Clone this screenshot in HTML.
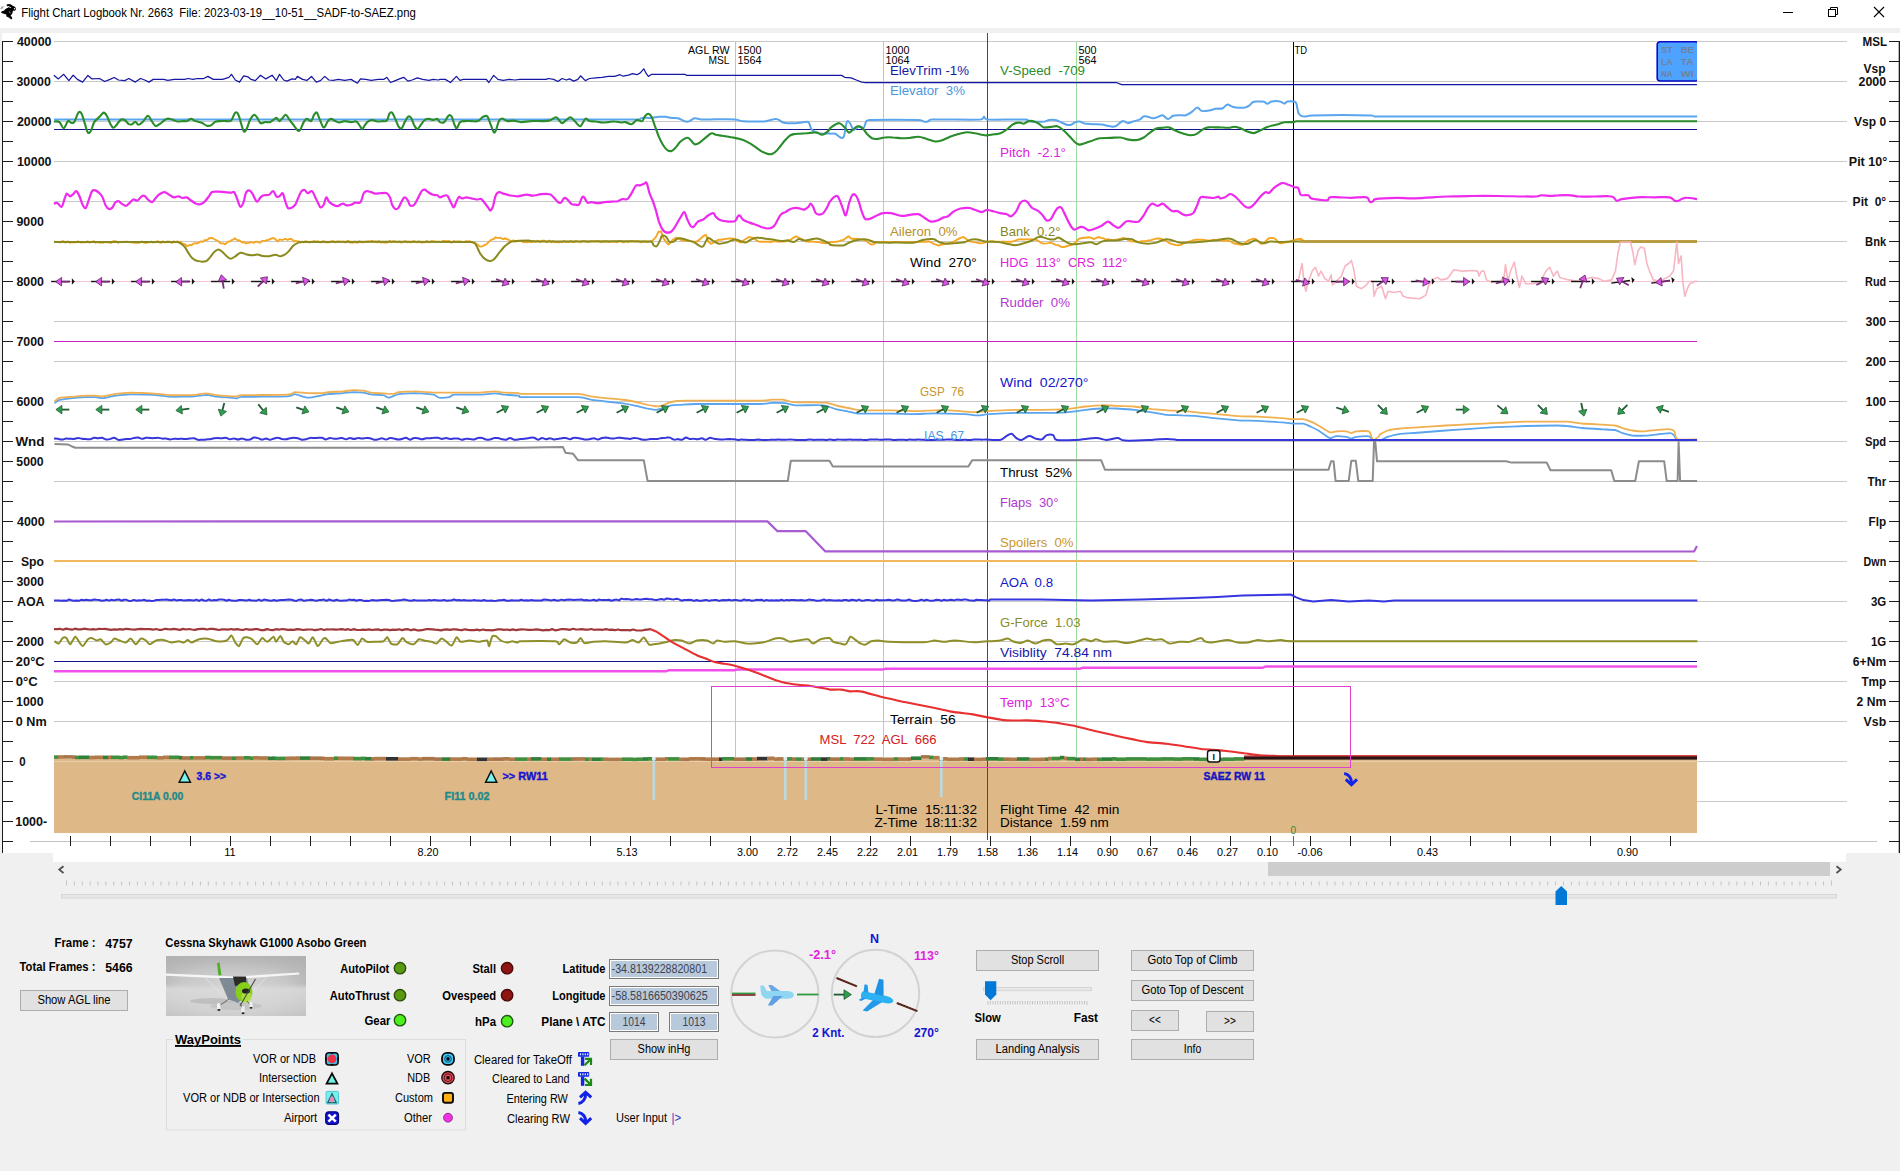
<!DOCTYPE html>
<html><head><meta charset="utf-8"><title>Flight Chart Logbook Nr. 2663</title>
<style>
html,body{margin:0;padding:0;background:#f0f0f0;overflow:hidden}
body{width:1900px;height:1171px}
svg{display:block;font-family:"Liberation Sans",sans-serif}
</style></head><body>
<svg width="1900" height="1171" viewBox="0 0 1900 1171" shape-rendering="auto">
<rect x="0" y="0" width="1900" height="1171" fill="#f0f0f0" />
<rect x="0" y="0" width="1900" height="28" fill="#ffffff" />
<rect x="2" y="33" width="1898" height="820" fill="#ffffff" />
<rect x="53" y="853" width="1793" height="9" fill="#ffffff" />
<g><polygon points="0.2,8.8 1.5,6.6 4.6,6.2 3,7.8 2.2,9.2" fill="#a8a8a8"/><path d="M6.3 5 C8 3.2 11 3.7 13 6 C15 6.3 16.3 7.8 15.8 9.8 C15.2 11 13.8 11 13 10.5 L12.2 14 L10.6 15.2 L12.4 18.2 L11.3 19.6 L8.8 17.4 L6.4 16.6 L6.3 14.6 L3 13.6 L1.1 12.8 L1.5 11.4 L4.2 10.6 C5 9 6.5 8 8.6 7.8 C8 6.5 7 5.8 6.3 5 Z" fill="#000"/><path d="M7.9 6.3 L10.9 7.7" stroke="#fff" stroke-width="0.9"/><circle cx="14.5" cy="8.8" r="0.7" fill="#fff"/><path d="M9.3 11.3 L10.2 13.3" stroke="#fff" stroke-width="0.6"/></g>
<text x="21.3" y="16.7" font-size="12" fill="#000" text-anchor="start" font-weight="normal" textLength="394.5" lengthAdjust="spacingAndGlyphs" xml:space="preserve" >Flight Chart Logbook Nr. 2663  File: 2023-03-19__10-51__SADF-to-SAEZ.png</text>
<line x1="1783" y1="12.5" x2="1793" y2="12.5" stroke="#000" stroke-width="1" />
<rect x="1828.5" y="9.5" width="7" height="7" fill="#fff" stroke="#000" stroke-width="1"/><path d="M1830.5 9.5 V7.5 H1837.5 V14.5 H1835.5" fill="none" stroke="#000" stroke-width="1"/>
<path d="M1874 7 L1884 17 M1884 7 L1874 17" stroke="#000" stroke-width="1.1" fill="none"/>
<rect x="54" y="41" width="1793" height="1" fill="#c9c9c9" />
<rect x="54" y="81" width="1793" height="1" fill="#c9c9c9" />
<rect x="54" y="121" width="1793" height="1" fill="#c9c9c9" />
<rect x="54" y="161" width="1793" height="1" fill="#c9c9c9" />
<rect x="54" y="201" width="1793" height="1" fill="#c9c9c9" />
<rect x="54" y="241" width="1793" height="1" fill="#c9c9c9" />
<rect x="54" y="281" width="1793" height="1" fill="#c9c9c9" />
<rect x="54" y="321" width="1793" height="1" fill="#c9c9c9" />
<rect x="54" y="361" width="1793" height="1" fill="#c9c9c9" />
<rect x="54" y="401" width="1793" height="1" fill="#c9c9c9" />
<rect x="54" y="441" width="1793" height="1" fill="#c9c9c9" />
<rect x="54" y="481" width="1793" height="1" fill="#c9c9c9" />
<rect x="54" y="521" width="1793" height="1" fill="#c9c9c9" />
<rect x="54" y="561" width="1793" height="1" fill="#c9c9c9" />
<rect x="54" y="601" width="1793" height="1" fill="#c9c9c9" />
<rect x="54" y="641" width="1793" height="1" fill="#c9c9c9" />
<rect x="54" y="681" width="1793" height="1" fill="#c9c9c9" />
<rect x="54" y="721" width="1793" height="1" fill="#c9c9c9" />
<rect x="54" y="761" width="1793" height="1" fill="#c9c9c9" />
<rect x="54" y="801" width="1793" height="1" fill="#c9c9c9" />
<rect x="30" y="841" width="1847" height="1" fill="#c4c4c4" />
<rect x="2" y="41" width="1" height="812" fill="#1a1a1a" />
<rect x="2" y="41" width="11" height="1" fill="#1a1a1a" />
<rect x="2" y="61" width="11" height="1" fill="#1a1a1a" />
<rect x="2" y="81" width="11" height="1" fill="#1a1a1a" />
<rect x="2" y="101" width="11" height="1" fill="#1a1a1a" />
<rect x="2" y="121" width="11" height="1" fill="#1a1a1a" />
<rect x="2" y="141" width="11" height="1" fill="#1a1a1a" />
<rect x="2" y="161" width="11" height="1" fill="#1a1a1a" />
<rect x="2" y="181" width="11" height="1" fill="#1a1a1a" />
<rect x="2" y="201" width="11" height="1" fill="#1a1a1a" />
<rect x="2" y="221" width="11" height="1" fill="#1a1a1a" />
<rect x="2" y="241" width="11" height="1" fill="#1a1a1a" />
<rect x="2" y="261" width="11" height="1" fill="#1a1a1a" />
<rect x="2" y="281" width="11" height="1" fill="#1a1a1a" />
<rect x="2" y="301" width="11" height="1" fill="#1a1a1a" />
<rect x="2" y="321" width="11" height="1" fill="#1a1a1a" />
<rect x="2" y="341" width="11" height="1" fill="#1a1a1a" />
<rect x="2" y="361" width="11" height="1" fill="#1a1a1a" />
<rect x="2" y="381" width="11" height="1" fill="#1a1a1a" />
<rect x="2" y="401" width="11" height="1" fill="#1a1a1a" />
<rect x="2" y="421" width="11" height="1" fill="#1a1a1a" />
<rect x="2" y="441" width="11" height="1" fill="#1a1a1a" />
<rect x="2" y="461" width="11" height="1" fill="#1a1a1a" />
<rect x="2" y="481" width="11" height="1" fill="#1a1a1a" />
<rect x="2" y="501" width="11" height="1" fill="#1a1a1a" />
<rect x="2" y="521" width="11" height="1" fill="#1a1a1a" />
<rect x="2" y="541" width="11" height="1" fill="#1a1a1a" />
<rect x="2" y="561" width="11" height="1" fill="#1a1a1a" />
<rect x="2" y="581" width="11" height="1" fill="#1a1a1a" />
<rect x="2" y="601" width="11" height="1" fill="#1a1a1a" />
<rect x="2" y="621" width="11" height="1" fill="#1a1a1a" />
<rect x="2" y="641" width="11" height="1" fill="#1a1a1a" />
<rect x="2" y="661" width="11" height="1" fill="#1a1a1a" />
<rect x="2" y="681" width="11" height="1" fill="#1a1a1a" />
<rect x="2" y="701" width="11" height="1" fill="#1a1a1a" />
<rect x="2" y="721" width="11" height="1" fill="#1a1a1a" />
<rect x="2" y="741" width="11" height="1" fill="#1a1a1a" />
<rect x="2" y="761" width="11" height="1" fill="#1a1a1a" />
<rect x="2" y="781" width="11" height="1" fill="#1a1a1a" />
<rect x="2" y="801" width="11" height="1" fill="#1a1a1a" />
<rect x="2" y="821" width="11" height="1" fill="#1a1a1a" />
<rect x="2" y="841" width="11" height="1" fill="#1a1a1a" />
<rect x="1898.7" y="41" width="1.3" height="812" fill="#1a1a1a" />
<rect x="1889" y="41" width="10" height="1" fill="#1a1a1a" />
<rect x="1889" y="61" width="10" height="1" fill="#1a1a1a" />
<rect x="1889" y="81" width="10" height="1" fill="#1a1a1a" />
<rect x="1889" y="101" width="10" height="1" fill="#1a1a1a" />
<rect x="1889" y="121" width="10" height="1" fill="#1a1a1a" />
<rect x="1889" y="141" width="10" height="1" fill="#1a1a1a" />
<rect x="1889" y="161" width="10" height="1" fill="#1a1a1a" />
<rect x="1889" y="181" width="10" height="1" fill="#1a1a1a" />
<rect x="1889" y="201" width="10" height="1" fill="#1a1a1a" />
<rect x="1889" y="221" width="10" height="1" fill="#1a1a1a" />
<rect x="1889" y="241" width="10" height="1" fill="#1a1a1a" />
<rect x="1889" y="261" width="10" height="1" fill="#1a1a1a" />
<rect x="1889" y="281" width="10" height="1" fill="#1a1a1a" />
<rect x="1889" y="301" width="10" height="1" fill="#1a1a1a" />
<rect x="1889" y="321" width="10" height="1" fill="#1a1a1a" />
<rect x="1889" y="341" width="10" height="1" fill="#1a1a1a" />
<rect x="1889" y="361" width="10" height="1" fill="#1a1a1a" />
<rect x="1889" y="381" width="10" height="1" fill="#1a1a1a" />
<rect x="1889" y="401" width="10" height="1" fill="#1a1a1a" />
<rect x="1889" y="421" width="10" height="1" fill="#1a1a1a" />
<rect x="1889" y="441" width="10" height="1" fill="#1a1a1a" />
<rect x="1889" y="461" width="10" height="1" fill="#1a1a1a" />
<rect x="1889" y="481" width="10" height="1" fill="#1a1a1a" />
<rect x="1889" y="501" width="10" height="1" fill="#1a1a1a" />
<rect x="1889" y="521" width="10" height="1" fill="#1a1a1a" />
<rect x="1889" y="541" width="10" height="1" fill="#1a1a1a" />
<rect x="1889" y="561" width="10" height="1" fill="#1a1a1a" />
<rect x="1889" y="581" width="10" height="1" fill="#1a1a1a" />
<rect x="1889" y="601" width="10" height="1" fill="#1a1a1a" />
<rect x="1889" y="621" width="10" height="1" fill="#1a1a1a" />
<rect x="1889" y="641" width="10" height="1" fill="#1a1a1a" />
<rect x="1889" y="661" width="10" height="1" fill="#1a1a1a" />
<rect x="1889" y="681" width="10" height="1" fill="#1a1a1a" />
<rect x="1889" y="701" width="10" height="1" fill="#1a1a1a" />
<rect x="1889" y="721" width="10" height="1" fill="#1a1a1a" />
<rect x="1889" y="741" width="10" height="1" fill="#1a1a1a" />
<rect x="1889" y="761" width="10" height="1" fill="#1a1a1a" />
<rect x="1889" y="781" width="10" height="1" fill="#1a1a1a" />
<rect x="1889" y="801" width="10" height="1" fill="#1a1a1a" />
<rect x="1889" y="821" width="10" height="1" fill="#1a1a1a" />
<rect x="1889" y="841" width="10" height="1" fill="#1a1a1a" />
<rect x="54" y="759" width="1643" height="74" fill="#deb887" />
<rect x="54" y="761" width="1643" height="1" fill="#e6cfae" />
<text x="16.9" y="45.6" font-size="12.6" fill="#111" text-anchor="start" font-weight="bold" textLength="34.6" lengthAdjust="spacingAndGlyphs" xml:space="preserve" >40000</text>
<text x="16.4" y="85.6" font-size="12.6" fill="#111" text-anchor="start" font-weight="bold" textLength="34.4" lengthAdjust="spacingAndGlyphs" xml:space="preserve" >30000</text>
<text x="16.9" y="125.6" font-size="12.6" fill="#111" text-anchor="start" font-weight="bold" textLength="34.6" lengthAdjust="spacingAndGlyphs" xml:space="preserve" >20000</text>
<text x="16.9" y="165.6" font-size="12.6" fill="#111" text-anchor="start" font-weight="bold" textLength="34.6" lengthAdjust="spacingAndGlyphs" xml:space="preserve" >10000</text>
<text x="16.4" y="225.6" font-size="12.6" fill="#111" text-anchor="start" font-weight="bold" textLength="27.5" lengthAdjust="spacingAndGlyphs" xml:space="preserve" >9000</text>
<text x="16.4" y="285.6" font-size="12.6" fill="#111" text-anchor="start" font-weight="bold" textLength="27.5" lengthAdjust="spacingAndGlyphs" xml:space="preserve" >8000</text>
<text x="16.4" y="345.6" font-size="12.6" fill="#111" text-anchor="start" font-weight="bold" textLength="27.5" lengthAdjust="spacingAndGlyphs" xml:space="preserve" >7000</text>
<text x="16.4" y="405.6" font-size="12.6" fill="#111" text-anchor="start" font-weight="bold" textLength="27.5" lengthAdjust="spacingAndGlyphs" xml:space="preserve" >6000</text>
<text x="15.4" y="445.6" font-size="12.6" fill="#111" text-anchor="start" font-weight="bold" textLength="29" lengthAdjust="spacingAndGlyphs" xml:space="preserve" >Wnd</text>
<text x="16.3" y="465.6" font-size="12.6" fill="#111" text-anchor="start" font-weight="bold" textLength="27.4" lengthAdjust="spacingAndGlyphs" xml:space="preserve" >5000</text>
<text x="17" y="525.6" font-size="12.6" fill="#111" text-anchor="start" font-weight="bold" textLength="27.6" lengthAdjust="spacingAndGlyphs" xml:space="preserve" >4000</text>
<text x="21" y="565.6" font-size="12.6" fill="#111" text-anchor="start" font-weight="bold" textLength="23" lengthAdjust="spacingAndGlyphs" xml:space="preserve" >Spo</text>
<text x="16.4" y="585.6" font-size="12.6" fill="#111" text-anchor="start" font-weight="bold" textLength="27.5" lengthAdjust="spacingAndGlyphs" xml:space="preserve" >3000</text>
<text x="16.9" y="605.6" font-size="12.6" fill="#111" text-anchor="start" font-weight="bold" textLength="27.7" lengthAdjust="spacingAndGlyphs" xml:space="preserve" >AOA</text>
<text x="16.4" y="645.6" font-size="12.6" fill="#111" text-anchor="start" font-weight="bold" textLength="27.5" lengthAdjust="spacingAndGlyphs" xml:space="preserve" >2000</text>
<text x="15.8" y="665.6" font-size="12.6" fill="#111" text-anchor="start" font-weight="bold" textLength="28.8" lengthAdjust="spacingAndGlyphs" xml:space="preserve" >20°C</text>
<text x="15.8" y="685.6" font-size="12.6" fill="#111" text-anchor="start" font-weight="bold" textLength="22" lengthAdjust="spacingAndGlyphs" xml:space="preserve" >0°C</text>
<text x="16" y="705.6" font-size="12.6" fill="#111" text-anchor="start" font-weight="bold" textLength="27.6" lengthAdjust="spacingAndGlyphs" xml:space="preserve" >1000</text>
<text x="15.8" y="725.6" font-size="12.6" fill="#111" text-anchor="start" font-weight="bold" textLength="30.8" lengthAdjust="spacingAndGlyphs" xml:space="preserve" >0 Nm</text>
<text x="19.3" y="765.6" font-size="12.6" fill="#111" text-anchor="start" font-weight="bold" textLength="6.4" lengthAdjust="spacingAndGlyphs" xml:space="preserve" >0</text>
<text x="15.2" y="825.6" font-size="12.6" fill="#111" text-anchor="start" font-weight="bold" textLength="32" lengthAdjust="spacingAndGlyphs" xml:space="preserve" >1000-</text>
<text x="1887.2" y="45.6" font-size="12.6" fill="#111" text-anchor="end" font-weight="bold" textLength="24.6" lengthAdjust="spacingAndGlyphs" xml:space="preserve" >MSL</text>
<text x="1885.6" y="72.6" font-size="12.6" fill="#111" text-anchor="end" font-weight="bold" textLength="22" lengthAdjust="spacingAndGlyphs" xml:space="preserve" >Vsp</text>
<text x="1886.2" y="85.6" font-size="12.6" fill="#111" text-anchor="end" font-weight="bold" textLength="27.7" lengthAdjust="spacingAndGlyphs" xml:space="preserve" >2000</text>
<text x="1886.2" y="125.6" font-size="12.6" fill="#111" text-anchor="end" font-weight="bold" textLength="32.1" lengthAdjust="spacingAndGlyphs" xml:space="preserve" >Vsp 0</text>
<text x="1887.2" y="165.6" font-size="12.6" fill="#111" text-anchor="end" font-weight="bold" textLength="38.4" lengthAdjust="spacingAndGlyphs" xml:space="preserve" >Pit 10°</text>
<text x="1886.2" y="205.6" font-size="12.6" fill="#111" text-anchor="end" font-weight="bold" textLength="33.6" lengthAdjust="spacingAndGlyphs" xml:space="preserve" >Pit  0°</text>
<text x="1886.2" y="245.6" font-size="12.6" fill="#111" text-anchor="end" font-weight="bold" textLength="21.1" lengthAdjust="spacingAndGlyphs" xml:space="preserve" >Bnk</text>
<text x="1886.2" y="285.6" font-size="12.6" fill="#111" text-anchor="end" font-weight="bold" textLength="21.1" lengthAdjust="spacingAndGlyphs" xml:space="preserve" >Rud</text>
<text x="1886.2" y="325.6" font-size="12.6" fill="#111" text-anchor="end" font-weight="bold" textLength="20.6" lengthAdjust="spacingAndGlyphs" xml:space="preserve" >300</text>
<text x="1886.2" y="365.6" font-size="12.6" fill="#111" text-anchor="end" font-weight="bold" textLength="20.6" lengthAdjust="spacingAndGlyphs" xml:space="preserve" >200</text>
<text x="1886.2" y="405.6" font-size="12.6" fill="#111" text-anchor="end" font-weight="bold" textLength="20.6" lengthAdjust="spacingAndGlyphs" xml:space="preserve" >100</text>
<text x="1886.2" y="445.6" font-size="12.6" fill="#111" text-anchor="end" font-weight="bold" textLength="21.1" lengthAdjust="spacingAndGlyphs" xml:space="preserve" >Spd</text>
<text x="1886.2" y="485.6" font-size="12.6" fill="#111" text-anchor="end" font-weight="bold" textLength="18.8" lengthAdjust="spacingAndGlyphs" xml:space="preserve" >Thr</text>
<text x="1886.2" y="525.6" font-size="12.6" fill="#111" text-anchor="end" font-weight="bold" textLength="17.6" lengthAdjust="spacingAndGlyphs" xml:space="preserve" >Flp</text>
<text x="1886.2" y="565.6" font-size="12.6" fill="#111" text-anchor="end" font-weight="bold" textLength="22.6" lengthAdjust="spacingAndGlyphs" xml:space="preserve" >Dwn</text>
<text x="1886.2" y="605.6" font-size="12.6" fill="#111" text-anchor="end" font-weight="bold" textLength="15.3" lengthAdjust="spacingAndGlyphs" xml:space="preserve" >3G</text>
<text x="1886.2" y="645.6" font-size="12.6" fill="#111" text-anchor="end" font-weight="bold" textLength="15.3" lengthAdjust="spacingAndGlyphs" xml:space="preserve" >1G</text>
<text x="1886.2" y="665.6" font-size="12.6" fill="#111" text-anchor="end" font-weight="bold" textLength="33.4" lengthAdjust="spacingAndGlyphs" xml:space="preserve" >6+Nm</text>
<text x="1886.2" y="685.6" font-size="12.6" fill="#111" text-anchor="end" font-weight="bold" textLength="24.8" lengthAdjust="spacingAndGlyphs" xml:space="preserve" >Tmp</text>
<text x="1886.2" y="705.6" font-size="12.6" fill="#111" text-anchor="end" font-weight="bold" textLength="29.6" lengthAdjust="spacingAndGlyphs" xml:space="preserve" >2 Nm</text>
<text x="1886.2" y="725.6" font-size="12.6" fill="#111" text-anchor="end" font-weight="bold" textLength="22.6" lengthAdjust="spacingAndGlyphs" xml:space="preserve" >Vsb</text>
<rect x="70" y="836" width="1" height="10" fill="#1a1a1a" />
<rect x="110" y="836" width="1" height="10" fill="#1a1a1a" />
<rect x="150" y="836" width="1" height="10" fill="#1a1a1a" />
<rect x="190" y="836" width="1" height="10" fill="#1a1a1a" />
<rect x="230" y="836" width="1" height="10" fill="#1a1a1a" />
<rect x="270" y="836" width="1" height="10" fill="#1a1a1a" />
<rect x="310" y="836" width="1" height="10" fill="#1a1a1a" />
<rect x="350" y="836" width="1" height="10" fill="#1a1a1a" />
<rect x="390" y="836" width="1" height="10" fill="#1a1a1a" />
<rect x="430" y="836" width="1" height="10" fill="#1a1a1a" />
<rect x="470" y="836" width="1" height="10" fill="#1a1a1a" />
<rect x="510" y="836" width="1" height="10" fill="#1a1a1a" />
<rect x="550" y="836" width="1" height="10" fill="#1a1a1a" />
<rect x="590" y="836" width="1" height="10" fill="#1a1a1a" />
<rect x="630" y="836" width="1" height="10" fill="#1a1a1a" />
<rect x="670" y="836" width="1" height="10" fill="#1a1a1a" />
<rect x="710" y="836" width="1" height="10" fill="#1a1a1a" />
<rect x="750" y="836" width="1" height="10" fill="#1a1a1a" />
<rect x="790" y="836" width="1" height="10" fill="#1a1a1a" />
<rect x="830" y="836" width="1" height="10" fill="#1a1a1a" />
<rect x="870" y="836" width="1" height="10" fill="#1a1a1a" />
<rect x="910" y="836" width="1" height="10" fill="#1a1a1a" />
<rect x="950" y="836" width="1" height="10" fill="#1a1a1a" />
<rect x="990" y="836" width="1" height="10" fill="#1a1a1a" />
<rect x="1030" y="836" width="1" height="10" fill="#1a1a1a" />
<rect x="1070" y="836" width="1" height="10" fill="#1a1a1a" />
<rect x="1110" y="836" width="1" height="10" fill="#1a1a1a" />
<rect x="1150" y="836" width="1" height="10" fill="#1a1a1a" />
<rect x="1190" y="836" width="1" height="10" fill="#1a1a1a" />
<rect x="1230" y="836" width="1" height="10" fill="#1a1a1a" />
<rect x="1270" y="836" width="1" height="10" fill="#1a1a1a" />
<rect x="1310" y="836" width="1" height="10" fill="#1a1a1a" />
<rect x="1350" y="836" width="1" height="10" fill="#1a1a1a" />
<rect x="1390" y="836" width="1" height="10" fill="#1a1a1a" />
<rect x="1430" y="836" width="1" height="10" fill="#1a1a1a" />
<rect x="1470" y="836" width="1" height="10" fill="#1a1a1a" />
<rect x="1510" y="836" width="1" height="10" fill="#1a1a1a" />
<rect x="1550" y="836" width="1" height="10" fill="#1a1a1a" />
<rect x="1590" y="836" width="1" height="10" fill="#1a1a1a" />
<rect x="1630" y="836" width="1" height="10" fill="#1a1a1a" />
<rect x="1670" y="836" width="1" height="10" fill="#1a1a1a" />
<rect x="1293" y="836" width="1" height="10" fill="#2e8b2e" />
<text x="230" y="855.8" font-size="11" fill="#000" text-anchor="middle" font-weight="normal" textLength="11.5" lengthAdjust="spacingAndGlyphs" xml:space="preserve" >11</text>
<text x="428" y="855.8" font-size="11" fill="#000" text-anchor="middle" font-weight="normal" textLength="21" lengthAdjust="spacingAndGlyphs" xml:space="preserve" >8.20</text>
<text x="627" y="855.8" font-size="11" fill="#000" text-anchor="middle" font-weight="normal" textLength="21" lengthAdjust="spacingAndGlyphs" xml:space="preserve" >5.13</text>
<text x="747.5" y="855.8" font-size="11" fill="#000" text-anchor="middle" font-weight="normal" textLength="21" lengthAdjust="spacingAndGlyphs" xml:space="preserve" >3.00</text>
<text x="787.5" y="855.8" font-size="11" fill="#000" text-anchor="middle" font-weight="normal" textLength="21" lengthAdjust="spacingAndGlyphs" xml:space="preserve" >2.72</text>
<text x="827.5" y="855.8" font-size="11" fill="#000" text-anchor="middle" font-weight="normal" textLength="21" lengthAdjust="spacingAndGlyphs" xml:space="preserve" >2.45</text>
<text x="867.5" y="855.8" font-size="11" fill="#000" text-anchor="middle" font-weight="normal" textLength="21" lengthAdjust="spacingAndGlyphs" xml:space="preserve" >2.22</text>
<text x="907.5" y="855.8" font-size="11" fill="#000" text-anchor="middle" font-weight="normal" textLength="21" lengthAdjust="spacingAndGlyphs" xml:space="preserve" >2.01</text>
<text x="947.5" y="855.8" font-size="11" fill="#000" text-anchor="middle" font-weight="normal" textLength="21" lengthAdjust="spacingAndGlyphs" xml:space="preserve" >1.79</text>
<text x="987.5" y="855.8" font-size="11" fill="#000" text-anchor="middle" font-weight="normal" textLength="21" lengthAdjust="spacingAndGlyphs" xml:space="preserve" >1.58</text>
<text x="1027.5" y="855.8" font-size="11" fill="#000" text-anchor="middle" font-weight="normal" textLength="21" lengthAdjust="spacingAndGlyphs" xml:space="preserve" >1.36</text>
<text x="1067.5" y="855.8" font-size="11" fill="#000" text-anchor="middle" font-weight="normal" textLength="21" lengthAdjust="spacingAndGlyphs" xml:space="preserve" >1.14</text>
<text x="1107.5" y="855.8" font-size="11" fill="#000" text-anchor="middle" font-weight="normal" textLength="21" lengthAdjust="spacingAndGlyphs" xml:space="preserve" >0.90</text>
<text x="1147.5" y="855.8" font-size="11" fill="#000" text-anchor="middle" font-weight="normal" textLength="21" lengthAdjust="spacingAndGlyphs" xml:space="preserve" >0.67</text>
<text x="1187.5" y="855.8" font-size="11" fill="#000" text-anchor="middle" font-weight="normal" textLength="21" lengthAdjust="spacingAndGlyphs" xml:space="preserve" >0.46</text>
<text x="1227.5" y="855.8" font-size="11" fill="#000" text-anchor="middle" font-weight="normal" textLength="21" lengthAdjust="spacingAndGlyphs" xml:space="preserve" >0.27</text>
<text x="1267.5" y="855.8" font-size="11" fill="#000" text-anchor="middle" font-weight="normal" textLength="21" lengthAdjust="spacingAndGlyphs" xml:space="preserve" >0.10</text>
<text x="1310" y="855.8" font-size="11" fill="#000" text-anchor="middle" font-weight="normal" textLength="25" lengthAdjust="spacingAndGlyphs" xml:space="preserve" >-0.06</text>
<text x="1427.5" y="855.8" font-size="11" fill="#000" text-anchor="middle" font-weight="normal" textLength="21" lengthAdjust="spacingAndGlyphs" xml:space="preserve" >0.43</text>
<text x="1627.5" y="855.8" font-size="11" fill="#000" text-anchor="middle" font-weight="normal" textLength="21" lengthAdjust="spacingAndGlyphs" xml:space="preserve" >0.90</text>
<text x="1293.3" y="833.6" font-size="10" fill="#2e8b2e" text-anchor="middle" font-weight="normal" xml:space="preserve" >0</text>
<rect x="735" y="42" width="1" height="715" fill="#9fdc9f" />
<rect x="883" y="42" width="1" height="715" fill="#9fdc9f" />
<rect x="1076" y="42" width="1" height="715" fill="#9fdc9f" />
<rect x="987" y="33" width="1" height="807" fill="#1b6b1b" />
<rect x="1293" y="42" width="1" height="715" fill="#000" />
<polyline points="53.8,75.2 58.4,78.9 63.7,74.3 68.9,80.6 73.2,75.2 77.4,79.4 82.6,82.1 87.9,75.4 92.1,78.9 99.5,78.5 104.7,81.5 110.0,79.4 114.2,77.5 118.4,80.0 124.7,80.6 128.9,78.5 135.3,82.1 140.5,78.5 144.7,80.0 148.9,82.1 153.2,79.4 163.7,79.4 167.9,80.4 174.2,79.4 184.7,79.4 187.9,78.5 193.2,79.4 197.4,78.5 203.7,78.5 207.9,76.4 213.2,79.4 222.6,79.4 228.9,77.3 231.5,74.3 235.3,80.0 239.5,82.1 243.7,75.8 247.9,76.8 251.1,79.4 255.3,80.6 260.5,75.2 265.8,78.9 272.1,75.2 276.3,80.6 279.5,74.3 283.7,80.0 286.8,81.1 292.1,78.9 295.3,79.4 297.4,76.4 302.6,79.4 306.8,80.4 311.5,76.4 316.3,82.1 320.5,80.6 324.7,76.4 328.9,80.0 333.2,80.4 338.4,79.4 344.7,80.4 351.1,79.4 357.4,83.2 360.5,78.9 365.8,79.4 371.1,80.4 378.4,79.4 383.7,79.4 386.8,77.3 390.6,82.5 395.3,80.6 399.5,78.9 403.7,77.3 407.9,81.1 412.1,80.0 417.4,77.9 422.6,79.4 428.9,80.4 433.2,79.4 438.4,80.0 440.0,79.4 445.3,79.4 450.5,82.5 456.4,76.4 460.0,80.4 463.2,79.4 486.3,79.4 488.8,82.5 493.7,75.4 497.9,79.4 503.2,80.4 509.5,79.4 514.7,80.0 520.0,79.4 546.3,79.4 548.4,78.5 553.7,79.4 557.9,81.5 562.1,78.5 566.3,80.0 569.5,78.9 573.7,81.1 577.9,79.4 580.6,75.8 585.3,80.6 589.5,78.5 595.8,77.9 602.1,77.3 608.4,76.4 614.7,76.4 620.0,74.7 623.2,76.2 628.4,75.2 632.6,73.7 636.8,74.7 640.0,73.1 643.8,68.8 646.3,73.7 648.4,76.4 651.6,74.3 685.3,74.3 686.3,75.4 829.5,75.4 830.0,75.4 841.6,75.4 844.7,77.3 851.1,77.9 856.3,80.0 861.6,82.1 864.7,82.5 1116.3,82.5 1121.6,84.6 1696.9,84.6" fill="none" stroke="#1616a4" stroke-width="1.25" stroke-linejoin="round" stroke-linecap="butt" />
<rect x="54" y="129" width="1643" height="1" fill="#14148c" />
<path d="M54.0 119.5C118.3 119.5 342.7 119.5 440.0 119.5C537.3 119.5 604.2 119.6 637.9 119.4C642.1 119.1 640.0 118.1 642.1 117.9C644.2 117.6 647.7 118.1 650.5 117.9C653.3 117.7 656.5 117.0 658.9 116.8C661.4 116.7 663.2 116.7 665.3 116.8C667.4 117.0 669.5 117.6 671.6 117.9C673.7 118.1 675.8 117.8 677.9 118.3C680.0 118.8 682.5 120.5 684.2 121.1C686.0 121.6 686.7 121.9 688.4 121.5C690.2 121.0 692.6 118.7 694.7 118.3C696.8 118.0 698.6 119.2 701.1 119.4C703.5 119.5 703.9 119.4 709.5 119.4C715.1 119.4 729.5 119.1 734.7 119.4C740.0 119.6 738.9 120.7 741.1 121.1C743.2 121.4 743.5 121.4 747.4 121.5C751.2 121.5 760.0 121.8 764.2 121.5C768.4 121.1 770.4 119.7 772.6 119.4C774.9 119.0 776.1 118.8 777.9 119.4C779.6 119.9 781.2 121.9 783.2 122.5C785.1 123.2 787.4 123.1 789.5 123.2C791.6 123.3 793.7 123.3 795.8 123.2C797.9 123.1 800.0 122.7 802.1 122.5C804.2 122.4 806.8 120.9 808.4 122.1C810.0 123.3 810.2 127.7 811.6 129.5C813.0 131.2 814.9 131.9 816.8 132.6C818.8 133.3 821.1 133.6 823.2 133.7C825.3 133.8 828.3 133.3 829.5 133.3C830.0 133.3 829.5 133.6 830.0 133.7C831.0 133.8 833.7 133.2 835.3 133.7C836.8 134.2 838.1 136.3 839.5 136.8C840.9 137.4 842.5 139.3 843.7 136.8C844.9 134.4 845.8 124.4 846.8 122.1C847.9 119.8 848.9 121.9 850.0 123.2C851.1 124.4 852.1 128.6 853.2 129.5C854.2 130.4 855.3 128.9 856.3 128.4C857.4 127.9 858.2 126.4 859.5 126.3C860.7 126.2 862.6 128.6 863.7 127.8C864.8 127.0 865.2 122.8 866.2 121.5C867.3 120.2 866.2 120.2 870.0 120.0C878.7 119.8 909.5 119.8 918.4 120.0C923.7 120.2 922.1 121.2 923.7 121.5C925.3 121.7 926.5 121.8 927.9 121.5C929.3 121.2 927.9 119.9 932.1 119.6C940.9 119.3 971.9 120.0 980.5 119.6C984.1 119.1 983.1 116.8 984.1 116.8C985.2 116.8 984.1 119.1 986.8 119.6C993.8 120.0 1018.6 119.3 1025.8 119.6C1030.0 119.9 1026.8 121.2 1030.0 121.5C1033.2 121.8 1041.6 121.7 1044.7 121.5C1047.9 121.2 1047.2 120.2 1048.9 120.0C1050.7 119.8 1053.2 119.6 1055.3 120.0C1057.4 120.4 1059.6 121.7 1061.6 122.5C1063.5 123.3 1065.3 124.5 1066.8 124.8C1068.4 125.2 1069.6 125.3 1071.1 124.8C1072.5 124.4 1073.9 122.7 1075.3 122.1C1076.7 121.5 1077.9 121.2 1079.5 121.5C1081.1 121.7 1082.5 123.1 1084.7 123.6C1087.0 124.0 1090.4 124.0 1093.2 124.2C1096.0 124.4 1098.8 124.3 1101.6 124.6C1104.4 125.0 1107.7 126.0 1110.0 126.3C1112.3 126.6 1113.3 127.1 1115.3 126.3C1117.2 125.5 1120.0 122.3 1121.6 121.5C1123.2 120.7 1123.7 121.2 1124.7 121.5C1125.8 121.8 1126.5 123.2 1127.9 123.2C1129.3 123.2 1131.2 122.1 1133.2 121.5C1135.1 120.9 1137.7 120.4 1139.5 119.6C1141.2 118.7 1142.3 116.9 1143.7 116.4C1145.1 116.0 1146.3 116.5 1147.9 116.8C1149.5 117.2 1151.4 118.3 1153.2 118.3C1154.9 118.3 1156.8 117.4 1158.4 116.8C1160.0 116.3 1161.1 114.8 1162.6 115.2C1164.2 115.5 1166.1 118.8 1167.9 118.9C1169.6 119.1 1171.2 116.4 1173.2 115.8C1175.1 115.2 1177.4 115.3 1179.5 115.2C1181.6 115.1 1183.7 115.8 1185.8 115.2C1187.9 114.6 1190.2 112.9 1192.1 111.6C1194.0 110.3 1195.8 107.5 1197.4 107.4C1198.9 107.3 1199.6 110.4 1201.6 110.9C1203.5 111.5 1206.7 110.9 1208.9 110.5C1211.2 110.2 1213.5 109.2 1215.3 108.8C1217.0 108.5 1218.7 108.4 1219.5 108.4C1220.0 108.4 1219.5 108.9 1220.0 108.8C1220.6 108.8 1221.9 108.7 1223.2 108.0C1224.4 107.3 1225.8 104.8 1227.4 104.6C1228.9 104.4 1230.7 106.2 1232.6 106.7C1234.6 107.3 1236.8 107.7 1238.9 107.8C1241.1 107.9 1243.5 107.8 1245.3 107.4C1247.0 106.9 1248.1 106.2 1249.5 105.3C1250.9 104.3 1251.9 102.3 1253.7 101.7C1255.4 101.1 1258.2 101.5 1260.0 101.5C1261.8 101.5 1263.0 101.3 1264.2 101.7C1265.4 102.1 1266.1 103.8 1267.4 103.8C1268.6 103.8 1269.5 101.9 1271.6 101.5C1273.7 101.1 1277.9 101.1 1280.0 101.5C1282.1 101.8 1283.0 103.6 1284.2 103.6C1285.4 103.6 1285.8 101.8 1287.4 101.5C1288.9 101.1 1292.2 101.2 1293.7 101.5C1295.2 101.8 1295.4 101.3 1296.2 103.2C1297.0 105.0 1297.5 110.5 1298.3 112.6C1299.1 114.7 1299.7 115.2 1301.1 115.8C1302.4 116.4 1304.4 116.5 1306.3 116.4C1308.2 116.4 1306.3 115.5 1312.6 115.4C1323.5 115.2 1361.2 115.2 1371.6 115.4C1374.7 115.5 1371.6 116.2 1374.7 116.4C1429.0 116.6 1643.3 116.4 1697.1 116.4" fill="none" stroke="#5aa5ee" stroke-width="2.0" stroke-linejoin="round" />
<path d="M53.8 121.5C54.7 121.6 57.8 120.9 59.5 122.1C61.1 123.3 62.3 128.6 63.7 128.4C65.1 128.2 66.7 122.0 67.9 121.1C69.1 120.1 70.0 122.6 71.1 122.7C72.1 122.9 73.0 123.8 74.2 122.1C75.4 120.4 77.2 114.0 78.4 112.6C79.6 111.2 80.5 111.9 81.6 113.7C82.6 115.4 83.7 120.0 84.7 123.2C85.8 126.3 86.8 131.4 87.9 132.6C88.9 133.9 90.0 132.3 91.1 130.5C92.1 128.8 92.8 124.4 94.2 122.1C95.6 119.8 97.9 118.4 99.5 116.8C101.1 115.3 102.5 112.8 103.7 112.6C104.9 112.5 105.8 114.0 106.8 115.8C107.9 117.5 108.9 121.2 110.0 123.2C111.1 125.2 112.1 127.4 113.2 127.8C114.2 128.1 115.1 126.6 116.3 125.3C117.5 124.0 119.1 120.9 120.5 120.0C121.9 119.1 123.3 119.3 124.7 120.0C126.1 120.7 127.7 123.5 128.9 124.2C130.2 124.9 131.1 124.6 132.1 124.2C133.2 123.8 134.2 121.6 135.3 121.7C136.3 121.8 137.2 124.8 138.4 124.8C139.6 124.9 141.1 123.6 142.6 122.1C144.2 120.6 146.5 116.1 147.9 115.8C149.3 115.4 149.8 118.3 151.1 120.0C152.3 121.7 153.9 125.2 155.3 125.9C156.7 126.6 157.9 125.2 159.5 124.2C161.1 123.2 163.3 120.9 164.7 120.0C166.1 119.1 166.7 118.6 167.9 118.5C169.1 118.5 170.5 119.1 172.1 119.6C173.7 120.1 175.6 121.2 177.4 121.5C179.1 121.7 181.1 121.1 182.6 121.1C184.2 121.0 185.4 121.4 186.8 121.1C188.2 120.7 189.6 118.9 191.1 118.9C192.5 118.9 193.5 120.4 195.3 121.1C197.0 121.7 199.6 122.0 201.6 122.7C203.5 123.5 205.3 125.3 206.8 125.7C208.4 126.1 209.6 125.9 211.1 125.3C212.5 124.6 213.7 122.4 215.3 121.7C216.8 121.0 218.6 121.2 220.5 121.1C222.5 120.9 225.1 121.1 226.8 121.1C228.6 121.0 229.6 122.0 231.1 120.6C232.5 119.2 234.0 113.6 235.3 112.6C236.5 111.6 237.4 112.6 238.4 114.7C239.5 116.8 240.6 122.5 241.6 125.3C242.5 128.1 243.2 131.1 244.1 131.6C245.0 132.1 245.9 130.4 246.8 128.4C247.8 126.5 248.8 122.3 250.0 120.0C251.2 117.7 253.0 115.1 254.2 114.7C255.4 114.4 256.3 116.5 257.4 117.9C258.4 119.3 259.3 122.5 260.5 123.2C261.8 123.9 263.2 122.3 264.7 122.1C266.3 121.9 268.6 122.5 270.0 122.1C271.4 121.8 272.1 120.7 273.2 120.0C274.2 119.3 275.3 117.7 276.3 117.9C277.4 118.1 278.4 121.1 279.5 121.1C280.5 121.1 281.6 118.9 282.6 117.9C283.7 116.8 284.7 114.6 285.8 114.7C286.8 114.9 287.9 117.5 288.9 118.9C290.0 120.4 291.1 121.8 292.1 123.2C293.2 124.6 294.2 126.1 295.3 127.4C296.3 128.7 297.5 130.6 298.4 130.9C299.3 131.3 299.6 130.9 300.5 129.5C301.4 128.0 302.6 123.9 303.7 122.1C304.7 120.4 305.6 119.1 306.8 118.9C308.1 118.8 309.8 121.8 311.1 121.1C312.3 120.4 313.2 116.1 314.2 114.7C315.2 113.3 316.1 111.9 316.9 112.6C317.8 113.3 318.5 116.7 319.5 118.9C320.4 121.2 321.8 125.0 322.6 126.3C323.5 127.6 323.9 127.8 324.7 126.9C325.6 126.1 326.8 122.4 327.9 121.1C328.9 119.7 329.8 118.9 331.1 118.9C332.3 118.9 333.9 120.5 335.3 121.1C336.7 121.6 337.9 122.5 339.5 122.5C341.1 122.5 342.8 121.1 344.7 121.1C346.7 121.0 349.1 122.0 351.1 122.1C353.0 122.2 354.9 120.9 356.3 121.5C357.7 122.0 358.5 124.0 359.5 125.3C360.5 126.5 361.3 129.1 362.2 129.1C363.1 129.1 363.8 126.5 364.7 125.3C365.7 124.0 366.7 122.6 367.9 121.7C369.1 120.8 370.5 120.0 372.1 120.0C373.7 120.0 375.6 121.3 377.4 121.5C379.1 121.6 381.1 121.2 382.6 121.1C384.2 120.9 385.7 121.9 386.8 120.6C388.0 119.4 388.5 115.0 389.4 113.7C390.2 112.4 391.1 111.8 392.1 112.6C393.1 113.5 394.2 116.7 395.3 118.9C396.3 121.2 397.4 124.7 398.4 126.3C399.5 127.9 400.5 129.1 401.6 128.4C402.6 127.7 403.7 124.0 404.7 122.1C405.8 120.2 406.8 117.5 407.9 116.8C408.9 116.1 410.0 116.5 411.1 117.9C412.1 119.3 413.2 123.4 414.2 125.3C415.3 127.1 416.3 129.1 417.4 129.1C418.4 129.1 419.3 126.8 420.5 125.3C421.8 123.8 423.3 121.1 424.7 120.0C426.1 118.9 427.5 118.9 428.9 118.9C430.4 118.9 431.8 120.0 433.2 120.0C434.6 120.0 436.2 118.6 437.4 118.9C438.5 119.3 438.8 121.6 439.9 122.1C441.0 122.6 442.8 123.2 444.2 122.1C445.6 121.1 447.2 116.7 448.4 115.8C449.6 114.8 450.6 115.0 451.6 116.4C452.6 117.8 453.4 122.2 454.3 124.2C455.2 126.2 455.9 128.8 456.8 128.4C457.8 128.1 458.6 123.3 460.0 122.1C461.4 120.9 463.3 121.2 465.3 121.1C467.2 120.9 469.5 121.1 471.6 121.1C473.7 121.1 476.0 121.8 477.9 121.1C479.8 120.4 481.6 117.6 483.2 116.8C484.7 116.1 486.1 115.2 487.4 116.4C488.6 117.6 489.5 121.6 490.5 124.2C491.6 126.8 492.8 130.9 493.7 132.0C494.6 133.1 494.9 132.4 495.8 130.5C496.7 128.7 497.9 123.1 498.9 121.1C500.0 119.1 500.7 118.5 502.1 118.5C503.5 118.5 505.4 120.7 507.4 121.1C509.3 121.4 511.4 120.5 513.7 120.6C516.0 120.8 518.2 122.0 521.1 122.1C523.9 122.2 527.2 121.2 530.5 121.1C533.9 120.9 537.9 121.1 541.1 121.1C544.2 121.0 547.0 121.3 549.5 120.6C551.9 120.0 554.2 117.4 555.8 117.3C557.4 117.2 557.9 119.0 558.9 120.0C560.0 121.0 560.9 123.2 562.1 123.2C563.3 123.2 564.9 121.0 566.3 120.0C567.7 119.0 569.1 117.1 570.5 117.3C571.9 117.4 573.2 119.5 574.7 121.1C576.3 122.6 578.6 126.1 580.0 126.3C581.4 126.5 582.2 123.4 583.2 122.1C584.1 120.8 584.8 118.7 585.9 118.5C586.9 118.4 587.8 120.6 589.5 121.1C591.1 121.5 593.7 121.2 595.8 121.5C597.9 121.7 600.0 122.4 602.1 122.5C604.2 122.6 606.3 122.3 608.4 122.1C610.5 121.9 612.6 121.4 614.7 121.5C616.8 121.5 619.3 122.4 621.1 122.5C622.8 122.6 623.5 121.8 625.3 122.1C627.0 122.4 629.6 124.6 631.6 124.2C633.5 123.9 635.1 120.5 636.8 120.0C638.6 119.5 640.7 121.8 642.1 121.1C643.5 120.4 644.2 117.0 645.3 115.8C646.3 114.6 647.4 113.5 648.4 113.7C649.5 113.9 650.5 114.9 651.6 116.8C652.6 118.8 653.5 121.9 654.7 125.3C656.0 128.6 657.5 133.5 658.9 136.8C660.4 140.2 661.8 143.1 663.2 145.3C664.6 147.5 666.0 149.2 667.4 150.1C668.8 151.1 670.2 151.4 671.6 150.9C673.0 150.5 674.4 148.8 675.8 147.4C677.2 145.9 678.6 143.5 680.0 142.1C681.4 140.7 682.8 139.6 684.2 138.9C685.6 138.2 687.2 137.5 688.4 137.9C689.6 138.2 690.5 140.0 691.6 141.1C692.6 142.1 693.5 143.9 694.7 144.2C696.0 144.6 697.2 144.2 698.9 143.2C700.7 142.1 703.2 139.5 705.3 137.9C707.4 136.2 709.8 133.8 711.6 133.3C713.3 132.7 714.0 134.3 715.8 134.7C717.5 135.2 720.0 135.4 722.1 135.8C724.2 136.1 726.3 136.5 728.4 136.8C730.5 137.2 732.3 137.4 734.7 137.9C737.2 138.4 740.7 139.1 743.2 140.0C745.6 140.9 747.4 141.9 749.5 143.2C751.6 144.4 753.7 146.0 755.8 147.4C757.9 148.8 760.0 150.5 762.1 151.6C764.2 152.7 766.7 153.8 768.4 154.1C770.2 154.5 771.2 154.3 772.6 153.7C774.0 153.1 775.4 151.9 776.8 150.5C778.2 149.1 779.6 147.0 781.1 145.3C782.5 143.5 783.9 141.6 785.3 140.0C786.7 138.4 788.1 136.8 789.5 135.8C790.9 134.8 791.9 134.5 793.7 134.1C795.4 133.8 797.9 133.8 800.0 133.7C802.1 133.5 804.2 133.4 806.3 133.3C808.4 133.1 810.9 132.7 812.6 132.6C814.4 132.5 815.3 132.3 816.8 132.6C818.4 133.0 820.5 134.7 822.1 134.7C823.7 134.7 825.1 133.5 826.3 132.6C827.5 131.8 828.9 130.2 829.5 129.5C830.0 128.8 829.5 129.1 830.0 128.4C830.8 127.7 832.6 126.1 834.2 125.3C835.8 124.4 837.7 122.8 839.5 123.2C841.2 123.5 843.2 125.8 844.7 127.4C846.3 128.9 847.5 132.3 848.9 132.6C850.4 133.0 851.8 130.5 853.2 129.5C854.6 128.4 855.8 126.5 857.4 126.3C858.9 126.1 861.1 127.2 862.6 128.4C864.2 129.6 865.3 132.0 866.8 133.7C868.4 135.3 870.4 137.4 872.1 138.3C873.9 139.2 875.3 139.1 877.4 138.9C879.5 138.8 882.1 137.7 884.7 137.5C887.4 137.2 890.4 137.3 893.2 137.5C896.0 137.6 898.8 138.2 901.6 138.3C904.4 138.4 907.2 138.1 910.0 137.9C912.8 137.6 915.6 136.7 918.4 136.8C921.2 137.0 924.0 138.2 926.8 138.9C929.6 139.7 932.8 141.2 935.3 141.5C937.7 141.7 939.1 141.2 941.6 140.4C944.0 139.6 947.2 137.9 950.0 136.8C952.8 135.8 955.6 134.9 958.4 134.1C961.2 133.3 964.0 132.4 966.8 132.2C969.6 132.1 972.8 132.8 975.3 133.3C977.7 133.7 979.6 134.4 981.6 134.7C983.5 135.1 984.7 135.4 986.8 135.4C988.9 135.3 991.9 134.7 994.2 134.3C996.5 134.0 998.4 134.1 1000.5 133.3C1002.6 132.5 1004.7 131.0 1006.8 129.5C1008.9 128.0 1011.1 125.4 1013.2 124.2C1015.3 123.1 1017.7 122.6 1019.5 122.5C1021.2 122.5 1022.1 124.0 1023.7 123.8C1025.3 123.5 1027.2 121.4 1028.9 121.1C1030.7 120.7 1032.5 120.9 1034.2 121.5C1036.0 122.0 1037.9 123.2 1039.5 124.2C1041.1 125.2 1041.8 126.9 1043.7 127.4C1045.6 127.8 1048.8 127.1 1051.1 126.9C1053.3 126.8 1055.3 125.7 1057.4 126.3C1059.5 126.9 1061.6 128.8 1063.7 130.5C1065.8 132.3 1068.1 134.8 1070.0 136.8C1071.9 138.8 1073.7 141.2 1075.3 142.5C1076.8 143.8 1077.9 144.5 1079.5 144.6C1081.1 144.7 1082.8 143.8 1084.7 143.2C1086.7 142.6 1088.6 141.9 1091.1 141.1C1093.5 140.2 1096.3 138.8 1099.5 138.3C1102.6 137.8 1106.5 138.0 1110.0 137.9C1113.5 137.8 1117.4 137.2 1120.5 137.5C1123.7 137.8 1126.1 139.2 1128.9 139.6C1131.8 140.0 1134.9 140.4 1137.4 140.0C1139.8 139.6 1141.6 138.7 1143.7 137.5C1145.8 136.2 1147.9 134.1 1150.0 132.6C1152.1 131.1 1154.2 129.2 1156.3 128.4C1158.4 127.6 1160.5 128.0 1162.6 127.8C1164.7 127.6 1166.8 126.9 1168.9 127.4C1171.1 127.8 1172.8 129.5 1175.3 130.5C1177.7 131.6 1181.2 132.9 1183.7 133.7C1186.1 134.5 1187.9 135.1 1190.0 135.2C1192.1 135.2 1194.2 135.1 1196.3 134.1C1198.4 133.2 1200.7 130.6 1202.6 129.5C1204.6 128.4 1205.8 127.7 1207.9 127.4C1210.0 127.0 1213.3 127.4 1215.3 127.4C1217.2 127.4 1218.7 127.4 1219.5 127.4C1220.0 127.4 1219.5 127.3 1220.0 127.4C1221.5 127.4 1226.0 127.9 1228.4 127.8C1230.9 127.7 1232.6 126.6 1234.7 126.7C1236.8 126.8 1238.9 127.6 1241.1 128.4C1243.2 129.2 1245.3 130.8 1247.4 131.6C1249.5 132.4 1251.6 133.2 1253.7 133.1C1255.8 132.9 1257.7 131.5 1260.0 130.5C1262.3 129.5 1264.6 127.9 1267.4 126.9C1270.2 126.0 1274.0 125.4 1276.8 124.6C1279.6 123.9 1281.4 122.7 1284.2 122.3C1287.0 121.9 1291.6 122.3 1293.7 122.1C1295.8 121.9 1293.7 121.4 1296.8 121.3C1364.1 121.1 1630.4 121.3 1697.1 121.3" fill="none" stroke="#2a8c2a" stroke-width="2.1" stroke-linejoin="round" />
<path d="M53.8 203.7C54.4 203.6 56.1 202.5 57.4 203.1C58.7 203.6 60.4 207.6 61.6 206.8C62.8 206.1 63.9 200.6 64.7 198.4C65.6 196.2 66.0 193.9 66.8 193.6C67.7 193.2 68.9 196.2 70.0 196.3C71.1 196.4 72.1 195.1 73.2 194.2C74.2 193.3 75.3 190.7 76.3 191.1C77.4 191.4 78.4 194.0 79.5 196.3C80.5 198.6 81.6 202.8 82.6 204.7C83.7 206.7 84.7 208.8 85.8 207.9C86.8 207.0 87.9 202.3 88.9 199.5C90.0 196.7 91.1 192.6 92.1 191.1C93.2 189.5 94.0 190.1 95.3 190.4C96.5 190.8 98.2 192.0 99.5 193.2C100.7 194.3 101.6 195.3 102.6 197.4C103.7 199.5 104.7 203.9 105.8 205.8C106.8 207.7 107.9 208.6 108.9 208.9C110.0 209.3 111.1 208.9 112.1 207.9C113.2 206.8 114.2 203.8 115.3 202.6C116.3 201.5 117.4 201.0 118.4 201.2C119.5 201.3 120.4 202.9 121.6 203.7C122.8 204.5 124.6 205.8 125.8 205.8C127.0 205.8 127.7 204.7 128.9 203.7C130.2 202.6 131.8 200.0 133.2 199.5C134.6 198.9 136.0 201.1 137.4 200.5C138.8 200.0 140.4 197.1 141.6 196.3C142.8 195.5 143.7 195.4 144.7 195.9C145.8 196.4 146.7 198.4 147.9 199.5C149.1 200.5 150.9 202.4 152.1 202.2C153.3 202.0 154.0 199.8 155.3 198.4C156.5 197.1 157.9 195.3 159.5 194.2C161.1 193.2 163.0 191.9 164.7 192.1C166.5 192.3 168.4 194.4 170.0 195.3C171.6 196.1 172.8 197.2 174.2 197.4C175.6 197.5 177.0 196.2 178.4 196.3C179.8 196.4 181.2 197.8 182.6 198.0C184.0 198.2 185.4 196.9 186.8 197.4C188.2 197.8 189.5 199.5 191.1 200.5C192.6 201.6 194.7 203.1 196.3 203.7C197.9 204.3 199.1 204.5 200.5 204.1C201.9 203.8 203.3 202.9 204.7 201.6C206.1 200.3 207.7 197.9 208.9 196.3C210.2 194.7 210.5 192.9 212.1 192.1C213.7 191.3 216.3 191.7 218.4 191.7C220.5 191.7 222.6 191.9 224.7 192.1C226.8 192.3 229.5 192.7 231.1 192.7C232.6 192.7 233.2 191.0 234.2 192.1C235.3 193.2 236.3 197.0 237.4 199.5C238.4 201.9 239.5 206.5 240.5 206.8C241.6 207.2 242.8 203.9 243.7 201.6C244.6 199.3 244.9 195.0 245.8 193.2C246.7 191.3 247.9 190.4 248.9 190.4C250.0 190.4 251.1 191.6 252.1 193.2C253.2 194.7 254.4 198.1 255.3 199.5C256.1 200.9 256.5 201.9 257.4 201.6C258.2 201.2 259.5 198.4 260.5 197.4C261.6 196.3 262.3 195.7 263.7 195.3C265.1 194.8 267.4 195.5 268.9 194.8C270.5 194.1 271.9 190.8 273.2 191.1C274.4 191.3 275.3 195.4 276.3 196.3C277.4 197.2 278.4 196.8 279.5 196.3C280.5 195.8 281.8 192.6 282.6 193.2C283.5 193.7 283.9 197.0 284.7 199.5C285.6 201.9 286.7 206.6 287.9 207.9C289.1 209.2 290.9 208.0 292.1 207.5C293.3 206.9 294.2 206.4 295.3 204.7C296.3 203.1 297.4 199.6 298.4 197.4C299.5 195.1 300.5 192.3 301.6 191.1C302.6 189.8 303.7 189.6 304.7 190.0C305.8 190.4 306.7 193.0 307.9 193.2C309.1 193.3 310.9 190.4 312.1 191.1C313.3 191.8 314.2 195.3 315.3 197.4C316.3 199.5 317.5 202.0 318.4 203.7C319.3 205.4 319.6 207.3 320.5 207.5C321.4 207.6 322.7 206.4 323.7 204.7C324.6 203.1 325.3 197.9 326.2 197.4C327.1 196.8 327.8 200.4 328.9 201.6C330.1 202.8 331.8 204.0 333.2 204.7C334.6 205.5 335.8 206.4 337.4 206.2C338.9 206.0 341.1 203.8 342.6 203.7C344.2 203.5 345.4 205.2 346.8 205.4C348.2 205.5 349.6 205.2 351.1 204.7C352.5 204.3 353.7 203.1 355.3 202.6C356.8 202.2 359.1 203.8 360.5 202.2C361.9 200.6 362.6 195.0 363.7 193.2C364.7 191.3 365.6 191.2 366.8 191.1C368.1 190.9 369.6 191.7 371.1 192.1C372.5 192.5 373.7 193.4 375.3 193.6C376.8 193.8 378.6 193.2 380.5 193.2C382.5 193.1 385.3 192.5 386.8 193.2C388.4 193.9 389.1 195.4 390.0 197.4C390.9 199.3 391.2 202.8 392.1 204.7C393.0 206.7 394.2 208.4 395.3 208.9C396.3 209.5 397.4 209.1 398.4 207.9C399.5 206.7 400.5 203.3 401.6 201.6C402.6 199.8 403.7 197.5 404.7 197.4C405.8 197.2 407.0 199.2 407.9 200.5C408.8 201.9 408.9 204.7 410.0 205.4C411.1 206.1 412.8 206.1 414.2 204.7C415.6 203.4 417.2 199.6 418.4 197.4C419.6 195.1 420.5 192.4 421.6 191.1C422.6 189.8 423.5 189.3 424.7 189.6C426.0 189.9 427.5 191.9 428.9 192.7C430.4 193.6 431.8 194.4 433.2 194.8C434.6 195.3 436.2 194.8 437.4 195.3C438.5 195.7 438.8 197.3 439.9 197.4C441.0 197.4 443.0 196.0 444.2 195.7C445.5 195.4 446.3 194.7 447.4 195.7C448.4 196.7 449.5 199.6 450.5 201.6C451.6 203.5 452.7 207.5 453.7 207.5C454.7 207.5 455.5 203.3 456.4 201.6C457.3 199.8 458.0 197.5 458.9 196.9C459.9 196.4 460.9 198.4 462.1 198.4C463.3 198.5 464.7 197.4 466.3 197.4C467.9 197.4 469.8 198.1 471.6 198.4C473.3 198.8 475.3 199.4 476.8 199.5C478.4 199.6 479.6 198.4 481.1 199.1C482.5 199.8 484.0 202.2 485.3 203.7C486.5 205.2 487.5 206.8 488.4 207.9C489.3 209.0 489.8 210.8 490.5 210.4C491.3 210.1 492.2 208.3 493.1 205.8C493.9 203.3 494.8 197.5 495.8 195.3C496.8 193.0 497.7 192.4 498.9 192.1C500.2 191.8 501.4 193.1 503.2 193.6C504.9 194.1 507.0 194.8 509.5 195.3C511.9 195.7 515.1 196.4 517.9 196.3C520.7 196.2 523.9 194.7 526.3 194.6C528.8 194.5 530.2 195.8 532.6 195.7C535.1 195.6 538.2 194.5 541.1 194.2C543.9 194.0 547.4 193.7 549.5 194.2C551.6 194.7 552.3 196.1 553.7 197.4C555.1 198.7 556.7 201.1 557.9 202.0C559.1 202.9 560.0 203.3 561.1 202.6C562.1 202.0 563.2 198.5 564.2 198.0C565.3 197.5 566.1 198.5 567.4 199.5C568.6 200.5 570.2 203.2 571.6 204.1C573.0 205.0 574.6 204.6 575.8 204.7C577.0 204.8 577.9 206.0 578.9 204.7C580.0 203.5 581.2 198.6 582.1 197.4C583.0 196.1 583.3 196.5 584.2 197.4C585.1 198.2 586.1 201.8 587.4 202.6C588.6 203.4 589.8 202.1 591.6 202.2C593.3 202.3 595.8 203.1 597.9 203.1C600.0 203.1 601.9 202.5 604.2 202.2C606.5 202.0 609.3 201.8 611.6 201.6C613.9 201.4 616.1 201.6 617.9 201.2C619.6 200.7 620.5 199.4 622.1 199.1C623.7 198.7 625.8 200.0 627.4 199.1C628.9 198.1 630.2 195.4 631.6 193.2C633.0 190.9 634.4 187.1 635.8 185.8C637.2 184.5 638.6 185.7 640.0 185.4C641.4 185.0 643.1 184.1 644.2 183.7C645.3 183.3 645.9 181.5 646.7 183.1C647.6 184.6 648.5 190.2 649.5 193.2C650.5 196.1 651.6 197.7 652.6 200.5C653.7 203.3 654.7 206.5 655.8 210.0C656.8 213.5 657.9 218.4 658.9 221.6C660.0 224.7 661.1 227.2 662.1 228.9C663.2 230.7 663.9 231.6 665.3 232.1C666.7 232.6 669.1 232.6 670.5 232.1C671.9 231.6 672.6 230.4 673.7 228.9C674.7 227.5 675.6 225.8 676.8 223.7C678.1 221.6 679.8 218.2 681.1 216.3C682.3 214.4 683.2 211.6 684.2 212.1C685.3 212.6 686.3 217.2 687.4 219.5C688.4 221.8 689.5 224.6 690.5 225.8C691.6 227.0 692.5 227.5 693.7 226.8C694.9 226.1 696.3 222.8 697.9 221.6C699.5 220.4 701.4 220.5 703.2 219.5C704.9 218.4 706.7 216.3 708.4 215.3C710.1 214.2 712.0 212.9 713.3 213.2C714.5 213.4 714.7 215.6 715.8 216.7C716.9 217.9 718.4 219.2 720.0 219.9C721.6 220.6 722.8 220.9 725.3 221.2C727.7 221.4 732.6 222.0 734.7 221.2C736.8 220.4 737.0 217.2 737.9 216.3C738.8 215.4 739.1 215.1 740.0 215.7C740.9 216.3 741.6 218.7 743.2 219.9C744.7 221.1 747.4 221.8 749.5 222.6C751.6 223.4 753.7 224.0 755.8 224.7C757.9 225.5 760.0 226.6 762.1 227.3C764.2 227.9 766.5 228.7 768.4 228.5C770.4 228.4 772.1 227.9 773.7 226.4C775.3 224.9 776.7 221.5 777.9 219.5C779.1 217.4 779.8 215.4 781.1 214.2C782.3 213.0 783.7 213.0 785.3 212.1C786.8 211.2 788.8 209.6 790.5 208.9C792.3 208.2 794.2 208.0 795.8 207.9C797.4 207.8 798.6 208.2 800.0 208.5C801.4 208.8 802.8 209.9 804.2 209.6C805.6 209.3 807.4 207.8 808.4 206.8C809.5 205.9 809.8 203.7 810.5 203.7C811.3 203.7 812.2 205.3 813.1 206.8C813.9 208.4 814.8 211.9 815.8 213.2C816.8 214.5 817.7 214.6 818.9 214.6C820.2 214.6 821.8 214.5 823.2 213.2C824.6 211.9 826.2 208.8 827.4 206.8C828.5 204.9 828.6 203.3 829.9 201.6C831.2 199.8 833.8 197.0 835.3 196.3C836.7 195.6 837.2 195.4 838.4 197.4C839.6 199.3 841.4 204.9 842.6 207.9C843.9 210.9 844.7 216.0 845.8 215.3C846.8 214.6 847.9 207.0 848.9 203.7C850.0 200.4 851.1 196.7 852.1 195.3C853.2 193.8 854.2 194.0 855.3 194.8C856.3 195.7 857.4 197.8 858.4 200.5C859.5 203.2 860.5 208.1 861.6 211.1C862.6 214.0 863.5 217.1 864.7 218.4C866.0 219.8 867.2 219.4 868.9 219.1C870.7 218.7 873.0 217.3 875.3 216.3C877.5 215.3 880.0 213.7 882.6 213.2C885.3 212.6 887.9 212.7 891.1 213.2C894.2 213.6 898.4 215.6 901.6 215.9C904.7 216.2 907.2 215.1 910.0 214.8C912.8 214.6 916.0 213.7 918.4 214.2C920.9 214.7 922.6 216.8 924.7 218.0C926.8 219.2 928.9 221.2 931.1 221.6C933.2 222.0 935.3 221.2 937.4 220.5C939.5 219.8 941.9 218.1 943.7 217.4C945.4 216.7 946.1 217.4 947.9 216.3C949.6 215.3 952.1 212.4 954.2 211.1C956.3 209.8 958.1 209.1 960.5 208.5C963.0 208.0 966.5 207.6 968.9 207.9C971.4 208.1 973.2 209.3 975.3 210.0C977.4 210.7 979.6 212.1 981.6 212.1C983.5 212.1 984.7 210.1 986.8 210.0C988.9 209.9 991.9 210.9 994.2 211.5C996.5 212.0 998.4 212.7 1000.5 213.2C1002.6 213.6 1005.1 213.7 1006.8 214.2C1008.6 214.7 1009.5 216.8 1011.1 216.3C1012.6 215.8 1014.7 213.3 1016.3 211.1C1017.9 208.8 1019.1 204.4 1020.5 202.6C1021.9 200.9 1023.5 200.5 1024.7 200.5C1026.0 200.5 1026.7 201.4 1027.9 202.6C1029.1 203.9 1030.4 206.5 1032.1 207.9C1033.9 209.3 1036.7 209.8 1038.4 211.1C1040.2 212.3 1041.2 213.7 1042.6 215.3C1044.0 216.8 1045.4 219.9 1046.8 220.5C1048.2 221.1 1049.6 220.4 1051.1 218.8C1052.5 217.3 1054.0 212.9 1055.3 211.1C1056.5 209.2 1057.4 208.0 1058.4 207.5C1059.5 206.9 1060.4 206.4 1061.6 207.9C1062.8 209.4 1064.4 213.5 1065.8 216.3C1067.2 219.1 1068.6 222.5 1070.0 224.7C1071.4 226.9 1072.5 229.2 1074.2 229.6C1076.0 229.9 1078.8 227.1 1080.5 226.8C1082.3 226.6 1083.3 227.3 1084.7 227.9C1086.1 228.5 1087.2 230.3 1088.9 230.4C1090.7 230.5 1093.2 229.3 1095.3 228.5C1097.4 227.8 1099.5 226.9 1101.6 225.8C1103.7 224.6 1106.0 221.7 1107.9 221.6C1109.8 221.5 1111.4 224.1 1113.2 225.2C1114.9 226.2 1116.8 228.0 1118.4 227.9C1120.0 227.8 1121.2 225.9 1122.6 224.7C1124.0 223.6 1125.1 221.7 1126.8 221.2C1128.6 220.6 1131.2 221.5 1133.2 221.6C1135.1 221.6 1136.7 222.6 1138.4 221.6C1140.2 220.5 1142.1 217.5 1143.7 215.3C1145.3 213.0 1146.5 209.8 1147.9 207.9C1149.3 206.0 1150.5 204.0 1152.1 203.7C1153.7 203.3 1155.6 205.8 1157.4 205.8C1159.1 205.8 1161.1 203.5 1162.6 203.7C1164.2 203.9 1165.3 205.6 1166.8 206.8C1168.4 208.1 1170.4 210.4 1172.1 211.1C1173.9 211.8 1175.6 210.5 1177.4 211.1C1179.1 211.6 1181.1 213.5 1182.6 214.2C1184.2 214.9 1185.1 215.4 1186.8 215.3C1188.6 215.1 1191.4 214.9 1193.2 213.2C1194.9 211.4 1196.1 207.4 1197.4 204.7C1198.6 202.1 1198.9 198.6 1200.5 197.4C1202.1 196.1 1204.7 197.3 1206.8 197.4C1208.9 197.5 1211.2 198.1 1213.2 198.0C1215.1 197.9 1217.3 196.7 1218.4 196.7C1219.6 196.8 1218.9 198.2 1220.0 198.3C1221.1 198.4 1223.4 198.0 1225.1 197.3C1226.7 196.6 1228.4 194.1 1230.1 194.0C1231.8 193.9 1233.5 195.3 1235.2 196.5C1236.8 197.8 1238.5 199.9 1240.2 201.6C1241.9 203.3 1243.6 205.7 1245.3 206.6C1246.9 207.6 1248.6 208.0 1250.3 207.4C1252.0 206.8 1253.7 204.7 1255.4 202.8C1257.1 201.0 1258.7 198.3 1260.4 196.5C1262.1 194.8 1264.0 192.9 1265.5 192.2C1266.9 191.6 1267.8 193.5 1269.3 192.7C1270.7 192.0 1272.2 189.3 1274.3 187.7C1276.4 186.1 1279.6 183.6 1281.9 183.1C1284.2 182.6 1286.1 184.0 1288.2 184.7C1290.3 185.3 1292.8 186.6 1294.5 187.2C1296.2 187.8 1297.3 186.9 1298.3 188.2C1299.4 189.5 1299.2 193.6 1300.8 194.8C1302.5 195.9 1306.7 194.7 1308.4 195.3C1310.1 195.9 1309.1 197.5 1310.9 198.3C1312.8 199.1 1317.1 199.5 1319.8 199.8C1322.5 200.1 1325.7 200.7 1327.4 200.3C1329.1 199.9 1328.0 197.8 1329.9 197.3C1331.8 196.8 1335.2 197.2 1338.7 197.3C1342.3 197.4 1346.7 197.8 1351.4 197.8C1356.0 197.8 1363.5 196.7 1366.5 197.3C1369.6 197.9 1368.5 200.9 1369.6 201.6C1370.6 202.3 1371.9 202.0 1372.8 201.6C1373.8 201.2 1372.8 199.7 1375.4 199.1C1379.4 198.4 1390.3 197.9 1396.8 197.8C1403.4 197.7 1406.1 198.5 1414.5 198.3C1422.9 198.1 1437.7 196.9 1447.4 196.5C1457.1 196.1 1464.2 196.1 1472.6 196.0C1481.1 195.9 1487.4 195.9 1497.9 196.0C1508.4 196.1 1528.6 196.7 1535.8 196.5C1540.8 196.4 1538.3 195.4 1540.8 195.3C1543.4 195.1 1548.0 195.8 1550.9 195.8C1553.9 195.8 1555.2 195.3 1558.5 195.3C1561.9 195.2 1567.8 195.1 1571.2 195.3C1574.5 195.5 1574.9 196.3 1578.7 196.5C1582.5 196.7 1588.4 196.5 1593.9 196.5C1599.4 196.5 1607.8 195.8 1611.6 196.5C1615.4 197.2 1614.9 200.4 1616.6 200.8C1618.3 201.2 1618.3 199.6 1621.7 199.1C1625.1 198.5 1631.4 197.6 1636.8 197.3C1642.3 197.0 1649.1 197.3 1654.5 197.3C1660.0 197.3 1666.3 196.7 1669.7 197.3C1673.1 197.9 1673.3 200.2 1674.7 200.8C1676.2 201.4 1676.8 201.3 1678.5 200.8C1680.2 200.3 1681.8 198.1 1684.8 197.8C1687.9 197.5 1694.9 198.8 1697.0 199.1" fill="none" stroke="#ee2aee" stroke-width="2.2" stroke-linejoin="round" />
<polyline points="54.0,241.5 55.6,242.1 57.2,241.8 58.8,242.2 60.4,242.2 62.0,241.2 63.6,241.1 65.2,242.6 66.8,241.6 68.4,241.5 70.0,242.9 71.6,241.9 73.2,242.6 74.8,242.0 76.4,242.3 78.0,241.4 79.6,242.2 81.2,242.7 82.8,242.0 84.4,242.4 86.0,242.3 87.6,241.2 89.2,242.5 90.8,242.2 92.4,241.6 94.0,241.2 95.6,242.7 97.2,242.0 98.8,242.4 100.4,242.7 102.0,242.4 103.6,242.8 105.2,241.8 106.8,242.5 108.4,241.9 110.0,242.8 111.6,242.7 113.2,241.3 114.8,241.3 116.4,241.5 118.0,242.8 119.6,241.9 121.2,242.2 122.8,241.6 124.4,242.0 126.0,241.8 127.6,241.7 129.2,242.2 130.8,242.2 132.4,242.7 134.0,242.3 135.6,242.8 137.2,242.6 138.8,242.9 140.4,242.3 142.0,241.4 143.6,242.6 145.2,242.8 146.8,242.7 148.4,242.1 150.0,242.4 151.6,241.5 153.2,242.6 154.8,242.1 156.4,241.6 158.0,241.2 159.6,242.6 161.2,242.9 162.8,241.3 164.4,242.5 166.0,241.8 167.6,241.4 169.2,241.6 170.8,242.5 172.4,242.7 174.0,241.2 175.6,242.2 177.2,241.2 178.8,242.4 180.4,241.7 182.0,243.3 183.6,244.1 185.2,244.1 186.8,246.2 188.4,245.7 190.0,244.9 191.6,245.3 193.2,243.7 194.8,243.3 196.4,243.2 198.0,243.2 199.6,241.9 201.2,241.3 202.8,242.0 204.4,240.1 206.0,240.3 207.6,239.6 209.2,238.3 210.8,238.0 212.4,238.0 214.0,239.0 215.6,239.8 217.2,240.5 218.8,241.7 220.4,243.3 222.0,243.4 223.6,243.5 225.2,244.4 226.8,242.8 228.4,241.5 230.0,241.4 231.6,240.1 233.2,239.7 234.8,238.3 236.4,239.5 238.0,240.6 239.6,240.3 241.2,241.9 242.8,242.5 244.4,242.0 246.0,243.5 247.6,242.8 249.2,242.9 250.8,242.0 252.4,242.4 254.0,242.7 255.6,241.6 257.2,241.8 258.8,242.5 260.4,242.6 262.0,240.9 263.6,240.9 265.2,240.9 266.8,240.1 268.4,240.0 270.0,239.2 271.6,238.4 273.2,238.0 274.8,238.7 276.4,240.2 278.0,241.4 279.6,239.4 281.2,239.7 282.8,239.9 284.4,239.1 286.0,239.0 287.6,240.0 289.2,239.0 290.8,238.9 292.4,239.7 294.0,241.7 295.6,240.9 297.2,241.3 298.8,241.4 300.4,242.3 302.0,241.7 303.6,242.4 305.2,241.2 306.8,241.5 308.4,242.1 310.0,242.5 311.6,241.7 313.2,241.3 314.8,241.1 316.4,241.8 318.0,241.2 319.6,242.3 321.2,242.4 322.8,241.2 324.4,241.4 326.0,242.3 327.6,242.0 329.2,242.3 330.8,241.5 332.4,241.1 334.0,241.4 335.6,242.3 337.2,241.4 338.8,241.5 340.4,241.6 342.0,241.6 343.6,241.6 345.2,242.5 346.8,241.2 348.4,240.9 350.0,242.6 351.6,242.5 353.2,242.7 354.8,241.7 356.4,242.6 358.0,242.6 359.6,241.3 361.2,242.2 362.8,242.4 364.4,242.1 366.0,241.8 367.6,241.4 369.2,241.5 370.8,241.3 372.4,241.0 374.0,241.9 375.6,241.4 377.2,242.3 378.8,241.0 380.4,242.5 382.0,242.1 383.6,242.6 385.2,242.5 386.8,242.5 388.4,241.9 390.0,240.9 391.6,242.2 393.2,241.2 394.8,241.4 396.4,242.1 398.0,241.8 399.6,241.6 401.2,242.6 402.8,242.0 404.4,241.5 406.0,241.3 407.6,242.4 409.2,241.7 410.8,242.3 412.4,241.5 414.0,241.2 415.6,241.9 417.2,242.4 418.8,241.2 420.4,242.3 422.0,242.5 423.6,242.3 425.2,242.4 426.8,240.9 428.4,242.0 430.0,242.4 431.6,241.0 433.2,241.4 434.8,241.4 436.4,241.8 438.0,241.7 439.6,241.7 441.2,242.3 442.8,240.9 444.4,241.0 446.0,241.1 447.6,241.1 449.2,241.0 450.8,242.6 452.4,242.4 454.0,241.0 455.6,241.8 457.2,241.5 458.8,241.5 460.4,241.5 462.0,242.1 463.6,241.9 465.2,241.5 466.8,241.2 468.4,241.5 470.0,241.2 471.6,242.3 473.2,242.9 474.8,243.2 476.4,243.7 478.0,244.9 479.6,246.3 481.2,246.6 482.8,246.2 484.4,244.9 486.0,244.7 487.6,243.1 489.2,241.5 490.8,240.1 492.4,239.4 494.0,238.8 495.6,237.3 497.2,238.0 498.8,237.9 500.4,237.8 502.0,238.6 503.6,239.2 505.2,238.3 506.8,239.2 508.4,239.5 510.0,240.7 511.6,241.1 513.2,240.4 514.8,241.5 516.4,241.5 518.0,240.7 519.6,241.1 521.2,240.7 522.8,242.0 524.4,241.9 526.0,242.3 527.6,242.1 529.2,241.9 530.8,242.0 532.4,241.7 534.0,240.9 535.6,241.7 537.2,240.7 538.8,240.9 540.4,242.1 542.0,240.8 543.6,240.8 545.2,240.9 546.8,242.3 548.4,241.0 550.0,240.7 551.6,242.2 553.2,240.9 554.8,242.2 556.4,241.9 558.0,242.2 559.6,242.4 561.2,241.7 562.8,242.1 564.4,240.7 566.0,242.1 567.6,241.6 569.2,242.0 570.8,240.9 572.4,242.0 574.0,242.4 575.6,240.8 577.2,241.3 578.8,241.7 580.4,242.2 582.0,241.1 583.6,241.0 585.2,241.1 586.8,241.8 588.4,242.0 590.0,241.4 591.6,241.3 593.2,241.4 594.8,241.3 596.4,241.4 598.0,240.8 599.6,241.6 601.2,242.4 602.8,241.4 604.4,242.0 606.0,241.0 607.6,241.9 609.2,242.0 610.8,241.9 612.4,241.6 614.0,241.5 615.6,241.8 617.2,242.3 618.8,240.9 620.4,240.9 622.0,242.0 623.6,242.3 625.2,241.6 626.8,241.5 628.4,242.0 630.0,241.0 631.6,241.2 633.2,241.0 634.8,241.7 636.4,241.2 638.0,241.1 639.6,241.9 641.2,242.4 642.8,241.2 644.4,241.9 646.0,241.4 647.6,242.2 649.2,241.7 650.8,241.2 652.4,240.5 654.0,239.1 656.0,236.8 658.5,231.7 661.0,231.4 663.5,238.2 666.0,242.0 668.5,244.6 671.0,241.6 673.5,239.3 676.0,237.7 678.5,238.5 681.0,240.0 683.5,240.5 686.0,240.7 688.5,240.9 691.0,241.1 693.5,241.7 696.0,241.8 698.5,240.4 701.0,238.3 703.5,235.9 706.0,234.9 708.5,241.7 711.0,243.8 713.5,242.7 716.0,240.8 718.5,239.8 721.0,239.7 723.5,239.3 726.0,238.9 728.5,238.5 731.0,238.5 733.5,238.6 736.0,240.4 738.5,241.6 741.0,242.6 743.5,240.5 746.0,238.8 748.5,237.3 751.0,237.3 753.5,238.0 756.0,239.9 758.5,241.5 761.0,241.8 763.5,241.8 766.0,241.7 768.5,241.8 771.0,242.0 773.5,241.4 776.0,241.3 778.5,241.7 781.0,241.4 783.5,241.6 786.0,241.3 788.5,240.2 791.0,239.6 793.5,237.6 796.0,236.4 798.5,237.5 801.0,239.0 803.5,240.0 806.0,241.3 808.5,241.8 811.0,241.5 813.5,241.6 816.0,242.1 818.5,242.1 821.0,242.5 823.5,243.0 826.0,243.2 828.5,242.8 831.0,242.3 833.5,242.1 836.0,241.7 838.5,241.5 841.0,240.4 843.5,240.0 846.0,238.1 848.5,236.2 851.0,238.5 853.5,239.0 856.0,238.6 858.5,239.0 861.0,239.6 863.5,239.7 866.0,240.8 868.5,242.7 871.0,244.5 873.5,244.4 876.0,242.4 878.5,242.2 881.0,242.3 883.5,242.0 886.0,242.1 888.5,242.5 891.0,242.1 893.5,241.9 896.0,241.9 898.5,242.0 901.0,242.4 903.5,242.1 906.0,242.1 908.5,241.9 911.0,242.5 913.5,242.2 916.0,242.0 918.5,241.9 921.0,241.7 923.5,241.7 926.0,241.9 928.5,241.4 931.0,242.3 933.5,243.8 936.0,244.7 938.5,245.6 941.0,244.7 943.5,244.4 946.0,243.9 948.5,243.0 951.0,242.8 953.5,241.8 956.0,240.3 958.5,238.9 961.0,237.6 963.5,237.0 966.0,238.7 968.5,241.0 971.0,241.6 973.5,242.1 976.0,242.4 978.5,243.0 981.0,243.4 983.5,242.8 986.0,242.0 988.5,241.8 991.0,241.3 993.5,241.3 996.0,241.9 998.5,241.6 1001.0,241.9 1003.5,241.5 1006.0,241.9 1008.5,241.7 1011.0,241.8 1013.5,241.1 1016.0,240.3 1018.5,239.4 1021.0,239.2 1023.5,239.5 1026.0,239.4 1028.5,239.4 1031.0,239.1 1033.5,239.4 1036.0,239.7 1038.5,241.0 1041.0,242.8 1043.5,243.6 1046.0,243.4 1048.5,243.1 1051.0,242.5 1053.5,243.9 1056.0,244.9 1058.5,245.3 1061.0,246.9 1063.5,247.0 1066.0,246.5 1068.5,245.6 1071.0,245.2 1073.5,243.7 1076.0,242.0 1078.5,239.2 1081.0,238.2 1083.5,237.8 1086.0,237.7 1088.5,237.2 1091.0,237.6 1093.5,239.0 1096.0,238.1 1098.5,237.0 1101.0,237.9 1103.5,238.2 1106.0,239.7 1108.5,239.3 1111.0,240.0 1113.5,240.1 1116.0,239.8 1118.5,239.1 1121.0,238.8 1123.5,237.8 1126.0,238.7 1128.5,240.1 1131.0,241.2 1133.5,241.5 1136.0,241.7 1138.5,241.9 1141.0,241.3 1143.5,241.1 1146.0,241.2 1148.5,240.5 1151.0,240.1 1153.5,239.3 1156.0,238.6 1158.5,238.5 1161.0,238.8 1163.5,239.9 1166.0,240.8 1168.5,242.6 1171.0,243.9 1173.5,244.5 1176.0,245.1 1178.5,245.2 1181.0,244.9 1183.5,243.5 1186.0,242.4 1188.5,241.7 1191.0,241.2 1193.5,240.1 1196.0,239.8 1198.5,239.8 1201.0,239.8 1203.5,239.9 1206.0,240.1 1208.5,240.7 1211.0,240.5 1213.5,239.8 1216.0,240.1 1218.5,239.4 1221.0,240.5 1223.5,240.7 1226.0,240.3 1228.5,240.9 1231.0,241.6 1233.5,243.3 1236.0,243.7 1238.5,244.2 1241.0,244.9 1243.5,244.5 1246.0,242.3 1248.5,240.3 1251.0,239.4 1253.5,238.6 1256.0,239.2 1258.5,241.6 1261.0,243.9 1263.5,243.2 1266.0,240.9 1268.5,238.5 1271.0,237.9 1273.5,238.0 1276.0,239.5 1278.5,242.5 1281.0,243.4 1283.5,242.8 1286.0,242.4 1288.5,242.0 1291.0,240.9 1293.5,240.5 1295.8,239.5 1300.8,238.7 1304.6,241.5 1697.0,241.5" fill="none" stroke="#f5a623" stroke-width="1.9" stroke-linejoin="round" stroke-linecap="butt" />
<path d="M54.0 242.0C74.4 242.0 155.2 241.8 176.3 242.0C180.5 242.2 179.1 242.5 180.5 243.3C181.9 244.1 183.5 245.4 184.7 246.8C186.0 248.3 186.7 250.2 187.9 252.1C189.1 254.0 190.5 256.5 192.1 258.0C193.7 259.5 195.1 260.4 197.4 260.9C199.6 261.5 203.7 261.8 205.8 261.2C207.9 260.6 208.6 258.9 210.0 257.4C211.4 255.9 212.8 253.4 214.2 252.1C215.6 250.8 217.0 249.6 218.4 249.6C219.8 249.6 221.2 251.0 222.6 252.1C224.0 253.2 225.5 255.2 226.8 256.3C228.2 257.4 229.2 258.8 230.6 258.8C232.0 258.8 233.6 257.3 235.3 256.3C236.9 255.3 238.8 253.1 240.5 252.7C242.3 252.4 243.9 253.8 245.8 254.2C247.7 254.6 250.2 255.2 252.1 255.3C254.0 255.3 255.6 254.5 257.4 254.6C259.1 254.7 260.7 255.6 262.6 255.9C264.6 256.2 266.8 256.5 268.9 256.3C271.1 256.1 273.3 254.8 275.3 254.8C277.2 254.8 278.9 256.4 280.5 256.3C282.1 256.3 283.3 255.5 284.7 254.6C286.1 253.8 287.5 252.5 288.9 251.1C290.4 249.6 291.8 247.1 293.2 245.8C294.6 244.5 295.8 243.7 297.4 243.1C298.9 242.4 297.4 242.2 302.6 242.0C331.7 241.8 442.7 241.5 471.6 242.0C475.8 242.5 474.4 242.9 475.8 244.7C477.2 246.6 478.6 250.9 480.0 253.2C481.4 255.4 482.6 257.1 484.2 258.4C485.8 259.7 487.9 260.8 489.5 260.9C491.1 261.1 492.1 260.8 493.7 259.5C495.3 258.2 497.2 255.3 498.9 253.2C500.7 251.1 502.5 248.6 504.2 246.8C506.0 245.1 507.9 243.6 509.5 242.6C511.1 241.7 510.5 241.5 513.7 241.2C516.8 240.8 524.9 240.5 528.4 240.5C531.9 240.6 528.4 241.4 534.7 241.6C555.1 241.8 630.7 240.9 650.5 241.6C653.7 242.2 652.6 244.6 653.7 245.4C654.7 246.1 655.8 247.0 656.8 246.2C657.9 245.4 659.1 242.3 660.0 240.5C660.9 238.8 661.1 236.3 662.1 235.7C663.2 235.1 665.1 235.9 666.3 236.9C667.5 238.0 668.2 241.2 669.5 242.0C670.7 242.8 672.3 242.2 673.7 241.6C675.1 241.0 676.5 238.9 677.9 238.4C679.3 237.9 680.4 238.1 682.1 238.4C683.9 238.8 686.3 239.8 688.4 240.5C690.5 241.2 692.8 241.7 694.7 242.6C696.7 243.6 698.6 245.6 700.0 246.2C701.4 246.8 702.1 247.2 703.2 246.2C704.2 245.3 705.4 241.9 706.3 240.5C707.2 239.1 707.4 237.8 708.4 237.8C709.5 237.8 710.9 239.5 712.6 240.5C714.4 241.5 716.7 243.3 718.9 243.7C721.2 244.0 723.7 243.3 726.3 242.6C728.9 241.9 732.3 239.7 734.7 239.5C737.2 239.2 739.3 240.6 741.1 241.2C742.8 241.7 743.9 242.7 745.3 242.6C746.7 242.5 747.7 241.3 749.5 240.5C751.2 239.7 753.3 238.1 755.8 237.8C758.2 237.4 761.4 238.1 764.2 238.4C767.0 238.7 769.8 239.1 772.6 239.5C775.4 239.9 778.6 240.8 781.1 240.9C783.5 241.1 785.3 240.4 787.4 240.5C789.5 240.7 791.8 242.2 793.7 242.0C795.6 241.8 797.2 239.3 798.9 239.1C800.7 238.8 802.3 240.5 804.2 240.5C806.1 240.6 808.4 239.8 810.5 239.5C812.6 239.1 814.7 238.2 816.8 238.4C818.9 238.6 821.1 239.6 823.2 240.5C825.3 241.4 828.3 243.0 829.5 243.7C830.0 244.4 829.5 244.5 830.0 244.7C831.1 245.0 834.0 245.3 836.3 245.4C838.6 245.5 841.4 245.9 843.7 245.4C846.0 244.8 847.7 243.1 850.0 242.2C852.3 241.3 854.6 240.4 857.4 239.9C860.2 239.4 864.0 239.1 866.8 239.5C869.6 239.8 871.2 241.5 874.2 242.0C877.2 242.5 880.5 242.5 884.7 242.6C888.9 242.7 894.6 242.6 899.5 242.6C904.4 242.6 910.4 243.1 914.2 242.6C918.1 242.2 919.5 240.5 922.6 239.9C925.8 239.3 930.4 238.7 933.2 239.1C936.0 239.4 937.0 241.4 939.5 242.2C941.9 243.0 945.1 243.5 947.9 243.7C950.7 243.8 953.5 243.3 956.3 243.1C959.1 242.8 962.5 242.7 964.7 242.2C967.0 241.7 967.9 240.4 970.0 239.9C972.1 239.4 974.7 239.2 977.4 239.5C980.0 239.8 982.3 241.2 985.8 241.6C989.3 242.0 994.9 241.6 998.4 242.0C1001.9 242.4 1004.0 243.2 1006.8 243.7C1009.6 244.2 1012.5 245.2 1015.3 245.2C1018.1 245.1 1020.9 244.0 1023.7 243.3C1026.5 242.5 1029.8 241.5 1032.1 240.5C1034.4 239.5 1035.8 238.0 1037.4 237.4C1038.9 236.8 1039.6 236.7 1041.6 236.9C1043.5 237.2 1046.8 238.6 1048.9 239.1C1051.1 239.5 1052.6 239.8 1054.2 239.5C1055.8 239.2 1056.8 237.2 1058.4 237.4C1060.0 237.5 1061.8 239.5 1063.7 240.5C1065.6 241.6 1067.9 243.1 1070.0 243.7C1072.1 244.3 1074.2 244.4 1076.3 244.3C1078.4 244.2 1080.2 243.6 1082.6 243.3C1085.1 242.9 1088.8 242.0 1091.1 242.2C1093.3 242.4 1094.6 244.4 1096.3 244.3C1098.1 244.2 1099.6 242.2 1101.6 241.6C1103.5 240.9 1105.4 240.7 1107.9 240.5C1110.4 240.4 1113.5 240.8 1116.3 240.5C1119.1 240.3 1122.3 239.3 1124.7 239.1C1127.2 238.8 1128.6 238.5 1131.1 239.1C1133.5 239.6 1136.7 241.9 1139.5 242.6C1142.3 243.4 1145.1 243.7 1147.9 243.7C1150.7 243.7 1153.5 243.3 1156.3 242.6C1159.1 241.9 1162.3 239.9 1164.7 239.5C1167.2 239.0 1168.6 239.4 1171.1 239.9C1173.5 240.4 1176.7 242.2 1179.5 242.6C1182.3 243.1 1185.1 242.7 1187.9 242.6C1190.7 242.6 1193.2 242.5 1196.3 242.2C1199.5 242.0 1203.0 241.5 1206.8 241.2C1210.7 240.8 1217.3 240.2 1219.5 239.9C1220.0 239.6 1219.5 239.7 1220.0 239.5C1221.8 239.3 1226.7 238.1 1230.1 238.7C1233.5 239.3 1237.3 242.4 1240.2 243.3C1243.2 244.1 1245.3 244.3 1247.8 243.8C1250.3 243.3 1252.8 240.3 1255.4 240.2C1257.9 240.1 1260.4 243.1 1262.9 243.3C1265.5 243.5 1267.6 241.7 1270.5 241.5C1273.5 241.3 1276.8 242.0 1280.6 242.0C1284.4 242.0 1280.6 241.6 1293.3 241.5C1362.7 241.4 1629.7 241.5 1697.0 241.5" fill="none" stroke="#8a8a1e" stroke-width="2.0" stroke-linejoin="round" />
<rect x="1300" y="240.4" width="397" height="2.2" fill="#b8963c" />
<rect x="54" y="281" width="1643" height="1" fill="#f7c3cf" />
<polyline points="1293.3,281.2 1298.3,281.2 1300.3,271.1 1302.1,263.5 1304.1,283.7 1305.9,291.3 1308.4,281.2 1312.2,271.1 1315.5,267.3 1318.5,276.1 1321.1,271.1 1324.8,278.6 1328.6,281.2 1331.2,274.8 1332.4,284.9 1336.2,281.2 1341.3,276.1 1345.1,266.0 1348.8,263.5 1351.4,260.4 1353.9,269.8 1356.4,286.2 1361.5,288.7 1366.5,284.9 1369.1,281.2 1372.8,281.2 1374.1,296.3 1376.6,288.7 1381.7,286.2 1385.5,298.8 1388.0,291.3 1394.3,292.5 1400.6,291.3 1403.2,296.3 1406.9,297.6 1419.6,298.8 1425.9,295.1 1428.4,286.2 1432.2,279.9 1437.3,277.4 1441.1,279.9 1447.4,278.6 1451.2,273.6 1453.7,269.8 1462.5,271.1 1472.6,270.5 1477.7,271.1 1478.9,276.1 1481.5,271.1 1484.0,271.1 1486.5,279.9 1491.6,282.4 1500.4,281.2 1504.2,276.1 1505.5,264.7 1508.0,281.2 1510.5,271.1 1514.3,262.2 1516.8,276.1 1519.4,287.5 1521.9,276.1 1525.7,283.7 1533.3,283.7 1540.8,281.2 1545.9,271.1 1549.7,267.3 1553.5,276.1 1557.3,271.1 1559.8,277.4 1568.6,279.9 1578.7,281.2 1591.4,277.4 1598.9,278.6 1604.0,281.2 1611.6,279.9 1615.4,271.1 1617.9,253.4 1620.4,242.0 1630.5,242.0 1633.1,253.4 1634.8,264.7 1638.1,250.8 1640.6,247.1 1644.4,248.3 1646.9,263.5 1649.5,271.1 1653.3,279.9 1659.6,281.2 1669.7,276.1 1673.5,271.1 1676.8,242.0 1678.5,263.5 1681.1,255.9 1682.8,281.2 1684.8,296.3 1687.4,288.7 1689.9,283.7 1694.9,281.2 1697.0,281.2" fill="none" stroke="#f7b6c2" stroke-width="1.6" stroke-linejoin="round" stroke-linecap="butt" />
<g transform="rotate(0 62.6 281.5)"><line x1="51.1" y1="281.5" x2="70.1" y2="281.5" stroke="#111" stroke-width="1.4"/><polygon points="74.8,281.5 71.9,278.3 71.9,284.7" fill="#111"/></g>
<line x1="69.6" y1="281.7" x2="61.6" y2="281.7" stroke="#7a2e7a" stroke-width="1.8"/>
<polygon points="55.6,281.7 61.6,277.4 61.6,285.9" fill="#da55e6" stroke="#5a205a" stroke-width="0.8" stroke-linejoin="round"/>
<g transform="rotate(0 102.6 281.5)"><line x1="91.1" y1="281.5" x2="110.1" y2="281.5" stroke="#111" stroke-width="1.4"/><polygon points="114.8,281.5 111.9,278.3 111.9,284.7" fill="#111"/></g>
<line x1="109.6" y1="281.7" x2="101.6" y2="281.7" stroke="#7a2e7a" stroke-width="1.8"/>
<polygon points="95.6,281.7 101.6,277.4 101.6,285.9" fill="#da55e6" stroke="#5a205a" stroke-width="0.8" stroke-linejoin="round"/>
<g transform="rotate(0 142.6 281.5)"><line x1="131.1" y1="281.5" x2="150.1" y2="281.5" stroke="#111" stroke-width="1.4"/><polygon points="154.8,281.5 151.9,278.3 151.9,284.7" fill="#111"/></g>
<line x1="149.6" y1="281.7" x2="141.6" y2="281.7" stroke="#7a2e7a" stroke-width="1.8"/>
<polygon points="135.6,281.7 141.6,277.4 141.6,285.9" fill="#da55e6" stroke="#5a205a" stroke-width="0.8" stroke-linejoin="round"/>
<g transform="rotate(0 182.6 281.5)"><line x1="171.1" y1="281.5" x2="190.1" y2="281.5" stroke="#111" stroke-width="1.4"/><polygon points="194.8,281.5 191.9,278.3 191.9,284.7" fill="#111"/></g>
<line x1="189.6" y1="281.5" x2="181.6" y2="281.7" stroke="#7a2e7a" stroke-width="1.8"/>
<polygon points="175.6,281.9 181.5,277.5 181.7,286.0" fill="#da55e6" stroke="#5a205a" stroke-width="0.8" stroke-linejoin="round"/>
<g transform="rotate(0 222.6 281.5)"><line x1="211.1" y1="281.5" x2="230.1" y2="281.5" stroke="#111" stroke-width="1.4"/><polygon points="234.8,281.5 231.9,278.3 231.9,284.7" fill="#111"/></g>
<line x1="223.8" y1="288.6" x2="222.4" y2="280.7" stroke="#7a2e7a" stroke-width="1.8"/>
<polygon points="221.4,274.8 226.6,280.0 218.2,281.5" fill="#da55e6" stroke="#5a205a" stroke-width="0.8" stroke-linejoin="round"/>
<g transform="rotate(0 262.6 281.5)"><line x1="251.1" y1="281.5" x2="270.1" y2="281.5" stroke="#111" stroke-width="1.4"/><polygon points="274.8,281.5 271.9,278.3 271.9,284.7" fill="#111"/></g>
<line x1="257.7" y1="286.6" x2="263.3" y2="281.0" stroke="#7a2e7a" stroke-width="1.8"/>
<polygon points="267.5,276.8 266.3,284.0 260.3,278.0" fill="#da55e6" stroke="#5a205a" stroke-width="0.8" stroke-linejoin="round"/>
<g transform="rotate(0 302.6 281.5)"><line x1="291.1" y1="281.5" x2="310.1" y2="281.5" stroke="#111" stroke-width="1.4"/><polygon points="314.8,281.5 311.9,278.3 311.9,284.7" fill="#111"/></g>
<line x1="295.8" y1="283.4" x2="303.6" y2="281.5" stroke="#7a2e7a" stroke-width="1.8"/>
<polygon points="309.4,280.0 304.6,285.6 302.5,277.3" fill="#da55e6" stroke="#5a205a" stroke-width="0.8" stroke-linejoin="round"/>
<g transform="rotate(0 342.6 281.5)"><line x1="331.1" y1="281.5" x2="350.1" y2="281.5" stroke="#111" stroke-width="1.4"/><polygon points="354.8,281.5 351.9,278.3 351.9,284.7" fill="#111"/></g>
<line x1="335.8" y1="283.4" x2="343.6" y2="281.5" stroke="#7a2e7a" stroke-width="1.8"/>
<polygon points="349.4,280.0 344.6,285.6 342.5,277.3" fill="#da55e6" stroke="#5a205a" stroke-width="0.8" stroke-linejoin="round"/>
<g transform="rotate(0 382.6 281.5)"><line x1="371.1" y1="281.5" x2="390.1" y2="281.5" stroke="#111" stroke-width="1.4"/><polygon points="394.8,281.5 391.9,278.3 391.9,284.7" fill="#111"/></g>
<line x1="375.8" y1="283.4" x2="383.6" y2="281.5" stroke="#7a2e7a" stroke-width="1.8"/>
<polygon points="389.4,280.0 384.6,285.6 382.5,277.3" fill="#da55e6" stroke="#5a205a" stroke-width="0.8" stroke-linejoin="round"/>
<g transform="rotate(0 422.6 281.5)"><line x1="411.1" y1="281.5" x2="430.1" y2="281.5" stroke="#111" stroke-width="1.4"/><polygon points="434.8,281.5 431.9,278.3 431.9,284.7" fill="#111"/></g>
<line x1="415.8" y1="283.4" x2="423.6" y2="281.5" stroke="#7a2e7a" stroke-width="1.8"/>
<polygon points="429.4,280.0 424.6,285.6 422.5,277.3" fill="#da55e6" stroke="#5a205a" stroke-width="0.8" stroke-linejoin="round"/>
<g transform="rotate(0 462.6 281.5)"><line x1="451.1" y1="281.5" x2="470.1" y2="281.5" stroke="#111" stroke-width="1.4"/><polygon points="474.8,281.5 471.9,278.3 471.9,284.7" fill="#111"/></g>
<line x1="455.8" y1="283.4" x2="463.6" y2="281.5" stroke="#7a2e7a" stroke-width="1.8"/>
<polygon points="469.4,280.0 464.6,285.6 462.5,277.3" fill="#da55e6" stroke="#5a205a" stroke-width="0.8" stroke-linejoin="round"/>
<g transform="rotate(0 502.6 281.5)"><line x1="491.1" y1="281.5" x2="510.1" y2="281.5" stroke="#111" stroke-width="1.4"/><polygon points="514.8,281.5 511.9,278.3 511.9,284.7" fill="#111"/></g>
<line x1="496.1" y1="279.2" x2="503.5" y2="282.1" stroke="#7a2e7a" stroke-width="1.8"/>
<polygon points="509.1,284.2 502.0,286.0 505.1,278.1" fill="#da55e6" stroke="#5a205a" stroke-width="0.8" stroke-linejoin="round"/>
<g transform="rotate(0 542.6 281.5)"><line x1="531.1" y1="281.5" x2="550.1" y2="281.5" stroke="#111" stroke-width="1.4"/><polygon points="554.8,281.5 551.9,278.3 551.9,284.7" fill="#111"/></g>
<line x1="536.1" y1="279.2" x2="543.5" y2="282.1" stroke="#7a2e7a" stroke-width="1.8"/>
<polygon points="549.1,284.2 542.0,286.0 545.1,278.1" fill="#da55e6" stroke="#5a205a" stroke-width="0.8" stroke-linejoin="round"/>
<g transform="rotate(0 582.6 281.5)"><line x1="571.1" y1="281.5" x2="590.1" y2="281.5" stroke="#111" stroke-width="1.4"/><polygon points="594.8,281.5 591.9,278.3 591.9,284.7" fill="#111"/></g>
<line x1="576.1" y1="279.2" x2="583.5" y2="282.1" stroke="#7a2e7a" stroke-width="1.8"/>
<polygon points="589.1,284.2 582.0,286.0 585.1,278.1" fill="#da55e6" stroke="#5a205a" stroke-width="0.8" stroke-linejoin="round"/>
<g transform="rotate(0 622.6 281.5)"><line x1="611.1" y1="281.5" x2="630.1" y2="281.5" stroke="#111" stroke-width="1.4"/><polygon points="634.8,281.5 631.9,278.3 631.9,284.7" fill="#111"/></g>
<line x1="616.1" y1="279.2" x2="623.5" y2="282.1" stroke="#7a2e7a" stroke-width="1.8"/>
<polygon points="629.1,284.2 622.0,286.0 625.1,278.1" fill="#da55e6" stroke="#5a205a" stroke-width="0.8" stroke-linejoin="round"/>
<g transform="rotate(0 662.6 281.5)"><line x1="651.1" y1="281.5" x2="670.1" y2="281.5" stroke="#111" stroke-width="1.4"/><polygon points="674.8,281.5 671.9,278.3 671.9,284.7" fill="#111"/></g>
<line x1="656.1" y1="279.2" x2="663.5" y2="282.1" stroke="#7a2e7a" stroke-width="1.8"/>
<polygon points="669.1,284.2 662.0,286.0 665.1,278.1" fill="#da55e6" stroke="#5a205a" stroke-width="0.8" stroke-linejoin="round"/>
<g transform="rotate(0 702.6 281.5)"><line x1="691.1" y1="281.5" x2="710.1" y2="281.5" stroke="#111" stroke-width="1.4"/><polygon points="714.8,281.5 711.9,278.3 711.9,284.7" fill="#111"/></g>
<line x1="696.1" y1="279.2" x2="703.5" y2="282.1" stroke="#7a2e7a" stroke-width="1.8"/>
<polygon points="709.1,284.2 702.0,286.0 705.1,278.1" fill="#da55e6" stroke="#5a205a" stroke-width="0.8" stroke-linejoin="round"/>
<g transform="rotate(0 742.6 281.5)"><line x1="731.1" y1="281.5" x2="750.1" y2="281.5" stroke="#111" stroke-width="1.4"/><polygon points="754.8,281.5 751.9,278.3 751.9,284.7" fill="#111"/></g>
<line x1="736.1" y1="279.2" x2="743.5" y2="282.1" stroke="#7a2e7a" stroke-width="1.8"/>
<polygon points="749.1,284.2 742.0,286.0 745.1,278.1" fill="#da55e6" stroke="#5a205a" stroke-width="0.8" stroke-linejoin="round"/>
<g transform="rotate(0 782.6 281.5)"><line x1="771.1" y1="281.5" x2="790.1" y2="281.5" stroke="#111" stroke-width="1.4"/><polygon points="794.8,281.5 791.9,278.3 791.9,284.7" fill="#111"/></g>
<line x1="776.1" y1="279.2" x2="783.5" y2="282.1" stroke="#7a2e7a" stroke-width="1.8"/>
<polygon points="789.1,284.2 782.0,286.0 785.1,278.1" fill="#da55e6" stroke="#5a205a" stroke-width="0.8" stroke-linejoin="round"/>
<g transform="rotate(0 822.6 281.5)"><line x1="811.1" y1="281.5" x2="830.1" y2="281.5" stroke="#111" stroke-width="1.4"/><polygon points="834.8,281.5 831.9,278.3 831.9,284.7" fill="#111"/></g>
<line x1="816.1" y1="279.2" x2="823.5" y2="282.1" stroke="#7a2e7a" stroke-width="1.8"/>
<polygon points="829.1,284.2 822.0,286.0 825.1,278.1" fill="#da55e6" stroke="#5a205a" stroke-width="0.8" stroke-linejoin="round"/>
<g transform="rotate(0 862.6 281.5)"><line x1="851.1" y1="281.5" x2="870.1" y2="281.5" stroke="#111" stroke-width="1.4"/><polygon points="874.8,281.5 871.9,278.3 871.9,284.7" fill="#111"/></g>
<line x1="856.1" y1="279.2" x2="863.5" y2="282.1" stroke="#7a2e7a" stroke-width="1.8"/>
<polygon points="869.1,284.2 862.0,286.0 865.1,278.1" fill="#da55e6" stroke="#5a205a" stroke-width="0.8" stroke-linejoin="round"/>
<g transform="rotate(0 902.6 281.5)"><line x1="891.1" y1="281.5" x2="910.1" y2="281.5" stroke="#111" stroke-width="1.4"/><polygon points="914.8,281.5 911.9,278.3 911.9,284.7" fill="#111"/></g>
<line x1="896.1" y1="279.2" x2="903.5" y2="282.1" stroke="#7a2e7a" stroke-width="1.8"/>
<polygon points="909.1,284.2 902.0,286.0 905.1,278.1" fill="#da55e6" stroke="#5a205a" stroke-width="0.8" stroke-linejoin="round"/>
<g transform="rotate(0 942.6 281.5)"><line x1="931.1" y1="281.5" x2="950.1" y2="281.5" stroke="#111" stroke-width="1.4"/><polygon points="954.8,281.5 951.9,278.3 951.9,284.7" fill="#111"/></g>
<line x1="936.1" y1="279.2" x2="943.5" y2="282.1" stroke="#7a2e7a" stroke-width="1.8"/>
<polygon points="949.1,284.2 942.0,286.0 945.1,278.1" fill="#da55e6" stroke="#5a205a" stroke-width="0.8" stroke-linejoin="round"/>
<g transform="rotate(0 982.6 281.5)"><line x1="971.1" y1="281.5" x2="990.1" y2="281.5" stroke="#111" stroke-width="1.4"/><polygon points="994.8,281.5 991.9,278.3 991.9,284.7" fill="#111"/></g>
<line x1="976.1" y1="279.2" x2="983.5" y2="282.1" stroke="#7a2e7a" stroke-width="1.8"/>
<polygon points="989.1,284.2 982.0,286.0 985.1,278.1" fill="#da55e6" stroke="#5a205a" stroke-width="0.8" stroke-linejoin="round"/>
<g transform="rotate(0 1022.6 281.5)"><line x1="1011.1" y1="281.5" x2="1030.1" y2="281.5" stroke="#111" stroke-width="1.4"/><polygon points="1034.8,281.5 1031.9,278.3 1031.9,284.7" fill="#111"/></g>
<line x1="1016.1" y1="279.2" x2="1023.5" y2="282.1" stroke="#7a2e7a" stroke-width="1.8"/>
<polygon points="1029.1,284.2 1022.0,286.0 1025.1,278.1" fill="#da55e6" stroke="#5a205a" stroke-width="0.8" stroke-linejoin="round"/>
<g transform="rotate(0 1062.6 281.5)"><line x1="1051.1" y1="281.5" x2="1070.1" y2="281.5" stroke="#111" stroke-width="1.4"/><polygon points="1074.8,281.5 1071.9,278.3 1071.9,284.7" fill="#111"/></g>
<line x1="1056.1" y1="279.2" x2="1063.5" y2="282.1" stroke="#7a2e7a" stroke-width="1.8"/>
<polygon points="1069.1,284.2 1062.0,286.0 1065.1,278.1" fill="#da55e6" stroke="#5a205a" stroke-width="0.8" stroke-linejoin="round"/>
<g transform="rotate(0 1102.6 281.5)"><line x1="1091.1" y1="281.5" x2="1110.1" y2="281.5" stroke="#111" stroke-width="1.4"/><polygon points="1114.8,281.5 1111.9,278.3 1111.9,284.7" fill="#111"/></g>
<line x1="1096.1" y1="279.2" x2="1103.5" y2="282.1" stroke="#7a2e7a" stroke-width="1.8"/>
<polygon points="1109.1,284.2 1102.0,286.0 1105.1,278.1" fill="#da55e6" stroke="#5a205a" stroke-width="0.8" stroke-linejoin="round"/>
<g transform="rotate(0 1142.6 281.5)"><line x1="1131.1" y1="281.5" x2="1150.1" y2="281.5" stroke="#111" stroke-width="1.4"/><polygon points="1154.8,281.5 1151.9,278.3 1151.9,284.7" fill="#111"/></g>
<line x1="1136.1" y1="279.2" x2="1143.5" y2="282.1" stroke="#7a2e7a" stroke-width="1.8"/>
<polygon points="1149.1,284.2 1142.0,286.0 1145.1,278.1" fill="#da55e6" stroke="#5a205a" stroke-width="0.8" stroke-linejoin="round"/>
<g transform="rotate(0 1182.6 281.5)"><line x1="1171.1" y1="281.5" x2="1190.1" y2="281.5" stroke="#111" stroke-width="1.4"/><polygon points="1194.8,281.5 1191.9,278.3 1191.9,284.7" fill="#111"/></g>
<line x1="1176.1" y1="279.2" x2="1183.5" y2="282.1" stroke="#7a2e7a" stroke-width="1.8"/>
<polygon points="1189.1,284.2 1182.0,286.0 1185.1,278.1" fill="#da55e6" stroke="#5a205a" stroke-width="0.8" stroke-linejoin="round"/>
<g transform="rotate(0 1222.6 281.5)"><line x1="1211.1" y1="281.5" x2="1230.1" y2="281.5" stroke="#111" stroke-width="1.4"/><polygon points="1234.8,281.5 1231.9,278.3 1231.9,284.7" fill="#111"/></g>
<line x1="1216.1" y1="279.2" x2="1223.5" y2="282.1" stroke="#7a2e7a" stroke-width="1.8"/>
<polygon points="1229.1,284.2 1222.0,286.0 1225.1,278.1" fill="#da55e6" stroke="#5a205a" stroke-width="0.8" stroke-linejoin="round"/>
<g transform="rotate(0 1262.6 281.5)"><line x1="1251.1" y1="281.5" x2="1270.1" y2="281.5" stroke="#111" stroke-width="1.4"/><polygon points="1274.8,281.5 1271.9,278.3 1271.9,284.7" fill="#111"/></g>
<line x1="1256.1" y1="279.2" x2="1263.5" y2="282.1" stroke="#7a2e7a" stroke-width="1.8"/>
<polygon points="1269.1,284.2 1262.0,286.0 1265.1,278.1" fill="#da55e6" stroke="#5a205a" stroke-width="0.8" stroke-linejoin="round"/>
<g transform="rotate(0 1302.6 281.5)"><line x1="1291.1" y1="281.5" x2="1310.1" y2="281.5" stroke="#111" stroke-width="1.4"/><polygon points="1314.8,281.5 1311.9,278.3 1311.9,284.7" fill="#111"/></g>
<line x1="1295.8" y1="279.9" x2="1303.6" y2="282.0" stroke="#7a2e7a" stroke-width="1.8"/>
<polygon points="1309.4,283.5 1302.5,286.1 1304.7,277.9" fill="#da55e6" stroke="#5a205a" stroke-width="0.8" stroke-linejoin="round"/>
<g transform="rotate(0 1342.6 281.5)"><line x1="1331.1" y1="281.5" x2="1350.1" y2="281.5" stroke="#111" stroke-width="1.4"/><polygon points="1354.8,281.5 1351.9,278.3 1351.9,284.7" fill="#111"/></g>
<line x1="1335.6" y1="281.9" x2="1343.6" y2="281.7" stroke="#7a2e7a" stroke-width="1.8"/>
<polygon points="1349.6,281.5 1343.7,285.9 1343.5,277.4" fill="#da55e6" stroke="#5a205a" stroke-width="0.8" stroke-linejoin="round"/>
<g transform="rotate(0 1382.6 281.5)"><line x1="1371.1" y1="281.5" x2="1390.1" y2="281.5" stroke="#111" stroke-width="1.4"/><polygon points="1394.8,281.5 1391.9,278.3 1391.9,284.7" fill="#111"/></g>
<line x1="1376.9" y1="285.7" x2="1383.4" y2="281.1" stroke="#7a2e7a" stroke-width="1.8"/>
<polygon points="1388.3,277.7 1385.9,284.6 1381.0,277.6" fill="#da55e6" stroke="#5a205a" stroke-width="0.8" stroke-linejoin="round"/>
<g transform="rotate(0 1422.6 281.5)"><line x1="1411.1" y1="281.5" x2="1430.1" y2="281.5" stroke="#111" stroke-width="1.4"/><polygon points="1434.8,281.5 1431.9,278.3 1431.9,284.7" fill="#111"/></g>
<line x1="1415.7" y1="280.5" x2="1423.6" y2="281.9" stroke="#7a2e7a" stroke-width="1.8"/>
<polygon points="1429.5,282.9 1422.8,286.1 1424.3,277.7" fill="#da55e6" stroke="#5a205a" stroke-width="0.8" stroke-linejoin="round"/>
<g transform="rotate(0 1462.6 281.5)"><line x1="1451.1" y1="281.5" x2="1470.1" y2="281.5" stroke="#111" stroke-width="1.4"/><polygon points="1474.8,281.5 1471.9,278.3 1471.9,284.7" fill="#111"/></g>
<line x1="1455.6" y1="281.7" x2="1463.6" y2="281.7" stroke="#7a2e7a" stroke-width="1.8"/>
<polygon points="1469.6,281.7 1463.6,285.9 1463.6,277.4" fill="#da55e6" stroke="#5a205a" stroke-width="0.8" stroke-linejoin="round"/>
<g transform="rotate(0 1502.6 281.5)"><line x1="1491.1" y1="281.5" x2="1510.1" y2="281.5" stroke="#111" stroke-width="1.4"/><polygon points="1514.8,281.5 1511.9,278.3 1511.9,284.7" fill="#111"/></g>
<line x1="1495.8" y1="283.5" x2="1503.6" y2="281.4" stroke="#7a2e7a" stroke-width="1.8"/>
<polygon points="1509.4,279.9 1504.7,285.5 1502.5,277.3" fill="#da55e6" stroke="#5a205a" stroke-width="0.8" stroke-linejoin="round"/>
<g transform="rotate(0 1542.6 281.5)"><line x1="1531.1" y1="281.5" x2="1550.1" y2="281.5" stroke="#111" stroke-width="1.4"/><polygon points="1554.8,281.5 1551.9,278.3 1551.9,284.7" fill="#111"/></g>
<line x1="1536.4" y1="285.0" x2="1543.5" y2="281.2" stroke="#7a2e7a" stroke-width="1.8"/>
<polygon points="1548.8,278.4 1545.5,285.0 1541.5,277.5" fill="#da55e6" stroke="#5a205a" stroke-width="0.8" stroke-linejoin="round"/>
<g transform="rotate(0 1582.6 281.5)"><line x1="1571.1" y1="281.5" x2="1590.1" y2="281.5" stroke="#111" stroke-width="1.4"/><polygon points="1594.8,281.5 1591.9,278.3 1591.9,284.7" fill="#111"/></g>
<line x1="1580.2" y1="288.3" x2="1582.9" y2="280.8" stroke="#7a2e7a" stroke-width="1.8"/>
<polygon points="1585.0,275.1 1586.9,282.2 1578.9,279.3" fill="#da55e6" stroke="#5a205a" stroke-width="0.8" stroke-linejoin="round"/>
<g transform="rotate(-8 1622.6 281.5)"><line x1="1611.1" y1="281.5" x2="1630.1" y2="281.5" stroke="#111" stroke-width="1.4"/><polygon points="1634.8,281.5 1631.9,278.3 1631.9,284.7" fill="#111"/></g>
<line x1="1628.7" y1="285.2" x2="1621.7" y2="281.2" stroke="#7a2e7a" stroke-width="1.8"/>
<polygon points="1616.5,278.2 1623.9,277.5 1619.6,284.9" fill="#da55e6" stroke="#5a205a" stroke-width="0.8" stroke-linejoin="round"/>
<g transform="rotate(-8 1662.6 281.5)"><line x1="1651.1" y1="281.5" x2="1670.1" y2="281.5" stroke="#111" stroke-width="1.4"/><polygon points="1674.8,281.5 1671.9,278.3 1671.9,284.7" fill="#111"/></g>
<line x1="1669.5" y1="280.7" x2="1661.6" y2="281.8" stroke="#7a2e7a" stroke-width="1.8"/>
<polygon points="1655.7,282.7 1661.0,277.6 1662.2,286.0" fill="#da55e6" stroke="#5a205a" stroke-width="0.8" stroke-linejoin="round"/>
<rect x="54" y="341" width="1643" height="1" fill="#c81ec8" />
<path d="M54.5 403.2C55.0 402.9 57.3 400.7 58.8 400.2C60.4 399.7 67.6 398.7 70.2 398.4C72.9 398.1 82.8 397.3 85.4 397.2C87.9 397.1 93.7 397.1 95.5 397.2C97.2 397.3 101.0 398.3 103.1 398.2C105.1 398.0 112.9 396.0 115.7 395.7C118.5 395.3 127.8 394.5 130.8 394.4C133.9 394.3 143.2 394.6 146.0 394.7C148.8 394.8 156.4 395.2 158.6 395.4C160.9 395.6 166.0 396.5 168.7 396.7C171.5 396.8 183.6 396.7 186.4 396.7C189.2 396.6 194.5 396.3 196.5 396.2C198.5 396.0 204.6 394.9 206.6 394.9C208.7 395.0 214.7 396.4 216.7 396.7C218.8 396.9 224.8 397.3 226.8 397.4C228.9 397.6 235.4 398.5 236.9 398.4C238.5 398.4 236.9 397.1 242.0 396.9C247.1 396.7 282.2 396.7 287.5 396.4C292.8 396.1 293.0 394.0 295.1 394.1C297.1 394.3 304.9 397.6 307.7 397.7C310.5 397.8 320.8 395.5 322.8 395.2C324.9 394.8 325.9 394.3 327.9 394.1C329.9 393.9 340.5 393.3 343.1 393.1C345.6 392.9 351.1 392.2 353.2 392.1C355.2 392.1 361.5 392.4 363.3 392.6C365.0 392.9 368.8 394.1 370.8 394.4C372.9 394.7 381.7 394.8 383.5 395.2C385.2 395.5 387.0 397.8 388.5 397.7C390.0 397.6 396.1 394.6 398.6 394.1C401.2 393.7 411.3 393.2 413.8 393.1C416.3 393.1 421.9 393.5 423.9 393.6C425.9 393.8 432.5 394.2 434.0 394.7C435.5 395.1 437.5 397.4 439.1 397.7C440.6 397.9 447.6 397.5 449.2 397.2C450.7 396.9 451.2 394.9 454.2 394.7C457.2 394.4 475.4 394.8 479.5 394.7C483.5 394.5 492.1 393.4 494.6 393.4C497.2 393.4 502.3 394.4 504.7 394.7C507.1 394.9 517.1 395.4 518.6 395.7C520.0 395.9 518.6 397.0 520.0 397.2C525.9 397.3 571.0 396.9 578.1 397.2C585.2 397.4 588.0 399.3 590.7 399.7C593.5 400.1 602.9 401.1 605.9 401.5C608.9 401.8 618.3 402.9 621.1 403.2C623.8 403.6 631.2 404.8 633.7 405.3C636.2 405.8 644.0 407.8 646.3 408.3C648.6 408.7 654.7 409.9 656.4 409.8C658.2 409.8 662.5 408.2 664.0 407.8C665.5 407.3 669.8 405.6 671.6 405.3C673.3 405.0 679.2 404.9 681.7 404.8C684.2 404.6 689.0 404.1 696.8 404.0C704.7 403.9 752.4 404.1 760.0 404.0C767.6 403.9 770.1 402.8 772.6 402.7C775.2 402.7 783.0 403.0 785.3 403.2C787.5 403.5 791.6 405.1 795.4 405.3C799.2 405.5 819.1 404.9 823.2 405.3C827.2 405.6 833.3 408.4 835.8 409.1C838.3 409.7 846.1 411.1 848.4 411.6C850.7 412.0 854.0 413.4 858.5 413.6C863.1 413.8 888.3 413.5 893.9 413.6C899.5 413.7 910.1 414.1 914.1 414.1C918.1 414.1 929.3 413.3 934.3 413.3C939.4 413.3 960.3 413.9 964.6 414.1C968.9 414.3 975.0 415.4 977.3 415.4C979.5 415.4 986.1 414.2 987.4 414.1C988.6 414.0 987.4 414.2 990.0 414.1C992.8 414.0 1010.2 413.0 1015.3 412.8C1020.3 412.7 1035.5 412.9 1040.5 412.8C1045.6 412.8 1061.2 412.6 1065.8 412.3C1070.3 412.0 1082.5 410.2 1086.0 409.8C1089.5 409.4 1098.1 408.7 1101.2 408.5C1104.2 408.4 1113.0 408.4 1116.3 408.5C1119.6 408.7 1130.5 409.4 1134.0 409.8C1137.5 410.2 1148.4 411.8 1151.7 412.3C1155.0 412.8 1163.8 414.6 1166.8 414.9C1169.9 415.2 1179.0 415.2 1182.0 415.4C1185.0 415.5 1193.6 415.8 1197.2 416.1C1200.7 416.4 1213.3 418.0 1217.4 418.4C1221.4 418.8 1233.5 420.2 1237.6 420.4C1241.6 420.7 1253.7 420.7 1257.8 420.9C1261.8 421.1 1274.5 421.9 1278.0 422.2C1281.5 422.4 1290.6 423.3 1293.2 423.5C1295.7 423.6 1301.5 423.4 1303.3 423.7C1305.0 424.0 1309.3 426.1 1310.8 426.7C1312.4 427.4 1316.5 429.4 1318.4 430.5C1320.3 431.7 1328.0 437.5 1329.8 438.1C1331.6 438.7 1334.5 436.2 1336.1 436.1C1337.7 436.0 1344.7 436.6 1346.2 436.8C1347.7 437.1 1350.3 438.6 1351.3 438.6C1352.3 438.6 1354.5 437.1 1356.3 436.8C1358.1 436.6 1367.4 436.1 1368.9 436.3C1370.5 436.6 1371.5 438.9 1372.0 439.4C1372.5 439.8 1373.3 440.6 1374.0 440.6C1374.7 440.7 1378.5 439.9 1379.1 439.9C1379.7 439.9 1379.1 440.9 1380.0 440.6C1380.9 440.3 1385.6 437.5 1387.6 436.8C1389.6 436.2 1396.9 434.2 1400.2 433.8C1403.5 433.4 1415.9 432.9 1420.4 432.5C1425.0 432.2 1440.6 430.9 1445.7 430.5C1450.7 430.1 1465.9 429.1 1470.9 428.8C1476.0 428.4 1490.7 427.5 1496.2 427.2C1501.8 427.0 1520.5 426.2 1526.5 426.0C1532.6 425.8 1552.8 425.5 1556.8 425.5C1560.9 425.5 1564.4 425.7 1566.9 426.0C1569.5 426.2 1578.6 427.7 1582.1 428.0C1585.6 428.3 1599.0 429.1 1602.3 429.3C1605.6 429.5 1612.9 429.6 1614.9 430.0C1617.0 430.4 1620.8 432.5 1622.5 433.1C1624.3 433.6 1630.4 435.3 1632.6 435.6C1634.9 435.8 1642.7 435.7 1645.3 435.6C1647.8 435.5 1655.4 434.6 1657.9 434.3C1660.4 434.1 1668.9 432.9 1670.5 433.1C1672.2 433.2 1673.6 434.9 1674.3 435.6C1675.0 436.3 1675.3 439.7 1677.6 440.1C1679.9 440.6 1695.1 440.1 1697.1 440.1" fill="none" stroke="#5aa5ee" stroke-width="1.8" stroke-linejoin="round" />
<path d="M54.5 401.5C55.0 401.1 57.3 398.6 58.8 398.2C60.4 397.7 67.6 397.2 70.2 396.9C72.9 396.7 82.8 395.8 85.4 395.7C87.9 395.5 93.7 395.6 95.5 395.7C97.2 395.7 101.0 396.6 103.1 396.4C105.1 396.2 112.9 394.3 115.7 393.9C118.5 393.5 127.8 392.7 130.8 392.6C133.9 392.6 143.2 393.0 146.0 393.1C148.8 393.3 156.4 393.7 158.6 393.9C160.9 394.1 166.0 395.0 168.7 395.2C171.5 395.3 183.6 395.2 186.4 395.2C189.2 395.1 194.5 394.8 196.5 394.7C198.5 394.5 204.6 393.3 206.6 393.4C208.7 393.4 214.7 394.9 216.7 395.2C218.8 395.4 224.8 395.8 226.8 395.9C228.9 396.0 235.4 396.5 236.9 396.4C238.5 396.3 236.9 395.3 242.0 395.2C247.1 395.0 282.2 395.0 287.5 394.7C292.8 394.3 293.0 392.3 295.1 392.1C297.1 392.0 304.9 393.0 307.7 393.1C310.5 393.2 320.8 393.2 322.8 393.1C324.9 393.0 325.9 392.3 327.9 392.1C329.9 391.9 340.5 391.6 343.1 391.4C345.6 391.2 351.1 390.2 353.2 390.1C355.2 390.0 361.5 390.4 363.3 390.6C365.0 390.9 368.8 392.4 370.8 392.6C372.9 392.9 381.2 393.3 383.5 393.4C385.7 393.5 392.1 394.0 393.6 393.9C395.1 393.8 396.6 392.4 398.6 392.1C400.7 391.9 411.3 391.4 413.8 391.4C416.3 391.3 421.9 391.7 423.9 391.9C425.9 392.0 431.0 392.6 434.0 392.6C437.0 392.7 449.7 392.6 454.2 392.6C458.8 392.6 475.4 392.8 479.5 392.6C483.5 392.5 492.1 391.4 494.6 391.4C497.2 391.4 502.3 392.5 504.7 392.6C507.1 392.8 517.1 393.0 518.6 393.1C520.0 393.3 518.6 393.8 520.0 393.9C521.7 394.0 529.3 393.9 535.2 393.9C541.0 393.9 572.5 393.6 578.1 393.9C583.7 394.1 588.0 396.0 590.7 396.4C593.5 396.9 602.9 397.9 605.9 398.2C608.9 398.5 618.3 399.1 621.1 399.5C623.8 399.8 631.2 401.0 633.7 401.5C636.2 402.0 644.3 404.1 646.3 404.5C648.3 405.0 652.4 405.9 653.9 406.0C655.4 406.2 660.0 406.3 661.5 406.0C663.0 405.7 667.5 403.2 669.1 402.7C670.6 402.2 674.9 401.2 676.6 401.0C678.4 400.8 684.2 400.7 686.7 400.7C689.3 400.7 694.6 400.7 701.9 400.7C709.2 400.7 752.9 400.8 760.0 400.7C767.1 400.6 770.4 399.8 772.6 399.7C774.9 399.6 780.7 399.5 782.7 399.7C784.8 400.0 790.1 402.0 792.8 402.2C795.6 402.5 807.2 402.2 810.5 402.2C813.8 402.3 822.9 402.4 825.7 402.7C828.5 403.1 835.8 405.4 838.3 406.0C840.8 406.6 848.7 408.1 850.9 408.5C853.2 409.0 856.8 410.1 861.1 410.3C865.3 410.5 888.6 410.2 893.9 410.3C899.2 410.4 910.1 411.1 914.1 411.1C918.1 411.1 930.8 410.4 934.3 410.3C937.9 410.2 946.4 410.2 949.5 410.3C952.5 410.4 961.9 411.4 964.6 411.6C967.4 411.8 975.0 412.2 977.3 412.1C979.5 412.0 986.1 410.9 987.4 410.8C988.6 410.7 987.4 410.9 990.0 410.8C992.8 410.7 1010.2 409.9 1015.3 409.8C1020.3 409.7 1035.5 409.9 1040.5 409.8C1045.6 409.7 1061.2 409.4 1065.8 409.1C1070.3 408.7 1082.5 406.9 1086.0 406.5C1089.5 406.1 1098.1 405.3 1101.2 405.3C1104.2 405.2 1113.0 405.6 1116.3 405.8C1119.6 405.9 1130.5 406.2 1134.0 406.5C1137.5 406.9 1148.4 408.7 1151.7 409.1C1155.0 409.4 1163.8 410.1 1166.8 410.3C1169.9 410.5 1179.0 410.6 1182.0 410.8C1185.0 411.0 1193.6 412.0 1197.2 412.3C1200.7 412.7 1213.3 413.7 1217.4 414.1C1221.4 414.5 1233.5 415.9 1237.6 416.1C1241.6 416.4 1253.7 416.5 1257.8 416.6C1261.8 416.8 1274.5 417.6 1278.0 417.9C1281.5 418.1 1290.6 419.0 1293.2 419.2C1295.7 419.3 1301.5 418.9 1303.3 419.2C1305.0 419.4 1309.3 421.1 1310.8 421.7C1312.4 422.3 1316.5 424.4 1318.4 425.5C1320.3 426.5 1328.0 431.7 1329.8 432.3C1331.6 432.9 1334.5 431.4 1336.1 431.3C1337.7 431.2 1344.7 431.1 1346.2 431.3C1347.7 431.5 1350.3 433.1 1351.3 433.1C1352.3 433.1 1354.5 431.5 1356.3 431.3C1358.1 431.1 1367.4 430.7 1368.9 431.3C1370.5 431.8 1371.0 436.0 1371.5 436.8C1371.9 437.7 1372.7 440.2 1373.5 440.1C1374.3 440.1 1378.4 436.7 1379.1 436.1C1379.7 435.5 1379.1 434.9 1380.0 434.3C1380.9 433.8 1385.6 431.1 1387.6 430.5C1389.6 429.9 1396.9 428.8 1400.2 428.5C1403.5 428.2 1415.9 427.5 1420.4 427.2C1425.0 426.9 1440.6 425.8 1445.7 425.5C1450.7 425.2 1465.9 424.5 1470.9 424.2C1476.0 424.0 1490.7 423.2 1496.2 422.9C1501.8 422.7 1520.5 421.8 1526.5 421.7C1532.6 421.6 1552.8 421.7 1556.8 421.7C1560.9 421.7 1564.4 421.5 1566.9 421.7C1569.5 421.9 1578.6 423.1 1582.1 423.5C1585.6 423.8 1599.0 424.5 1602.3 424.7C1605.6 424.9 1612.9 425.1 1614.9 425.5C1617.0 425.8 1620.8 427.5 1622.5 428.0C1624.3 428.5 1630.4 430.2 1632.6 430.5C1634.9 430.9 1642.7 431.4 1645.3 431.3C1647.8 431.2 1655.4 430.0 1657.9 429.8C1660.4 429.6 1668.9 429.1 1670.5 429.3C1672.2 429.4 1673.6 430.3 1674.3 431.3C1675.0 432.3 1675.3 438.6 1677.6 439.4C1679.9 440.2 1695.1 439.4 1697.1 439.4" fill="none" stroke="#f0b050" stroke-width="1.8" stroke-linejoin="round" />
<line x1="69.3" y1="409.6" x2="61.9" y2="409.6" stroke="#1f5a32" stroke-width="1.8"/>
<polygon points="55.9,409.6 61.9,405.4 61.9,413.9" fill="#2f9e4f" stroke="#1f5a32" stroke-width="0.8" stroke-linejoin="round"/>
<line x1="109.3" y1="409.6" x2="101.8" y2="409.6" stroke="#1f5a32" stroke-width="1.8"/>
<polygon points="95.8,409.6 101.8,405.4 101.8,413.9" fill="#2f9e4f" stroke="#1f5a32" stroke-width="0.8" stroke-linejoin="round"/>
<line x1="149.3" y1="409.6" x2="141.8" y2="409.6" stroke="#1f5a32" stroke-width="1.8"/>
<polygon points="135.8,409.6 141.8,405.4 141.8,413.9" fill="#2f9e4f" stroke="#1f5a32" stroke-width="0.8" stroke-linejoin="round"/>
<line x1="189.3" y1="408.7" x2="181.9" y2="409.7" stroke="#1f5a32" stroke-width="1.8"/>
<polygon points="175.9,410.5 181.3,405.5 182.4,413.9" fill="#2f9e4f" stroke="#1f5a32" stroke-width="0.8" stroke-linejoin="round"/>
<line x1="224.3" y1="403.1" x2="222.4" y2="410.3" stroke="#1f5a32" stroke-width="1.8"/>
<polygon points="220.9,416.1 218.3,409.2 226.5,411.4" fill="#2f9e4f" stroke="#1f5a32" stroke-width="0.8" stroke-linejoin="round"/>
<line x1="258.3" y1="404.4" x2="263.1" y2="410.2" stroke="#1f5a32" stroke-width="1.8"/>
<polygon points="266.9,414.8 259.8,412.9 266.3,407.4" fill="#2f9e4f" stroke="#1f5a32" stroke-width="0.8" stroke-linejoin="round"/>
<line x1="296.3" y1="407.3" x2="303.3" y2="409.9" stroke="#1f5a32" stroke-width="1.8"/>
<polygon points="308.9,411.9 301.9,413.9 304.8,405.9" fill="#2f9e4f" stroke="#1f5a32" stroke-width="0.8" stroke-linejoin="round"/>
<line x1="336.3" y1="407.3" x2="343.3" y2="409.9" stroke="#1f5a32" stroke-width="1.8"/>
<polygon points="348.9,411.9 341.9,413.9 344.8,405.9" fill="#2f9e4f" stroke="#1f5a32" stroke-width="0.8" stroke-linejoin="round"/>
<line x1="376.3" y1="407.3" x2="383.3" y2="409.9" stroke="#1f5a32" stroke-width="1.8"/>
<polygon points="388.9,411.9 381.9,413.9 384.8,405.9" fill="#2f9e4f" stroke="#1f5a32" stroke-width="0.8" stroke-linejoin="round"/>
<line x1="416.3" y1="407.3" x2="423.3" y2="409.9" stroke="#1f5a32" stroke-width="1.8"/>
<polygon points="428.9,411.9 421.9,413.9 424.8,405.9" fill="#2f9e4f" stroke="#1f5a32" stroke-width="0.8" stroke-linejoin="round"/>
<line x1="456.3" y1="407.3" x2="463.3" y2="409.9" stroke="#1f5a32" stroke-width="1.8"/>
<polygon points="468.9,411.9 461.9,413.9 464.8,405.9" fill="#2f9e4f" stroke="#1f5a32" stroke-width="0.8" stroke-linejoin="round"/>
<line x1="496.6" y1="412.8" x2="503.3" y2="409.2" stroke="#1f5a32" stroke-width="1.8"/>
<polygon points="508.6,406.4 505.3,413.0 501.3,405.5" fill="#2f9e4f" stroke="#1f5a32" stroke-width="0.8" stroke-linejoin="round"/>
<line x1="536.6" y1="412.8" x2="543.3" y2="409.2" stroke="#1f5a32" stroke-width="1.8"/>
<polygon points="548.6,406.4 545.3,413.0 541.3,405.5" fill="#2f9e4f" stroke="#1f5a32" stroke-width="0.8" stroke-linejoin="round"/>
<line x1="576.6" y1="412.8" x2="583.3" y2="409.2" stroke="#1f5a32" stroke-width="1.8"/>
<polygon points="588.6,406.4 585.3,413.0 581.3,405.5" fill="#2f9e4f" stroke="#1f5a32" stroke-width="0.8" stroke-linejoin="round"/>
<line x1="616.6" y1="412.8" x2="623.3" y2="409.2" stroke="#1f5a32" stroke-width="1.8"/>
<polygon points="628.6,406.4 625.3,413.0 621.3,405.5" fill="#2f9e4f" stroke="#1f5a32" stroke-width="0.8" stroke-linejoin="round"/>
<line x1="656.6" y1="412.8" x2="663.3" y2="409.2" stroke="#1f5a32" stroke-width="1.8"/>
<polygon points="668.6,406.4 665.3,413.0 661.3,405.5" fill="#2f9e4f" stroke="#1f5a32" stroke-width="0.8" stroke-linejoin="round"/>
<line x1="696.6" y1="412.8" x2="703.3" y2="409.2" stroke="#1f5a32" stroke-width="1.8"/>
<polygon points="708.6,406.4 705.3,413.0 701.3,405.5" fill="#2f9e4f" stroke="#1f5a32" stroke-width="0.8" stroke-linejoin="round"/>
<line x1="736.6" y1="412.8" x2="743.3" y2="409.2" stroke="#1f5a32" stroke-width="1.8"/>
<polygon points="748.6,406.4 745.3,413.0 741.3,405.5" fill="#2f9e4f" stroke="#1f5a32" stroke-width="0.8" stroke-linejoin="round"/>
<line x1="776.6" y1="412.8" x2="783.3" y2="409.2" stroke="#1f5a32" stroke-width="1.8"/>
<polygon points="788.6,406.4 785.3,413.0 781.3,405.5" fill="#2f9e4f" stroke="#1f5a32" stroke-width="0.8" stroke-linejoin="round"/>
<line x1="816.6" y1="412.8" x2="823.3" y2="409.2" stroke="#1f5a32" stroke-width="1.8"/>
<polygon points="828.6,406.4 825.3,413.0 821.3,405.5" fill="#2f9e4f" stroke="#1f5a32" stroke-width="0.8" stroke-linejoin="round"/>
<line x1="856.6" y1="412.8" x2="863.3" y2="409.2" stroke="#1f5a32" stroke-width="1.8"/>
<polygon points="868.6,406.4 865.3,413.0 861.3,405.5" fill="#2f9e4f" stroke="#1f5a32" stroke-width="0.8" stroke-linejoin="round"/>
<line x1="896.6" y1="412.8" x2="903.3" y2="409.2" stroke="#1f5a32" stroke-width="1.8"/>
<polygon points="908.6,406.4 905.3,413.0 901.3,405.5" fill="#2f9e4f" stroke="#1f5a32" stroke-width="0.8" stroke-linejoin="round"/>
<line x1="936.6" y1="412.8" x2="943.3" y2="409.2" stroke="#1f5a32" stroke-width="1.8"/>
<polygon points="948.6,406.4 945.3,413.0 941.3,405.5" fill="#2f9e4f" stroke="#1f5a32" stroke-width="0.8" stroke-linejoin="round"/>
<line x1="976.6" y1="412.8" x2="983.3" y2="409.2" stroke="#1f5a32" stroke-width="1.8"/>
<polygon points="988.6,406.4 985.3,413.0 981.3,405.5" fill="#2f9e4f" stroke="#1f5a32" stroke-width="0.8" stroke-linejoin="round"/>
<line x1="1016.6" y1="412.8" x2="1023.3" y2="409.2" stroke="#1f5a32" stroke-width="1.8"/>
<polygon points="1028.6,406.4 1025.3,413.0 1021.3,405.5" fill="#2f9e4f" stroke="#1f5a32" stroke-width="0.8" stroke-linejoin="round"/>
<line x1="1056.6" y1="412.8" x2="1063.3" y2="409.2" stroke="#1f5a32" stroke-width="1.8"/>
<polygon points="1068.6,406.4 1065.3,413.0 1061.3,405.5" fill="#2f9e4f" stroke="#1f5a32" stroke-width="0.8" stroke-linejoin="round"/>
<line x1="1096.6" y1="412.8" x2="1103.3" y2="409.2" stroke="#1f5a32" stroke-width="1.8"/>
<polygon points="1108.6,406.4 1105.3,413.0 1101.3,405.5" fill="#2f9e4f" stroke="#1f5a32" stroke-width="0.8" stroke-linejoin="round"/>
<line x1="1136.6" y1="412.8" x2="1143.3" y2="409.2" stroke="#1f5a32" stroke-width="1.8"/>
<polygon points="1148.6,406.4 1145.3,413.0 1141.3,405.5" fill="#2f9e4f" stroke="#1f5a32" stroke-width="0.8" stroke-linejoin="round"/>
<line x1="1176.6" y1="412.8" x2="1183.3" y2="409.2" stroke="#1f5a32" stroke-width="1.8"/>
<polygon points="1188.6,406.4 1185.3,413.0 1181.3,405.5" fill="#2f9e4f" stroke="#1f5a32" stroke-width="0.8" stroke-linejoin="round"/>
<line x1="1216.6" y1="412.8" x2="1223.3" y2="409.2" stroke="#1f5a32" stroke-width="1.8"/>
<polygon points="1228.6,406.4 1225.3,413.0 1221.3,405.5" fill="#2f9e4f" stroke="#1f5a32" stroke-width="0.8" stroke-linejoin="round"/>
<line x1="1256.6" y1="412.8" x2="1263.3" y2="409.2" stroke="#1f5a32" stroke-width="1.8"/>
<polygon points="1268.6,406.4 1265.3,413.0 1261.3,405.5" fill="#2f9e4f" stroke="#1f5a32" stroke-width="0.8" stroke-linejoin="round"/>
<line x1="1296.6" y1="412.8" x2="1303.3" y2="409.2" stroke="#1f5a32" stroke-width="1.8"/>
<polygon points="1308.6,406.4 1305.3,413.0 1301.3,405.5" fill="#2f9e4f" stroke="#1f5a32" stroke-width="0.8" stroke-linejoin="round"/>
<line x1="1336.2" y1="407.5" x2="1343.3" y2="409.8" stroke="#1f5a32" stroke-width="1.8"/>
<polygon points="1349.0,411.7 1342.0,413.9 1344.6,405.8" fill="#2f9e4f" stroke="#1f5a32" stroke-width="0.8" stroke-linejoin="round"/>
<line x1="1377.8" y1="404.8" x2="1383.1" y2="410.1" stroke="#1f5a32" stroke-width="1.8"/>
<polygon points="1387.4,414.4 1380.1,413.1 1386.1,407.1" fill="#2f9e4f" stroke="#1f5a32" stroke-width="0.8" stroke-linejoin="round"/>
<line x1="1416.6" y1="412.8" x2="1423.3" y2="409.2" stroke="#1f5a32" stroke-width="1.8"/>
<polygon points="1428.6,406.4 1425.3,413.0 1421.3,405.5" fill="#2f9e4f" stroke="#1f5a32" stroke-width="0.8" stroke-linejoin="round"/>
<line x1="1455.8" y1="409.6" x2="1463.3" y2="409.6" stroke="#1f5a32" stroke-width="1.8"/>
<polygon points="1469.3,409.6 1463.3,413.9 1463.3,405.4" fill="#2f9e4f" stroke="#1f5a32" stroke-width="0.8" stroke-linejoin="round"/>
<line x1="1497.3" y1="405.4" x2="1503.2" y2="410.1" stroke="#1f5a32" stroke-width="1.8"/>
<polygon points="1507.9,413.8 1500.6,413.4 1505.8,406.7" fill="#2f9e4f" stroke="#1f5a32" stroke-width="0.8" stroke-linejoin="round"/>
<line x1="1537.8" y1="404.8" x2="1543.1" y2="410.1" stroke="#1f5a32" stroke-width="1.8"/>
<polygon points="1547.4,414.4 1540.1,413.1 1546.1,407.1" fill="#2f9e4f" stroke="#1f5a32" stroke-width="0.8" stroke-linejoin="round"/>
<line x1="1581.2" y1="403.0" x2="1582.8" y2="410.3" stroke="#1f5a32" stroke-width="1.8"/>
<polygon points="1584.0,416.2 1578.6,411.2 1586.9,409.4" fill="#2f9e4f" stroke="#1f5a32" stroke-width="0.8" stroke-linejoin="round"/>
<line x1="1627.4" y1="404.8" x2="1622.1" y2="410.1" stroke="#1f5a32" stroke-width="1.8"/>
<polygon points="1617.8,414.4 1619.1,407.1 1625.1,413.1" fill="#2f9e4f" stroke="#1f5a32" stroke-width="0.8" stroke-linejoin="round"/>
<line x1="1668.9" y1="411.9" x2="1661.9" y2="409.3" stroke="#1f5a32" stroke-width="1.8"/>
<polygon points="1656.3,407.3 1663.3,405.3 1660.4,413.3" fill="#2f9e4f" stroke="#1f5a32" stroke-width="0.8" stroke-linejoin="round"/>
<path d="M54.0 438.6C54.7 438.6 56.7 438.7 58.0 438.8C59.3 439.0 60.7 439.7 62.0 439.6C63.3 439.6 64.7 438.8 66.0 438.6C67.3 438.5 68.7 438.7 70.0 438.7C71.3 438.8 72.7 439.0 74.0 438.9C75.3 438.8 76.7 438.0 78.0 438.0C79.3 438.0 80.7 438.6 82.0 438.7C83.3 438.9 84.7 438.9 86.0 439.0C87.3 439.1 88.7 439.5 90.0 439.3C91.3 439.1 92.7 438.0 94.0 437.8C95.3 437.6 96.7 438.3 98.0 438.3C99.3 438.3 100.7 437.6 102.0 437.8C103.3 438.0 104.7 439.2 106.0 439.4C107.3 439.6 108.7 439.4 110.0 439.1C111.3 438.8 112.7 437.6 114.0 437.7C115.3 437.8 116.7 439.4 118.0 439.8C119.3 440.1 120.7 439.8 122.0 439.7C123.3 439.6 124.7 439.2 126.0 439.0C127.3 438.9 128.7 439.1 130.0 439.0C131.3 438.8 132.7 438.2 134.0 437.9C135.3 437.7 136.7 437.5 138.0 437.6C139.3 437.8 140.7 438.7 142.0 438.8C143.3 438.8 144.7 437.9 146.0 437.7C147.3 437.6 148.7 438.0 150.0 438.0C151.3 438.1 152.7 438.2 154.0 438.1C155.3 438.1 156.7 437.6 158.0 437.7C159.3 437.7 160.7 438.5 162.0 438.6C163.3 438.8 164.7 438.4 166.0 438.6C167.3 438.7 168.7 439.4 170.0 439.5C171.3 439.5 172.7 438.8 174.0 438.7C175.3 438.7 176.7 439.0 178.0 439.0C179.3 439.0 180.7 438.7 182.0 438.7C183.3 438.7 184.7 439.1 186.0 439.1C187.3 439.0 188.7 438.7 190.0 438.6C191.3 438.5 192.7 438.0 194.0 438.2C195.3 438.4 196.7 439.5 198.0 439.8C199.3 440.1 200.7 439.8 202.0 439.8C203.3 439.7 204.7 439.6 206.0 439.4C207.3 439.3 208.7 439.3 210.0 439.2C211.3 439.0 212.7 438.5 214.0 438.3C215.3 438.1 216.7 438.1 218.0 438.1C219.3 438.1 220.7 438.3 222.0 438.2C223.3 438.2 224.7 437.6 226.0 437.8C227.3 437.9 228.7 439.2 230.0 439.3C231.3 439.4 232.7 438.5 234.0 438.5C235.3 438.5 236.7 439.5 238.0 439.5C239.3 439.5 240.7 438.4 242.0 438.5C243.3 438.5 244.7 439.5 246.0 439.7C247.3 439.9 248.7 439.8 250.0 439.5C251.3 439.1 252.7 437.8 254.0 437.6C255.3 437.4 256.7 437.7 258.0 438.1C259.3 438.4 260.7 439.5 262.0 439.6C263.3 439.7 264.7 438.6 266.0 438.6C267.3 438.7 268.7 439.8 270.0 439.8C271.3 439.7 272.7 438.8 274.0 438.5C275.3 438.1 276.7 437.7 278.0 437.8C279.3 437.8 280.7 438.7 282.0 439.0C283.3 439.2 284.7 439.4 286.0 439.3C287.3 439.2 288.7 438.4 290.0 438.2C291.3 437.9 292.7 437.8 294.0 437.8C295.3 437.8 296.7 438.0 298.0 438.3C299.3 438.7 300.7 439.6 302.0 439.7C303.3 439.9 304.7 439.6 306.0 439.3C307.3 439.0 308.7 438.0 310.0 437.9C311.3 437.7 312.7 438.1 314.0 438.1C315.3 438.1 316.7 437.9 318.0 437.8C319.3 437.8 320.7 437.5 322.0 437.7C323.3 438.0 324.7 439.3 326.0 439.4C327.3 439.4 328.7 438.1 330.0 438.0C331.3 437.9 332.7 438.7 334.0 438.8C335.3 438.9 336.7 438.7 338.0 438.6C339.3 438.4 340.7 437.9 342.0 438.0C343.3 438.1 344.7 439.2 346.0 439.2C347.3 439.2 348.7 437.9 350.0 437.9C351.3 437.9 352.7 439.0 354.0 439.0C355.3 439.0 356.7 437.9 358.0 437.9C359.3 437.8 360.7 438.5 362.0 438.5C363.3 438.6 364.7 438.1 366.0 438.1C367.3 438.0 368.7 437.9 370.0 438.2C371.3 438.5 372.7 439.5 374.0 439.7C375.3 439.9 376.7 439.6 378.0 439.4C379.3 439.1 380.7 438.2 382.0 438.3C383.3 438.3 384.7 439.6 386.0 439.5C387.3 439.5 388.7 438.2 390.0 438.1C391.3 437.9 392.7 438.2 394.0 438.5C395.3 438.7 396.7 439.4 398.0 439.5C399.3 439.6 400.7 439.3 402.0 439.0C403.3 438.7 404.7 437.7 406.0 437.8C407.3 437.9 408.7 439.7 410.0 439.8C411.3 439.8 412.7 438.3 414.0 438.1C415.3 437.8 416.7 438.0 418.0 438.2C419.3 438.4 420.7 439.3 422.0 439.3C423.3 439.3 424.7 438.5 426.0 438.3C427.3 438.1 428.7 438.3 430.0 438.3C431.3 438.2 432.7 437.8 434.0 437.8C435.3 437.7 436.7 437.6 438.0 437.8C439.3 438.0 440.7 438.8 442.0 438.9C443.3 438.9 444.7 438.1 446.0 438.1C447.3 438.1 448.7 438.9 450.0 438.9C451.3 439.0 452.7 438.5 454.0 438.4C455.3 438.4 456.7 438.4 458.0 438.6C459.3 438.8 460.7 439.7 462.0 439.7C463.3 439.7 464.7 438.8 466.0 438.7C467.3 438.5 468.7 438.7 470.0 438.9C471.3 439.0 472.7 439.6 474.0 439.5C475.3 439.4 476.7 438.3 478.0 438.0C479.3 437.7 480.7 437.7 482.0 437.9C483.3 438.2 484.7 439.4 486.0 439.6C487.3 439.8 488.7 439.6 490.0 439.4C491.3 439.2 492.7 438.4 494.0 438.1C495.3 437.9 496.7 437.8 498.0 438.0C499.3 438.2 500.7 439.0 502.0 439.2C503.3 439.5 504.7 439.9 506.0 439.7C507.3 439.5 508.7 438.0 510.0 438.0C511.3 438.0 512.7 439.4 514.0 439.7C515.3 439.9 516.7 439.7 518.0 439.5C519.3 439.4 520.7 439.1 522.0 438.9C523.3 438.8 524.7 438.7 526.0 438.5C527.3 438.3 528.7 438.0 530.0 437.8C531.3 437.7 532.7 437.4 534.0 437.7C535.3 438.0 536.7 439.6 538.0 439.7C539.3 439.8 540.7 438.2 542.0 438.1C543.3 438.0 544.7 439.1 546.0 439.2C547.3 439.2 548.7 438.1 550.0 438.2C551.3 438.2 552.7 439.3 554.0 439.4C555.3 439.5 556.7 439.1 558.0 438.9C559.3 438.7 560.7 438.4 562.0 438.2C563.3 438.1 564.7 437.8 566.0 438.0C567.3 438.1 568.7 439.2 570.0 439.2C571.3 439.1 572.7 437.9 574.0 437.8C575.3 437.6 576.7 437.9 578.0 438.1C579.3 438.3 580.7 438.6 582.0 438.8C583.3 439.1 584.7 439.5 586.0 439.5C587.3 439.5 588.7 439.2 590.0 439.0C591.3 438.7 592.7 438.1 594.0 438.2C595.3 438.3 596.7 439.6 598.0 439.6C599.3 439.6 600.7 438.4 602.0 438.0C603.3 437.7 604.7 437.6 606.0 437.6C607.3 437.7 608.7 438.0 610.0 438.2C611.3 438.3 612.7 438.7 614.0 438.6C615.3 438.5 616.7 437.8 618.0 437.7C619.3 437.6 620.7 437.9 622.0 438.0C623.3 438.1 624.7 438.3 626.0 438.4C627.3 438.6 628.7 438.9 630.0 438.9C631.3 438.8 632.7 438.0 634.0 437.9C635.3 437.8 636.7 438.1 638.0 438.4C639.3 438.7 640.7 439.3 642.0 439.6C643.3 439.8 644.7 439.8 646.0 439.8C647.3 439.7 648.7 439.2 650.0 439.0C651.3 438.9 652.7 439.1 654.0 439.1C655.3 439.1 656.7 439.1 658.0 438.9C659.3 438.7 660.7 438.1 662.0 437.9C663.3 437.7 664.7 437.7 666.0 437.7C667.3 437.6 668.7 437.3 670.0 437.6C671.3 438.0 672.7 439.4 674.0 439.6C675.3 439.9 676.7 439.1 678.0 439.1C679.3 439.2 680.7 440.0 682.0 439.7C683.3 439.5 684.7 437.8 686.0 437.6C687.3 437.5 688.7 438.8 690.0 439.0C691.3 439.2 692.7 438.6 694.0 438.7C695.3 438.7 696.7 439.3 698.0 439.2C699.3 439.1 700.7 438.2 702.0 438.3C703.3 438.4 704.7 439.9 706.0 439.8C707.3 439.7 708.7 437.9 710.0 437.8C711.3 437.6 712.7 438.6 714.0 438.8C715.3 439.0 716.7 439.1 718.0 439.2C719.3 439.4 720.7 439.6 722.0 439.6C723.3 439.6 724.7 439.3 726.0 439.2C727.3 439.1 728.7 439.1 730.0 439.1C731.3 439.2 732.7 439.2 734.0 439.3C735.3 439.5 736.7 439.9 738.0 440.0C739.3 440.0 740.7 439.6 742.0 439.6C743.3 439.6 744.7 439.8 746.0 439.8C747.3 439.9 748.7 440.0 750.0 440.0C751.3 440.0 752.7 440.0 754.0 440.0C755.3 439.9 756.7 439.7 758.0 439.6C759.3 439.6 760.7 439.9 762.0 439.9C763.3 440.0 764.7 440.0 766.0 440.0C767.3 439.9 768.7 439.8 770.0 439.8C771.3 439.7 772.7 439.8 774.0 439.8C775.3 439.8 776.7 439.6 778.0 439.6C779.3 439.6 780.7 439.7 782.0 439.8C783.3 439.8 784.7 439.8 786.0 439.8C787.3 439.7 788.7 439.4 790.0 439.4C791.3 439.4 792.7 439.7 794.0 439.8C795.3 439.9 796.7 440.0 798.0 440.0C799.3 440.1 800.7 440.0 802.0 440.0C803.3 439.9 804.7 439.9 806.0 439.9C807.3 439.8 808.7 439.6 810.0 439.6C811.3 439.6 812.7 439.8 814.0 439.9C815.3 439.9 816.7 439.8 818.0 439.8C819.3 439.7 820.7 439.6 822.0 439.7C823.3 439.7 824.7 440.0 826.0 439.9C827.3 439.9 828.7 439.4 830.0 439.4C831.3 439.4 832.7 439.9 834.0 439.9C835.3 439.9 836.7 439.4 838.0 439.4C839.3 439.4 840.7 439.7 842.0 439.8C843.3 439.8 844.7 439.7 846.0 439.7C847.3 439.6 848.7 439.5 850.0 439.5C851.3 439.5 852.7 439.8 854.0 439.8C855.3 439.9 856.7 439.7 858.0 439.7C859.3 439.7 860.7 439.7 862.0 439.8C863.3 439.8 864.7 440.0 866.0 440.0C867.3 440.0 868.7 439.6 870.0 439.5C871.3 439.4 872.7 439.4 874.0 439.4C875.3 439.4 876.7 439.5 878.0 439.6C879.3 439.6 880.7 439.8 882.0 439.8C883.3 439.8 884.7 439.6 886.0 439.5C887.3 439.4 888.7 439.4 890.0 439.5C891.3 439.6 892.7 439.9 894.0 440.0C895.3 440.0 896.7 439.9 898.0 439.8C899.3 439.8 900.7 439.6 902.0 439.7C903.3 439.7 904.7 440.0 906.0 440.0C907.3 440.0 908.7 439.6 910.0 439.6C911.3 439.6 912.7 439.8 914.0 439.8C915.3 439.8 916.7 439.5 918.0 439.5C919.3 439.5 920.7 439.6 922.0 439.7C923.3 439.7 924.7 439.9 926.0 439.9C927.3 440.0 928.7 440.0 930.0 440.0C931.3 440.0 932.7 440.0 934.0 440.0C935.3 439.9 936.7 439.7 938.0 439.6C939.3 439.6 940.7 439.8 942.0 439.8C943.3 439.8 944.7 439.6 946.0 439.6C947.3 439.5 948.7 439.4 950.0 439.4C951.3 439.5 952.7 439.6 954.0 439.7C955.3 439.8 956.7 439.9 958.0 439.9C959.3 440.0 960.7 440.0 962.0 439.9C963.3 439.9 964.7 439.8 966.0 439.8C967.3 439.9 968.7 440.1 970.0 440.0C971.3 440.0 972.7 439.6 974.0 439.5C975.3 439.5 976.7 439.4 978.0 439.5C979.3 439.5 980.7 439.7 982.0 439.7C983.3 439.7 983.0 439.5 986.0 439.5C989.0 439.6 996.7 440.5 1000.1 439.9C1003.5 439.3 1004.5 437.1 1006.4 436.1C1008.3 435.1 1009.8 433.5 1011.5 433.8C1013.2 434.1 1014.8 437.1 1016.5 438.1C1018.2 439.1 1019.5 440.2 1021.6 439.9C1023.7 439.5 1026.8 436.3 1029.2 436.1C1031.5 435.9 1033.4 438.1 1035.5 438.6C1037.6 439.2 1039.9 440.0 1041.8 439.4C1043.7 438.8 1044.9 435.8 1046.8 435.1C1048.7 434.4 1051.5 434.3 1053.2 435.1C1054.8 435.9 1053.2 439.1 1056.9 439.9C1060.7 440.7 1069.4 440.2 1075.9 439.9C1082.4 439.6 1091.1 438.1 1096.1 438.1C1101.2 438.1 1102.6 439.9 1106.2 439.9C1109.8 439.9 1114.4 438.0 1117.6 438.1C1120.7 438.2 1119.5 440.3 1125.2 440.6C1130.8 440.9 1144.7 440.2 1151.7 439.9C1158.6 439.6 1162.6 438.9 1166.8 438.9C1171.1 438.9 1174.8 439.7 1176.9 439.9C1179.1 440.1 1176.9 440.0 1180.0 440.0C1266.7 440.0 1610.8 440.0 1697.0 440.0" fill="none" stroke="#3636dc" stroke-width="2.0" stroke-linejoin="round" />
<polyline points="54.5,443.9 67.7,444.4 71.5,446.2 75.3,447.7 519.9,447.7 562.9,446.9 565.5,452.8 573.1,453.8 578.1,460.3 643.8,460.3 647.6,481.1 787.8,481.1 790.8,460.8 829.5,460.8 832.8,466.4 968.4,466.4 972.2,460.3 987.4,460.3 990.0,460.3 1101.2,460.3 1104.9,469.7 1328.5,469.7 1331.1,461.3 1333.6,461.3 1335.6,481.1 1348.7,481.1 1351.3,460.8 1355.8,460.8 1358.3,481.1 1372.7,481.1 1374.0,441.9 1375.3,441.9 1377.0,461.3 1379.1,461.3 1380.0,461.3 1506.3,461.3 1511.4,462.6 1546.7,462.6 1550.5,470.2 1611.2,470.2 1614.4,481.1 1635.2,481.1 1638.9,461.3 1664.2,461.3 1666.7,481.1 1677.6,481.1 1678.6,441.9 1680.1,481.1 1697.1,481.1" fill="none" stroke="#8c8c8c" stroke-width="2" stroke-linejoin="round" stroke-linecap="butt" />
<polyline points="54.0,521.5 767.4,521.4 777.5,531.2 805.8,531.2 825.4,551.4 1694.0,551.5 1697.0,546.0" fill="none" stroke="#a85ad0" stroke-width="2.2" stroke-linejoin="round" stroke-linecap="butt" />
<rect x="54" y="560" width="1643" height="2" fill="#f2b860" />
<polyline points="54.0,600.4 56.5,600.5 59.0,600.6 61.5,600.8 64.0,600.5 66.5,600.8 69.0,599.5 71.5,600.2 74.0,600.8 76.5,600.4 79.0,600.8 81.5,599.7 84.0,600.2 86.5,599.8 89.0,600.3 91.5,600.3 94.0,599.5 96.5,599.8 99.0,599.9 101.5,600.8 104.0,600.6 106.5,599.7 109.0,600.6 111.5,599.7 114.0,600.4 116.5,599.7 119.0,599.5 121.5,600.7 124.0,599.8 126.5,599.8 129.0,600.9 131.5,600.7 134.0,599.9 136.5,600.8 139.0,600.3 141.5,600.4 144.0,599.8 146.5,600.8 149.0,600.5 151.5,600.9 154.0,600.8 156.5,599.9 159.0,600.0 161.5,599.7 164.0,599.7 166.5,599.6 169.0,599.9 171.5,600.3 174.0,599.5 176.5,600.4 179.0,600.0 181.5,599.9 184.0,600.6 186.5,600.2 189.0,599.9 191.5,600.2 194.0,600.5 196.5,599.6 199.0,600.9 201.5,599.5 204.0,600.5 206.5,600.7 209.0,599.5 211.5,600.6 214.0,600.0 216.5,600.3 219.0,599.5 221.5,599.6 224.0,599.8 226.5,600.8 229.0,599.8 231.5,600.6 234.0,600.8 236.5,600.8 239.0,600.0 241.5,600.0 244.0,600.2 246.5,600.6 249.0,599.7 251.5,600.5 254.0,600.6 256.5,600.7 259.0,599.6 261.5,600.8 264.0,599.6 266.5,600.0 269.0,600.4 271.5,600.8 274.0,600.0 276.5,600.8 279.0,600.3 281.5,599.9 284.0,599.9 286.5,599.7 289.0,599.6 291.5,599.7 294.0,600.5 296.5,600.9 299.0,599.7 301.5,599.6 304.0,600.9 306.5,600.2 309.0,600.1 311.5,599.8 314.0,600.3 316.5,600.7 319.0,600.1 321.5,600.1 324.0,599.6 326.5,600.8 329.0,599.5 331.5,600.2 334.0,600.7 336.5,599.7 339.0,600.5 341.5,600.8 344.0,600.4 346.5,600.6 349.0,599.6 351.5,600.1 354.0,599.7 356.5,600.7 359.0,599.9 361.5,600.1 364.0,600.9 366.5,600.7 369.0,600.9 371.5,600.1 374.0,600.2 376.5,600.5 379.0,600.2 381.5,599.9 384.0,600.1 386.5,599.7 389.0,600.0 391.5,600.9 394.0,600.8 396.5,600.4 399.0,600.2 401.5,600.0 404.0,599.6 406.5,599.9 409.0,600.6 411.5,600.7 414.0,600.0 416.5,600.6 419.0,600.6 421.5,600.5 424.0,600.4 426.5,600.6 429.0,600.0 431.5,600.5 434.0,599.9 436.5,600.2 439.0,600.6 441.5,600.5 444.0,599.9 446.5,600.8 449.0,600.4 451.5,600.3 454.0,599.5 456.5,600.3 459.0,599.9 461.5,600.4 464.0,600.1 466.5,600.6 469.0,600.4 471.5,600.6 474.0,600.0 476.5,600.4 479.0,600.5 481.5,600.7 484.0,600.0 486.5,600.7 489.0,600.7 491.5,600.5 494.0,600.9 496.5,600.8 499.0,600.2 501.5,600.2 504.0,599.7 506.5,600.7 509.0,600.8 511.5,600.2 514.0,600.5 516.5,600.5 519.0,600.5 521.5,599.7 524.0,600.6 526.5,600.3 529.0,600.4 531.5,600.1 534.0,600.4 536.5,600.6 539.0,600.4 541.5,600.5 544.0,599.5 546.5,599.7 549.0,600.1 551.5,600.4 554.0,599.8 556.5,600.5 559.0,600.4 561.5,599.6 564.0,600.2 566.5,599.8 569.0,599.6 571.5,599.7 574.0,599.9 576.5,599.8 579.0,599.8 581.5,599.5 584.0,600.2 586.5,600.0 589.0,600.4 591.5,600.3 594.0,599.8 596.5,600.8 599.0,599.5 601.5,600.1 604.0,599.9 606.5,600.1 609.0,599.7 611.5,600.7 614.0,600.0 616.5,599.6 619.0,600.4 621.5,598.6 624.0,599.3 626.5,599.0 629.0,599.3 631.5,599.8 634.0,599.6 636.5,599.1 639.0,599.6 641.5,599.4 644.0,599.0 646.5,598.7 649.0,599.3 651.5,599.3 654.0,599.8 656.5,599.9 659.0,599.4 661.5,599.0 664.0,599.8 666.5,598.5 669.0,598.7 671.5,599.3 674.0,599.4 676.5,598.7 679.0,599.4 681.5,600.7 684.0,600.0 686.5,600.1 689.0,599.8 691.5,599.9 694.0,600.9 696.5,600.0 699.0,600.8 701.5,600.8 704.0,600.3 706.5,599.9 709.0,600.9 711.5,600.2 714.0,600.1 716.5,599.9 719.0,600.9 721.5,600.2 724.0,599.9 726.5,600.2 729.0,599.7 731.5,600.4 734.0,600.1 736.5,599.9 739.0,600.6 741.5,600.7 744.0,599.5 746.5,600.2 749.0,599.9 751.5,600.8 754.0,600.6 756.5,599.8 759.0,599.9 761.5,599.7 764.0,600.9 766.5,599.9 769.0,600.4 771.5,600.2 774.0,600.4 776.5,600.3 779.0,600.5 781.5,599.7 784.0,600.6 786.5,599.9 789.0,600.2 791.5,600.0 794.0,599.9 796.5,600.2 799.0,600.2 801.5,600.0 804.0,600.5 806.5,600.3 809.0,599.6 811.5,599.9 814.0,600.1 816.5,600.8 819.0,600.7 821.5,600.3 824.0,599.5 826.5,600.6 829.0,600.1 831.5,600.3 834.0,600.5 836.5,600.4 839.0,600.2 841.5,600.8 844.0,600.0 846.5,600.0 849.0,600.7 851.5,599.8 854.0,599.9 856.5,600.7 859.0,599.6 861.5,600.7 864.0,600.5 866.5,600.1 869.0,599.9 871.5,600.6 874.0,600.8 876.5,599.7 879.0,600.2 881.5,600.3 884.0,600.2 886.5,600.0 889.0,599.7 891.5,600.3 894.0,600.6 896.5,599.6 899.0,599.8 901.5,600.6 904.0,600.6 906.5,600.4 909.0,599.5 911.5,600.5 914.0,600.9 916.5,600.9 919.0,600.5 921.5,599.6 924.0,600.7 926.5,599.8 929.0,600.4 931.5,600.8 934.0,600.5 936.5,599.7 939.0,599.9 941.5,600.8 944.0,599.7 946.5,600.4 949.0,600.1 951.5,599.7 954.0,600.4 956.5,599.6 959.0,599.7 961.5,600.0 964.0,599.6 966.5,599.6 969.0,600.3 971.5,600.5 974.0,600.7 976.5,599.7 979.0,600.1 981.5,599.9 984.0,600.3 986.5,600.2 989.0,600.8 990.0,599.6 1040.5,599.6 1091.1,600.6 1141.6,599.6 1192.1,598.1 1217.4,597.1 1242.6,595.6 1267.9,595.1 1290.6,594.5 1295.7,597.1 1303.3,600.1 1313.4,601.4 1331.1,600.1 1348.7,601.4 1368.9,600.6 1384.1,601.4 1394.2,600.6 1697.4,600.6" fill="none" stroke="#3636e0" stroke-width="2" stroke-linejoin="round" stroke-linecap="butt" />
<path d="M54.5 641.3C55.0 641.5 57.9 643.9 58.8 643.6C59.8 643.2 61.7 638.6 62.6 638.0C63.5 637.4 65.5 637.3 66.4 638.0C67.3 638.7 69.2 644.5 70.2 644.3C71.2 644.2 74.2 637.0 75.3 636.7C76.3 636.4 78.2 640.7 79.1 641.8C79.9 642.9 81.8 646.4 82.8 646.1C83.9 645.8 86.9 640.2 87.9 639.3C88.9 638.3 90.7 637.9 91.7 638.0C92.7 638.1 95.7 640.4 96.7 640.5C97.8 640.7 99.5 638.8 100.5 639.3C101.6 639.7 104.4 643.9 105.6 644.3C106.8 644.7 109.6 643.2 110.6 642.5C111.7 641.9 113.4 638.7 114.4 638.5C115.5 638.3 118.1 640.1 119.5 640.5C120.8 641.0 124.5 642.8 125.8 642.5C127.1 642.3 129.7 638.3 130.8 638.5C132.0 638.7 134.7 644.3 135.9 644.3C137.1 644.3 139.8 638.9 140.9 638.5C142.1 638.1 145.0 639.8 146.0 640.5C147.0 641.2 148.6 644.3 149.8 644.3C151.0 644.3 154.5 641.0 156.1 640.5C157.7 640.0 161.9 639.8 163.7 640.0C165.5 640.3 169.5 642.4 171.3 642.5C173.0 642.7 177.4 641.3 178.8 641.3C180.3 641.3 182.9 642.7 183.9 642.5C184.9 642.4 186.8 640.0 187.7 640.0C188.6 640.0 190.1 642.6 191.5 642.5C192.8 642.5 197.1 639.7 199.1 639.3C201.0 638.8 205.8 638.5 207.9 638.8C210.0 639.0 214.5 641.1 216.7 641.3C218.9 641.5 225.1 641.2 226.8 640.5C228.6 639.8 230.4 635.2 231.4 635.5C232.4 635.8 234.8 641.8 235.7 643.1C236.6 644.3 238.1 646.7 239.0 646.1C239.9 645.5 242.3 639.0 243.3 638.0C244.2 637.0 246.0 637.1 247.1 637.2C248.1 637.4 250.9 638.4 252.1 639.3C253.3 640.1 256.0 644.5 257.2 644.3C258.3 644.2 261.0 638.3 262.2 638.0C263.4 637.7 265.9 641.9 267.3 641.8C268.6 641.6 272.5 636.7 273.6 636.7C274.6 636.7 275.3 641.9 276.1 641.8C276.9 641.7 279.5 636.0 280.4 636.0C281.3 636.0 282.7 640.8 283.7 641.8C284.7 642.8 287.7 644.4 288.7 644.3C289.8 644.3 291.6 641.3 292.5 641.3C293.4 641.3 295.4 644.8 296.3 644.3C297.2 643.8 299.1 637.7 300.1 637.2C301.1 636.8 304.1 639.8 305.2 640.5C306.2 641.3 308.1 643.9 308.9 643.6C309.8 643.2 311.7 636.9 312.7 637.2C313.8 637.5 316.6 645.8 317.8 646.1C319.0 646.3 322.0 640.2 322.8 639.3C323.7 638.3 324.5 637.6 325.4 638.0C326.3 638.4 328.9 642.6 330.4 643.1C331.9 643.5 336.2 642.1 338.0 641.8C339.8 641.5 343.8 640.7 345.6 640.5C347.3 640.3 351.7 639.5 353.2 640.0C354.6 640.6 356.7 645.3 357.7 645.1C358.7 644.9 360.9 638.9 362.0 638.5C363.1 638.1 365.4 641.4 367.1 641.8C368.7 642.2 374.0 641.8 375.9 641.8C377.8 641.7 382.1 641.8 383.5 641.3C384.8 640.8 386.4 637.0 387.3 637.2C388.1 637.5 389.9 642.7 391.1 643.6C392.2 644.4 396.0 645.0 397.4 644.3C398.7 643.7 401.4 638.3 402.4 638.0C403.5 637.7 404.9 641.1 406.2 641.8C407.5 642.5 412.3 644.6 413.8 644.3C415.3 644.0 417.7 639.7 418.8 639.3C420.0 638.8 422.4 640.2 423.9 640.5C425.4 640.8 430.0 641.4 431.5 641.8C432.9 642.1 435.3 643.9 436.5 643.6C437.7 643.2 440.4 638.7 441.6 638.5C442.8 638.3 445.5 641.0 446.6 641.8C447.8 642.6 450.5 646.1 451.7 645.6C452.9 645.0 455.7 637.7 456.7 637.2C457.8 636.8 459.1 641.4 460.5 641.8C462.0 642.2 467.2 640.5 469.4 640.5C471.6 640.5 477.4 641.8 479.5 641.8C481.5 641.8 485.9 640.0 487.1 640.5C488.2 641.0 488.5 646.5 489.1 646.1C489.7 645.6 491.3 637.9 492.1 636.7C492.9 635.6 494.9 635.8 495.9 636.2C496.9 636.7 499.6 639.8 500.9 640.5C502.3 641.3 505.9 642.5 507.3 642.5C508.6 642.6 511.1 641.3 512.3 641.3C513.5 641.3 516.5 642.5 517.4 642.5C518.3 642.5 517.4 641.4 520.0 641.3C524.4 641.1 550.8 640.9 555.4 641.3C559.2 641.6 558.1 644.6 559.2 644.3C560.2 644.1 562.9 639.5 564.2 639.3C565.5 639.1 569.1 642.2 570.5 642.5C572.0 642.9 575.7 643.1 576.8 642.5C578.0 642.0 579.7 637.9 580.6 638.0C581.5 638.1 582.9 642.6 584.4 643.1C585.9 643.5 590.8 642.0 593.3 641.8C595.8 641.6 602.1 641.2 605.9 641.3C609.7 641.4 623.0 642.7 626.1 642.5C629.2 642.4 630.9 640.0 632.4 640.0C633.9 640.0 637.4 642.8 638.7 642.5C640.1 642.3 642.6 637.3 643.8 637.5C645.0 637.7 647.7 643.5 648.8 644.3C650.0 645.1 652.1 644.5 653.9 644.3C655.7 644.1 661.6 643.0 664.0 642.5C666.4 642.0 672.0 640.3 674.1 640.0C676.2 639.8 679.9 640.1 681.7 640.5C683.5 640.9 687.5 643.6 689.3 643.6C691.0 643.6 694.8 640.9 696.8 640.5C698.9 640.2 705.0 640.2 706.9 640.5C708.9 640.9 712.1 643.6 713.3 643.6C714.4 643.6 715.7 640.7 717.1 640.5C718.4 640.3 722.6 641.7 724.6 641.8C726.7 641.9 732.1 641.1 734.7 641.3C737.4 641.5 744.1 643.4 747.4 643.6C750.6 643.7 759.3 643.1 762.5 642.5C765.8 642.0 772.8 639.0 775.2 638.5C777.5 638.0 781.0 638.1 782.7 638.5C784.5 638.9 788.5 641.6 790.3 641.8C792.1 642.0 795.8 640.8 797.9 640.5C800.0 640.2 806.2 638.9 808.0 639.3C809.8 639.6 811.6 643.6 813.1 643.6C814.5 643.6 818.7 639.9 820.6 639.3C822.5 638.6 828.0 637.7 829.5 638.0C830.9 638.3 831.9 641.1 833.3 641.8C834.6 642.4 839.4 643.3 840.8 643.6C842.3 643.9 844.8 645.1 845.9 644.3C847.0 643.5 849.4 637.3 850.4 636.7C851.5 636.1 853.6 638.5 854.7 639.3C855.8 640.0 858.6 642.4 859.8 643.1C861.0 643.7 863.5 645.0 864.8 644.8C866.2 644.6 869.5 641.8 871.2 641.3C872.8 640.8 876.7 640.5 878.7 640.5C880.8 640.6 883.5 641.6 888.8 641.8C894.1 642.0 918.9 642.4 924.2 642.3C929.5 642.1 932.0 640.6 934.3 640.5C936.7 640.5 942.1 641.8 944.4 641.8C946.8 641.8 951.0 640.5 954.5 640.5C958.1 640.6 970.9 642.2 974.7 642.3C978.6 642.4 985.6 641.4 987.4 641.3C989.1 641.2 988.5 641.4 990.0 641.3C991.5 641.2 998.0 640.9 1000.1 640.5C1002.2 640.2 1006.2 638.4 1007.7 638.5C1009.2 638.6 1011.3 640.8 1012.7 641.3C1014.2 641.8 1018.5 643.1 1020.3 643.1C1022.1 643.0 1026.1 640.5 1027.9 640.5C1029.7 640.6 1033.7 643.6 1035.5 643.6C1037.2 643.6 1041.3 640.9 1043.1 640.5C1044.8 640.1 1049.0 639.6 1050.6 640.0C1052.3 640.5 1055.2 643.9 1056.9 644.3C1058.7 644.7 1063.9 643.6 1065.8 643.6C1067.7 643.6 1071.3 644.8 1073.4 644.3C1075.4 643.8 1081.4 639.6 1083.5 639.3C1085.5 638.9 1089.6 641.3 1091.1 641.3C1092.5 641.3 1094.6 639.2 1096.1 639.3C1097.6 639.3 1101.3 641.6 1103.7 641.8C1106.0 642.0 1113.7 641.1 1116.3 641.3C1119.0 641.4 1124.1 643.1 1126.4 643.1C1128.8 643.1 1134.2 641.8 1136.5 641.3C1138.9 640.8 1144.6 638.7 1146.6 638.5C1148.7 638.4 1152.4 639.9 1154.2 640.0C1156.0 640.1 1160.0 638.9 1161.8 639.3C1163.6 639.7 1167.3 643.3 1169.4 643.6C1171.4 643.9 1177.1 642.0 1179.5 641.8C1181.8 641.6 1187.1 642.2 1189.6 641.8C1192.1 641.3 1199.2 638.1 1200.9 638.0C1202.7 637.9 1203.4 640.8 1204.7 641.3C1206.1 641.8 1209.7 642.7 1212.3 642.5C1215.0 642.4 1224.5 640.0 1227.5 640.0C1230.4 640.0 1235.2 642.3 1237.6 642.5C1239.9 642.8 1245.3 642.8 1247.7 642.5C1250.0 642.3 1255.4 640.2 1257.8 640.0C1260.1 639.9 1265.2 641.3 1267.9 641.3C1270.5 641.3 1277.6 640.0 1280.5 640.0C1283.5 640.0 1280.5 641.1 1293.2 641.3C1341.8 641.4 1650.2 641.3 1697.4 641.3" fill="none" stroke="#8f8f2a" stroke-width="2.0" stroke-linejoin="round" />
<rect x="54" y="661" width="1643" height="1" fill="#14148c" />
<polyline points="54.0,671.2 666.5,671.2 669.1,670.2 734.7,670.2 737.3,669.5 882.5,669.5 885.1,668.8 1079.7,668.8 1082.2,667.8 1262.8,667.8 1265.4,666.5 1697.0,666.5" fill="none" stroke="#f050e8" stroke-width="2.4" stroke-linejoin="round" stroke-linecap="butt" />
<polyline points="54.0,629.2 57.0,629.1 60.0,628.8 63.0,629.7 66.0,628.6 69.0,629.2 72.0,629.7 75.0,628.7 78.0,629.3 81.0,629.4 84.0,628.7 87.0,629.1 90.0,629.5 93.0,629.2 96.0,629.5 99.0,628.9 102.0,629.0 105.0,628.8 108.0,629.3 111.0,629.8 114.0,629.4 117.0,629.6 120.0,629.2 123.0,629.6 126.0,628.8 129.0,629.1 132.0,629.5 135.0,629.6 138.0,629.2 141.0,628.8 144.0,629.1 147.0,629.0 150.0,629.1 153.0,629.7 156.0,629.0 159.0,629.8 162.0,629.8 165.0,628.8 168.0,629.2 171.0,629.4 174.0,628.8 177.0,629.3 180.0,629.9 183.0,628.9 186.0,629.5 189.0,629.0 192.0,629.5 195.0,629.9 198.0,629.1 201.0,628.8 204.0,628.9 207.0,629.5 210.0,628.9 213.0,628.9 216.0,629.4 219.0,630.0 222.0,629.4 225.0,629.3 228.0,629.6 231.0,629.0 234.0,629.6 237.0,629.1 240.0,629.6 243.0,630.0 246.0,629.0 249.0,629.6 252.0,629.6 255.0,629.1 258.0,629.2 261.0,630.1 264.0,630.1 267.0,629.1 270.0,629.8 273.0,630.1 276.0,629.2 279.0,629.7 282.0,629.0 285.0,629.4 288.0,629.8 291.0,629.7 294.0,629.9 297.0,629.1 300.0,629.4 303.0,630.0 306.0,629.7 309.0,629.5 312.0,629.5 315.0,630.2 318.0,629.7 321.0,629.0 324.0,630.0 327.0,629.4 330.0,629.5 333.0,629.3 336.0,629.6 339.0,629.4 342.0,629.1 345.0,629.8 348.0,629.2 351.0,630.0 354.0,629.1 357.0,630.0 360.0,630.0 363.0,629.7 366.0,629.9 369.0,629.4 372.0,630.0 375.0,629.6 378.0,629.4 381.0,630.3 384.0,629.6 387.0,629.6 390.0,630.1 393.0,629.6 396.0,629.9 399.0,629.3 402.0,630.1 405.0,629.4 408.0,629.2 411.0,630.3 414.0,629.4 417.0,630.3 420.0,630.3 423.0,629.9 426.0,629.2 429.0,629.2 432.0,629.4 435.0,629.7 438.0,629.9 441.0,630.4 444.0,629.6 447.0,629.4 450.0,629.9 453.0,629.4 456.0,629.3 459.0,629.9 462.0,630.1 465.0,629.3 468.0,629.8 471.0,630.1 474.0,630.2 477.0,629.7 480.0,630.3 483.0,629.5 486.0,630.1 489.0,630.2 492.0,630.3 495.0,629.9 498.0,629.4 501.0,629.3 504.0,629.9 507.0,629.5 510.0,630.1 513.0,629.4 516.0,630.2 519.0,629.6 522.0,629.3 525.0,629.5 528.0,629.8 531.0,629.9 534.0,629.7 537.0,629.4 540.0,629.8 543.0,630.3 546.0,629.8 549.0,630.2 552.0,629.1 555.0,630.3 558.0,629.9 561.0,629.2 564.0,629.2 567.0,629.3 570.0,629.8 573.0,628.8 576.0,629.5 579.0,629.4 582.0,629.2 585.0,629.7 588.0,629.7 591.0,629.0 594.0,629.8 597.0,629.5 600.0,629.6 603.0,629.8 606.0,629.1 609.0,629.8 612.0,629.6 615.0,630.2 618.0,629.5 621.0,630.2 624.0,630.1 627.0,630.0 630.0,630.4 633.0,629.5 636.0,630.3 639.0,630.5 642.0,630.5 645.0,629.8 650.9,629.2" fill="none" stroke="#a03a3a" stroke-width="2.2" stroke-linejoin="round" stroke-linecap="butt" />
<path d="M650.9 629.2C651.5 629.5 654.9 630.8 656.4 631.7C658.0 632.6 662.2 635.6 664.0 636.7C665.8 637.9 669.2 640.4 671.6 641.8C673.9 643.2 681.3 647.0 684.2 648.6C687.2 650.2 694.2 654.0 696.8 655.2C699.5 656.4 704.9 658.2 706.9 659.0C709.0 659.8 712.5 661.4 714.5 662.0C716.6 662.6 722.3 663.3 724.6 663.8C727.0 664.2 732.1 665.1 734.7 665.8C737.4 666.5 744.4 668.6 747.4 669.6C750.3 670.6 757.1 673.0 760.0 674.1C762.9 675.2 770.0 678.0 772.6 678.9C775.3 679.9 779.8 681.5 782.7 682.2C785.7 682.9 794.7 684.3 797.9 684.7C801.1 685.2 807.0 685.5 810.5 686.0C814.1 686.5 825.9 688.6 828.2 689.0C830.0 689.5 828.5 689.5 830.0 689.6C831.5 689.7 839.0 689.4 841.4 689.6C843.7 689.8 848.0 691.2 850.2 691.4C852.4 691.6 856.5 690.7 860.3 691.4C864.1 692.0 877.7 695.9 883.1 697.2C888.4 698.4 900.2 701.1 905.8 702.2C911.4 703.4 925.7 706.2 931.1 707.3C936.4 708.4 946.5 710.8 951.3 711.6C956.0 712.4 967.3 713.5 971.5 714.1C975.6 714.8 982.5 716.4 986.6 717.1C990.8 717.9 1002.1 720.0 1006.8 720.4C1011.6 720.8 1022.3 720.3 1027.1 720.4C1031.8 720.6 1043.7 721.4 1047.3 721.7C1050.8 722.0 1054.4 722.5 1057.4 722.9C1060.3 723.4 1068.4 724.6 1072.5 725.5C1076.7 726.4 1088.0 729.4 1092.7 730.5C1097.5 731.6 1108.2 734.0 1112.9 735.1C1117.7 736.1 1129.3 738.6 1133.2 739.4C1137.0 740.2 1142.0 741.4 1145.8 741.9C1149.6 742.4 1161.6 743.2 1166.0 743.7C1170.4 744.2 1179.6 745.6 1183.7 746.2C1187.8 746.8 1196.7 748.4 1201.4 749.0C1206.1 749.5 1219.1 750.2 1224.1 750.7C1229.1 751.2 1240.2 752.7 1244.3 753.3C1248.4 753.8 1255.9 755.0 1259.5 755.3C1263.0 755.6 1270.7 755.7 1274.6 755.8C1278.6 755.9 1274.6 756.2 1293.6 756.3C1342.9 756.4 1649.9 756.3 1697.0 756.3" fill="none" stroke="#e83030" stroke-width="2.1" stroke-linejoin="round" />
<rect x="54.0" y="755.3" width="4.5" height="3.6" fill="#3f8f3f"/>
<rect x="58.0" y="755.2" width="6.5" height="3.6" fill="#b07a4a"/>
<rect x="64.0" y="755.1" width="8.5" height="3.6" fill="#a8744a"/>
<rect x="72.0" y="755.3" width="3.5" height="3.6" fill="#a8744a"/>
<rect x="75.0" y="755.6" width="4.5" height="3.6" fill="#3f8f3f"/>
<rect x="79.0" y="755.5" width="10.5" height="3.6" fill="#2f7f3a"/>
<rect x="89.0" y="755.7" width="6.5" height="3.6" fill="#b07a4a"/>
<rect x="95.0" y="755.5" width="8.5" height="3.6" fill="#b07a4a"/>
<rect x="103.0" y="755.6" width="5.5" height="3.6" fill="#2f7f3a"/>
<rect x="108.0" y="755.5" width="3.5" height="3.6" fill="#b07a4a"/>
<rect x="111.0" y="755.5" width="8.5" height="3.6" fill="#3f8f3f"/>
<rect x="119.0" y="755.8" width="4.5" height="3.6" fill="#3f8f3f"/>
<rect x="123.0" y="755.4" width="4.5" height="3.6" fill="#3f8f3f"/>
<rect x="127.0" y="755.9" width="12.5" height="3.6" fill="#b07a4a"/>
<rect x="139.0" y="755.4" width="8.5" height="3.6" fill="#b07a4a"/>
<rect x="147.0" y="755.5" width="6.5" height="3.6" fill="#3f8f3f"/>
<rect x="153.0" y="755.6" width="4.5" height="3.6" fill="#3f8f3f"/>
<rect x="157.0" y="756.0" width="6.5" height="3.6" fill="#b07a4a"/>
<rect x="163.0" y="755.5" width="6.5" height="3.6" fill="#b07a4a"/>
<rect x="169.0" y="755.5" width="10.5" height="3.6" fill="#3f8f3f"/>
<rect x="179.0" y="755.9" width="3.5" height="3.6" fill="#2f7f3a"/>
<rect x="182.0" y="756.2" width="8.5" height="3.6" fill="#a8744a"/>
<rect x="190.0" y="756.0" width="3.5" height="3.6" fill="#3f8f3f"/>
<rect x="193.0" y="756.1" width="12.5" height="3.6" fill="#b07a4a"/>
<rect x="205.0" y="755.7" width="5.5" height="3.6" fill="#3f8f3f"/>
<rect x="210.0" y="755.9" width="12.5" height="3.6" fill="#3f8f3f"/>
<rect x="222.0" y="756.3" width="10.5" height="3.6" fill="#a8744a"/>
<rect x="232.0" y="756.4" width="4.5" height="3.6" fill="#3f8f3f"/>
<rect x="236.0" y="756.2" width="8.5" height="3.6" fill="#b07a4a"/>
<rect x="244.0" y="756.0" width="6.5" height="3.6" fill="#3f8f3f"/>
<rect x="250.0" y="756.4" width="3.5" height="3.6" fill="#3f8f3f"/>
<rect x="253.0" y="756.0" width="6.5" height="3.6" fill="#b07a4a"/>
<rect x="259.0" y="756.2" width="5.5" height="3.6" fill="#b07a4a"/>
<rect x="264.0" y="756.2" width="4.5" height="3.6" fill="#b07a4a"/>
<rect x="268.0" y="756.5" width="4.5" height="3.6" fill="#2f7f3a"/>
<rect x="272.0" y="756.4" width="3.5" height="3.6" fill="#2f7f3a"/>
<rect x="275.0" y="756.6" width="10.5" height="3.6" fill="#3f8f3f"/>
<rect x="285.0" y="756.5" width="5.5" height="3.6" fill="#b07a4a"/>
<rect x="290.0" y="756.4" width="6.5" height="3.6" fill="#b07a4a"/>
<rect x="296.0" y="756.3" width="4.5" height="3.6" fill="#b07a4a"/>
<rect x="300.0" y="756.3" width="10.5" height="3.6" fill="#2f7f3a"/>
<rect x="310.0" y="756.4" width="10.5" height="3.6" fill="#a8744a"/>
<rect x="320.0" y="756.5" width="4.5" height="3.6" fill="#a8744a"/>
<rect x="324.0" y="756.9" width="10.5" height="3.6" fill="#b07a4a"/>
<rect x="334.0" y="756.4" width="4.5" height="3.6" fill="#3f8f3f"/>
<rect x="338.0" y="756.5" width="3.5" height="3.6" fill="#b07a4a"/>
<rect x="341.0" y="756.5" width="12.5" height="3.6" fill="#b07a4a"/>
<rect x="353.0" y="756.8" width="8.5" height="3.6" fill="#3f8f3f"/>
<rect x="361.0" y="756.6" width="4.5" height="3.6" fill="#3f8f3f"/>
<rect x="365.0" y="756.9" width="6.5" height="3.6" fill="#2f7f3a"/>
<rect x="371.0" y="757.1" width="3.5" height="3.6" fill="#a8744a"/>
<rect x="374.0" y="756.8" width="12.5" height="3.6" fill="#b07a4a"/>
<rect x="386.0" y="757.0" width="12.5" height="3.6" fill="#333333"/>
<rect x="398.0" y="757.3" width="12.5" height="3.6" fill="#b07a4a"/>
<rect x="410.0" y="756.9" width="8.5" height="3.6" fill="#b07a4a"/>
<rect x="418.0" y="757.3" width="4.5" height="3.6" fill="#b07a4a"/>
<rect x="422.0" y="756.9" width="12.5" height="3.6" fill="#a8744a"/>
<rect x="434.0" y="757.3" width="8.5" height="3.6" fill="#a8744a"/>
<rect x="442.0" y="757.3" width="8.5" height="3.6" fill="#2f7f3a"/>
<rect x="450.0" y="757.3" width="12.5" height="3.6" fill="#b07a4a"/>
<rect x="462.0" y="757.0" width="5.5" height="3.6" fill="#b07a4a"/>
<rect x="467.0" y="757.5" width="10.5" height="3.6" fill="#b07a4a"/>
<rect x="477.0" y="757.5" width="10.5" height="3.6" fill="#333333"/>
<rect x="487.0" y="757.4" width="6.5" height="3.6" fill="#b07a4a"/>
<rect x="493.0" y="757.3" width="10.5" height="3.6" fill="#a8744a"/>
<rect x="503.0" y="757.0" width="6.5" height="3.6" fill="#b07a4a"/>
<rect x="509.0" y="757.4" width="6.5" height="3.6" fill="#b07a4a"/>
<rect x="515.0" y="757.3" width="12.5" height="3.6" fill="#3f8f3f"/>
<rect x="527.0" y="757.3" width="4.5" height="3.6" fill="#b07a4a"/>
<rect x="531.0" y="757.1" width="10.5" height="3.6" fill="#2f7f3a"/>
<rect x="541.0" y="757.4" width="6.5" height="3.6" fill="#b07a4a"/>
<rect x="547.0" y="757.4" width="4.5" height="3.6" fill="#2f7f3a"/>
<rect x="551.0" y="757.4" width="8.5" height="3.6" fill="#b07a4a"/>
<rect x="559.0" y="757.3" width="12.5" height="3.6" fill="#3f8f3f"/>
<rect x="571.0" y="757.2" width="6.5" height="3.6" fill="#a8744a"/>
<rect x="577.0" y="757.1" width="8.5" height="3.6" fill="#b07a4a"/>
<rect x="585.0" y="757.4" width="4.5" height="3.6" fill="#3f8f3f"/>
<rect x="589.0" y="757.3" width="3.5" height="3.6" fill="#b07a4a"/>
<rect x="592.0" y="757.4" width="8.5" height="3.6" fill="#2f7f3a"/>
<rect x="600.0" y="757.4" width="3.5" height="3.6" fill="#3f8f3f"/>
<rect x="603.0" y="757.4" width="4.5" height="3.6" fill="#b07a4a"/>
<rect x="607.0" y="757.6" width="10.5" height="3.6" fill="#b07a4a"/>
<rect x="617.0" y="757.6" width="5.5" height="3.6" fill="#b07a4a"/>
<rect x="622.0" y="757.4" width="10.5" height="3.6" fill="#3f8f3f"/>
<rect x="632.0" y="757.6" width="5.5" height="3.6" fill="#3f8f3f"/>
<rect x="637.0" y="757.4" width="6.5" height="3.6" fill="#3f8f3f"/>
<rect x="643.0" y="757.2" width="5.5" height="3.6" fill="#2f7f3a"/>
<rect x="648.0" y="757.0" width="5.5" height="3.6" fill="#3f8f3f"/>
<rect x="653.0" y="757.4" width="12.5" height="3.6" fill="#b07a4a"/>
<rect x="665.0" y="757.0" width="3.5" height="3.6" fill="#a8744a"/>
<rect x="668.0" y="757.1" width="8.5" height="3.6" fill="#3f8f3f"/>
<rect x="676.0" y="757.1" width="3.5" height="3.6" fill="#3f8f3f"/>
<rect x="679.0" y="757.5" width="5.5" height="3.6" fill="#b07a4a"/>
<rect x="684.0" y="757.5" width="5.5" height="3.6" fill="#a8744a"/>
<rect x="689.0" y="757.0" width="12.5" height="3.6" fill="#b07a4a"/>
<rect x="701.0" y="757.1" width="4.5" height="3.6" fill="#a8744a"/>
<rect x="705.0" y="757.4" width="8.5" height="3.6" fill="#b07a4a"/>
<rect x="713.0" y="757.4" width="6.5" height="3.6" fill="#b07a4a"/>
<rect x="719.0" y="757.4" width="3.5" height="3.6" fill="#333333"/>
<rect x="722.0" y="757.0" width="12.5" height="3.6" fill="#3f8f3f"/>
<rect x="734.0" y="757.4" width="12.5" height="3.6" fill="#a8744a"/>
<rect x="746.0" y="757.2" width="6.5" height="3.6" fill="#2f7f3a"/>
<rect x="752.0" y="757.2" width="5.5" height="3.6" fill="#b07a4a"/>
<rect x="757.0" y="756.8" width="10.5" height="3.6" fill="#333333"/>
<rect x="767.0" y="756.6" width="3.5" height="3.6" fill="#b07a4a"/>
<rect x="770.0" y="756.5" width="4.5" height="3.6" fill="#b07a4a"/>
<rect x="774.0" y="757.3" width="3.5" height="3.6" fill="#b07a4a"/>
<rect x="777.0" y="757.1" width="10.5" height="3.6" fill="#b07a4a"/>
<rect x="787.0" y="757.1" width="5.5" height="3.6" fill="#3f8f3f"/>
<rect x="792.0" y="757.3" width="4.5" height="3.6" fill="#a8744a"/>
<rect x="796.0" y="757.3" width="5.5" height="3.6" fill="#3f8f3f"/>
<rect x="801.0" y="757.4" width="10.5" height="3.6" fill="#a8744a"/>
<rect x="811.0" y="757.2" width="10.5" height="3.6" fill="#2f7f3a"/>
<rect x="821.0" y="757.3" width="6.5" height="3.6" fill="#333333"/>
<rect x="827.0" y="757.0" width="3.5" height="3.6" fill="#2f7f3a"/>
<rect x="830.0" y="757.3" width="10.5" height="3.6" fill="#a8744a"/>
<rect x="840.0" y="757.1" width="3.5" height="3.6" fill="#3f8f3f"/>
<rect x="843.0" y="757.2" width="6.5" height="3.6" fill="#b07a4a"/>
<rect x="849.0" y="757.4" width="5.5" height="3.6" fill="#b07a4a"/>
<rect x="854.0" y="757.1" width="12.5" height="3.6" fill="#2f7f3a"/>
<rect x="866.0" y="757.1" width="8.5" height="3.6" fill="#3f8f3f"/>
<rect x="874.0" y="757.3" width="8.5" height="3.6" fill="#b07a4a"/>
<rect x="882.0" y="757.5" width="12.5" height="3.6" fill="#b07a4a"/>
<rect x="894.0" y="757.2" width="4.5" height="3.6" fill="#3f8f3f"/>
<rect x="898.0" y="757.3" width="10.5" height="3.6" fill="#b07a4a"/>
<rect x="908.0" y="757.2" width="3.5" height="3.6" fill="#a8744a"/>
<rect x="911.0" y="756.4" width="10.5" height="3.6" fill="#2f7f3a"/>
<rect x="921.0" y="755.1" width="8.5" height="3.6" fill="#a8744a"/>
<rect x="929.0" y="755.6" width="4.5" height="3.6" fill="#3f8f3f"/>
<rect x="933.0" y="755.9" width="6.5" height="3.6" fill="#b07a4a"/>
<rect x="939.0" y="757.1" width="4.5" height="3.6" fill="#3f8f3f"/>
<rect x="943.0" y="757.0" width="4.5" height="3.6" fill="#b07a4a"/>
<rect x="947.0" y="757.5" width="12.5" height="3.6" fill="#b07a4a"/>
<rect x="959.0" y="757.2" width="5.5" height="3.6" fill="#b07a4a"/>
<rect x="964.0" y="757.2" width="4.5" height="3.6" fill="#3f8f3f"/>
<rect x="968.0" y="757.4" width="6.5" height="3.6" fill="#333333"/>
<rect x="974.0" y="757.6" width="8.5" height="3.6" fill="#b07a4a"/>
<rect x="982.0" y="757.4" width="4.5" height="3.6" fill="#b07a4a"/>
<rect x="986.0" y="757.0" width="12.5" height="3.6" fill="#2f7f3a"/>
<rect x="998.0" y="757.3" width="5.5" height="3.6" fill="#3f8f3f"/>
<rect x="1003.0" y="757.4" width="6.5" height="3.6" fill="#a8744a"/>
<rect x="1009.0" y="757.5" width="8.5" height="3.6" fill="#b07a4a"/>
<rect x="1017.0" y="757.2" width="12.5" height="3.6" fill="#2f7f3a"/>
<rect x="1029.0" y="757.6" width="12.5" height="3.6" fill="#b07a4a"/>
<rect x="1041.0" y="757.5" width="4.5" height="3.6" fill="#b07a4a"/>
<rect x="1045.0" y="757.4" width="3.5" height="3.6" fill="#3f8f3f"/>
<rect x="1048.0" y="756.8" width="4.5" height="3.6" fill="#b07a4a"/>
<rect x="1052.0" y="756.7" width="8.5" height="3.6" fill="#3f8f3f"/>
<rect x="1060.0" y="755.8" width="4.5" height="3.6" fill="#2f7f3a"/>
<rect x="1064.0" y="756.5" width="3.5" height="3.6" fill="#b07a4a"/>
<rect x="1067.0" y="756.8" width="8.5" height="3.6" fill="#3f8f3f"/>
<rect x="1075.0" y="757.5" width="5.5" height="3.6" fill="#2f7f3a"/>
<rect x="1080.0" y="757.4" width="3.5" height="3.6" fill="#a8744a"/>
<rect x="1083.0" y="757.4" width="3.5" height="3.6" fill="#3f8f3f"/>
<rect x="1086.0" y="757.6" width="6.5" height="3.6" fill="#a8744a"/>
<rect x="1092.0" y="757.4" width="5.5" height="3.6" fill="#b07a4a"/>
<rect x="1097.0" y="757.5" width="5.5" height="3.6" fill="#3f8f3f"/>
<rect x="1102.0" y="757.3" width="10.5" height="3.6" fill="#2f7f3a"/>
<rect x="1112.0" y="757.0" width="4.5" height="3.6" fill="#3f8f3f"/>
<rect x="1116.0" y="757.4" width="10.5" height="3.6" fill="#3f8f3f"/>
<rect x="1126.0" y="757.1" width="8.5" height="3.6" fill="#3f8f3f"/>
<rect x="1134.0" y="757.1" width="12.5" height="3.6" fill="#3f8f3f"/>
<rect x="1146.0" y="757.4" width="3.5" height="3.6" fill="#3f8f3f"/>
<rect x="1149.0" y="757.3" width="12.5" height="3.6" fill="#3f8f3f"/>
<rect x="1161.0" y="757.1" width="3.5" height="3.6" fill="#3f8f3f"/>
<rect x="1164.0" y="757.1" width="10.5" height="3.6" fill="#3f8f3f"/>
<rect x="1174.0" y="757.3" width="8.5" height="3.6" fill="#3f8f3f"/>
<rect x="1182.0" y="757.0" width="12.5" height="3.6" fill="#3f8f3f"/>
<rect x="1194.0" y="757.2" width="5.5" height="3.6" fill="#2f7f3a"/>
<rect x="1199.0" y="757.5" width="12.5" height="3.6" fill="#3f8f3f"/>
<rect x="1211.0" y="757.6" width="12.5" height="3.6" fill="#3f8f3f"/>
<rect x="1223.0" y="757.4" width="3.5" height="3.6" fill="#3f8f3f"/>
<rect x="1226.0" y="757.4" width="8.5" height="3.6" fill="#3f8f3f"/>
<rect x="1234.0" y="757.1" width="10.5" height="3.6" fill="#3f8f3f"/>
<rect x="1244" y="756.2" width="453" height="3.4" fill="#2a1414" />
<rect x="1244" y="755.4" width="453" height="1" fill="#c83030" />
<rect x="652.5" y="760" width="2.6" height="40" fill="#bcd9de" />
<rect x="652.0" y="757" width="3.6" height="3" fill="#dfeef0" />
<rect x="784" y="760" width="2.6" height="40" fill="#bcd9de" />
<rect x="783.5" y="757" width="3.6" height="3" fill="#dfeef0" />
<rect x="804.5" y="760" width="2.6" height="40" fill="#bcd9de" />
<rect x="804.0" y="757" width="3.6" height="3" fill="#dfeef0" />
<rect x="940" y="760" width="2.6" height="37" fill="#bcd9de" />
<rect x="939.5" y="757" width="3.6" height="3" fill="#dfeef0" />
<rect x="711.5" y="686.5" width="639" height="81" fill="none" stroke="#e040d0" stroke-width="1"/>
<rect x="1207.5" y="750.5" width="12.5" height="11.5" rx="2.5" fill="#fff" stroke="#111" stroke-width="1.4"/>
<text x="1213.8" y="760.3" font-size="9" fill="#111" text-anchor="middle" font-weight="bold" xml:space="preserve" >I</text>
<polygon points="184.8,771 190.4,782.2 179.20000000000002,782.2" fill="#7df3ee" stroke="#111" stroke-width="1.5" stroke-linejoin="miter"/>
<polygon points="491.2,771 496.8,782.2 485.59999999999997,782.2" fill="#7df3ee" stroke="#111" stroke-width="1.5" stroke-linejoin="miter"/>
<text x="196.6" y="779.6" font-size="10.2" fill="#1414d2" text-anchor="start" font-weight="bold" textLength="29.5" lengthAdjust="spacingAndGlyphs" xml:space="preserve" stroke="#1414d2" stroke-width="0.35">3.6 &gt;&gt;</text>
<text x="131.8" y="799.7" font-size="10.2" fill="#1f8a8a" text-anchor="start" font-weight="bold" textLength="51.4" lengthAdjust="spacingAndGlyphs" xml:space="preserve" stroke="#1f8a8a" stroke-width="0.35">CI11A 0.00</text>
<text x="502.5" y="779.6" font-size="10.2" fill="#1414d2" text-anchor="start" font-weight="bold" textLength="45.3" lengthAdjust="spacingAndGlyphs" xml:space="preserve" stroke="#1414d2" stroke-width="0.35">&gt;&gt; RW11</text>
<text x="444.6" y="799.7" font-size="10.2" fill="#1f8a8a" text-anchor="start" font-weight="bold" textLength="45" lengthAdjust="spacingAndGlyphs" xml:space="preserve" stroke="#1f8a8a" stroke-width="0.35">FI11 0.02</text>
<text x="1203.4" y="779.7" font-size="10.2" fill="#1414c0" text-anchor="start" font-weight="bold" textLength="61.6" lengthAdjust="spacingAndGlyphs" xml:space="preserve" stroke="#1414c0" stroke-width="0.35">SAEZ RW 11</text>
<rect x="1657.2" y="41.8" width="41" height="39.2" rx="3" fill="#4da3ff" stroke="#0a0ac8" stroke-width="1.6"/>
<rect x="1697" y="40" width="6" height="44" fill="#ffffff" />
<rect x="1697" y="41" width="150" height="1" fill="#c9c9c9" />
<rect x="1697" y="81" width="150" height="1" fill="#c9c9c9" />
<text x="1661.3" y="53.4" font-size="9.6" fill="#70829a" text-anchor="start" font-weight="bold" textLength="11.3" lengthAdjust="spacingAndGlyphs" xml:space="preserve" >ST</text>
<text x="1680.7" y="53.4" font-size="9.6" fill="#70829a" text-anchor="start" font-weight="bold" textLength="13" lengthAdjust="spacingAndGlyphs" xml:space="preserve" >BE</text>
<text x="1661.3" y="65.4" font-size="9.6" fill="#70829a" text-anchor="start" font-weight="bold" textLength="11.3" lengthAdjust="spacingAndGlyphs" xml:space="preserve" >LA</text>
<text x="1680.7" y="65.4" font-size="9.6" fill="#70829a" text-anchor="start" font-weight="bold" textLength="13" lengthAdjust="spacingAndGlyphs" xml:space="preserve" >TA</text>
<text x="1661.3" y="77.4" font-size="9.6" fill="#70829a" text-anchor="start" font-weight="bold" textLength="11.3" lengthAdjust="spacingAndGlyphs" xml:space="preserve" >NA</text>
<text x="1680.7" y="77.4" font-size="9.6" fill="#70829a" text-anchor="start" font-weight="bold" textLength="13" lengthAdjust="spacingAndGlyphs" xml:space="preserve" >WI</text>
<text x="729.5" y="53.5" font-size="11" fill="#000" text-anchor="end" font-weight="normal" textLength="41.5" lengthAdjust="spacingAndGlyphs" xml:space="preserve" >AGL RW</text>
<text x="729.5" y="63.5" font-size="11" fill="#000" text-anchor="end" font-weight="normal" textLength="21" lengthAdjust="spacingAndGlyphs" xml:space="preserve" >MSL</text>
<text x="737.5" y="53.5" font-size="11" fill="#000" text-anchor="start" font-weight="normal" textLength="24" lengthAdjust="spacingAndGlyphs" xml:space="preserve" >1500</text>
<text x="737.5" y="63.5" font-size="11" fill="#000" text-anchor="start" font-weight="normal" textLength="24" lengthAdjust="spacingAndGlyphs" xml:space="preserve" >1564</text>
<text x="885.5" y="53.5" font-size="11" fill="#000" text-anchor="start" font-weight="normal" textLength="24" lengthAdjust="spacingAndGlyphs" xml:space="preserve" >1000</text>
<text x="885.5" y="63.5" font-size="11" fill="#000" text-anchor="start" font-weight="normal" textLength="24" lengthAdjust="spacingAndGlyphs" xml:space="preserve" >1064</text>
<text x="1078.5" y="53.5" font-size="11" fill="#000" text-anchor="start" font-weight="normal" textLength="18" lengthAdjust="spacingAndGlyphs" xml:space="preserve" >500</text>
<text x="1078.5" y="63.5" font-size="11" fill="#000" text-anchor="start" font-weight="normal" textLength="18" lengthAdjust="spacingAndGlyphs" xml:space="preserve" >564</text>
<text x="1294.5" y="53.5" font-size="11" fill="#000" text-anchor="start" font-weight="normal" textLength="12.5" lengthAdjust="spacingAndGlyphs" xml:space="preserve" >TD</text>
<text x="890" y="75" font-size="12.6" fill="#1818a8" text-anchor="start" font-weight="normal" textLength="79" lengthAdjust="spacingAndGlyphs" xml:space="preserve" >ElevTrim -1%</text>
<text x="890" y="95" font-size="12.6" fill="#4a96e0" text-anchor="start" font-weight="normal" textLength="75" lengthAdjust="spacingAndGlyphs" xml:space="preserve" >Elevator  3%</text>
<text x="1000" y="75" font-size="12.6" fill="#2e8b2e" text-anchor="start" font-weight="normal" textLength="85" lengthAdjust="spacingAndGlyphs" xml:space="preserve" >V-Speed  -709</text>
<text x="1000" y="157" font-size="12.6" fill="#e020e0" text-anchor="start" font-weight="normal" textLength="66" lengthAdjust="spacingAndGlyphs" xml:space="preserve" >Pitch  -2.1°</text>
<text x="890" y="236.4" font-size="12.6" fill="#b8902a" text-anchor="start" font-weight="normal" textLength="67.5" lengthAdjust="spacingAndGlyphs" xml:space="preserve" >Aileron  0%</text>
<text x="1000" y="236.4" font-size="12.6" fill="#86861e" text-anchor="start" font-weight="normal" textLength="60.5" lengthAdjust="spacingAndGlyphs" xml:space="preserve" >Bank  0.2°</text>
<text x="910" y="266.8" font-size="12.6" fill="#000" text-anchor="start" font-weight="normal" textLength="66.7" lengthAdjust="spacingAndGlyphs" xml:space="preserve" >Wind  270°</text>
<text x="1000" y="266.8" font-size="12.6" fill="#e020e0" text-anchor="start" font-weight="normal" textLength="127.3" lengthAdjust="spacingAndGlyphs" xml:space="preserve" >HDG  113°  CRS  112°</text>
<text x="1000" y="306.6" font-size="12.6" fill="#b03ad0" text-anchor="start" font-weight="normal" textLength="70" lengthAdjust="spacingAndGlyphs" xml:space="preserve" >Rudder  0%</text>
<text x="1000" y="386.6" font-size="12.6" fill="#1414c8" text-anchor="start" font-weight="normal" textLength="88.5" lengthAdjust="spacingAndGlyphs" xml:space="preserve" >Wind  02/270°</text>
<text x="920" y="396.4" font-size="12.6" fill="#c8962a" text-anchor="start" font-weight="normal" textLength="44" lengthAdjust="spacingAndGlyphs" xml:space="preserve" >GSP  76</text>
<text x="924" y="440" font-size="12.6" fill="#4a96e0" text-anchor="start" font-weight="normal" textLength="40" lengthAdjust="spacingAndGlyphs" xml:space="preserve" >IAS  67</text>
<text x="1000" y="476.6" font-size="12.6" fill="#000" text-anchor="start" font-weight="normal" textLength="72" lengthAdjust="spacingAndGlyphs" xml:space="preserve" >Thrust  52%</text>
<text x="1000" y="506.6" font-size="12.6" fill="#b03ad0" text-anchor="start" font-weight="normal" textLength="58.5" lengthAdjust="spacingAndGlyphs" xml:space="preserve" >Flaps  30°</text>
<text x="1000" y="546.6" font-size="12.6" fill="#c8962a" text-anchor="start" font-weight="normal" textLength="73.5" lengthAdjust="spacingAndGlyphs" xml:space="preserve" >Spoilers  0%</text>
<text x="1000" y="586.6" font-size="12.6" fill="#1414c8" text-anchor="start" font-weight="normal" textLength="53" lengthAdjust="spacingAndGlyphs" xml:space="preserve" >AOA  0.8</text>
<text x="1000" y="626.6" font-size="12.6" fill="#8a8a2a" text-anchor="start" font-weight="normal" textLength="80.5" lengthAdjust="spacingAndGlyphs" xml:space="preserve" >G-Force  1.03</text>
<text x="1000" y="657" font-size="12.6" fill="#1818a8" text-anchor="start" font-weight="normal" textLength="112" lengthAdjust="spacingAndGlyphs" xml:space="preserve" >Visiblity  74.84 nm</text>
<text x="1000" y="706.6" font-size="12.6" fill="#e020e0" text-anchor="start" font-weight="normal" textLength="69.5" lengthAdjust="spacingAndGlyphs" xml:space="preserve" >Temp  13°C</text>
<text x="890" y="723.6" font-size="12.6" fill="#000" text-anchor="start" font-weight="normal" textLength="65.6" lengthAdjust="spacingAndGlyphs" xml:space="preserve" >Terrain  56</text>
<text x="819.5" y="744" font-size="12.6" fill="#d42020" text-anchor="start" font-weight="normal" textLength="117" lengthAdjust="spacingAndGlyphs" xml:space="preserve" >MSL  722  AGL  666</text>
<text x="875.5" y="813.5" font-size="12.6" fill="#000" text-anchor="start" font-weight="normal" textLength="101.5" lengthAdjust="spacingAndGlyphs" xml:space="preserve" >L-Time  15:11:32</text>
<text x="874.5" y="826.6" font-size="12.6" fill="#000" text-anchor="start" font-weight="normal" textLength="102.5" lengthAdjust="spacingAndGlyphs" xml:space="preserve" >Z-Time  18:11:32</text>
<text x="1000" y="813.5" font-size="12.6" fill="#000" text-anchor="start" font-weight="normal" textLength="119.3" lengthAdjust="spacingAndGlyphs" xml:space="preserve" >Flight Time  42  min</text>
<text x="1000" y="826.6" font-size="12.6" fill="#000" text-anchor="start" font-weight="normal" textLength="108.7" lengthAdjust="spacingAndGlyphs" xml:space="preserve" >Distance  1.59 nm</text>
<rect x="1268" y="862" width="562" height="14" fill="#cdcdcd" />
<path d="M63.5 866.2 L59.3 869.6 L63.5 873" fill="none" stroke="#4d4d4d" stroke-width="1.8"/>
<path d="M1836.5 866.2 L1840.7 869.6 L1836.5 873" fill="none" stroke="#4d4d4d" stroke-width="1.8"/>
<rect x="66.00" y="880.5" width="1" height="5" fill="#c4c4c4"/>
<rect x="73.88" y="881.5" width="1" height="4" fill="#c4c4c4"/>
<rect x="81.76" y="881.5" width="1" height="4" fill="#c4c4c4"/>
<rect x="89.64" y="881.5" width="1" height="4" fill="#c4c4c4"/>
<rect x="97.52" y="881.5" width="1" height="4" fill="#c4c4c4"/>
<rect x="105.40" y="881.5" width="1" height="4" fill="#c4c4c4"/>
<rect x="113.27" y="881.5" width="1" height="4" fill="#c4c4c4"/>
<rect x="121.15" y="881.5" width="1" height="4" fill="#c4c4c4"/>
<rect x="129.03" y="881.5" width="1" height="4" fill="#c4c4c4"/>
<rect x="136.91" y="881.5" width="1" height="4" fill="#c4c4c4"/>
<rect x="144.79" y="881.5" width="1" height="4" fill="#c4c4c4"/>
<rect x="152.67" y="881.5" width="1" height="4" fill="#c4c4c4"/>
<rect x="160.55" y="881.5" width="1" height="4" fill="#c4c4c4"/>
<rect x="168.43" y="881.5" width="1" height="4" fill="#c4c4c4"/>
<rect x="176.31" y="881.5" width="1" height="4" fill="#c4c4c4"/>
<rect x="184.19" y="881.5" width="1" height="4" fill="#c4c4c4"/>
<rect x="192.06" y="881.5" width="1" height="4" fill="#c4c4c4"/>
<rect x="199.94" y="881.5" width="1" height="4" fill="#c4c4c4"/>
<rect x="207.82" y="881.5" width="1" height="4" fill="#c4c4c4"/>
<rect x="215.70" y="881.5" width="1" height="4" fill="#c4c4c4"/>
<rect x="223.58" y="881.5" width="1" height="4" fill="#c4c4c4"/>
<rect x="231.46" y="881.5" width="1" height="4" fill="#c4c4c4"/>
<rect x="239.34" y="881.5" width="1" height="4" fill="#c4c4c4"/>
<rect x="247.22" y="881.5" width="1" height="4" fill="#c4c4c4"/>
<rect x="255.10" y="881.5" width="1" height="4" fill="#c4c4c4"/>
<rect x="262.98" y="881.5" width="1" height="4" fill="#c4c4c4"/>
<rect x="270.85" y="881.5" width="1" height="4" fill="#c4c4c4"/>
<rect x="278.73" y="881.5" width="1" height="4" fill="#c4c4c4"/>
<rect x="286.61" y="881.5" width="1" height="4" fill="#c4c4c4"/>
<rect x="294.49" y="881.5" width="1" height="4" fill="#c4c4c4"/>
<rect x="302.37" y="881.5" width="1" height="4" fill="#c4c4c4"/>
<rect x="310.25" y="881.5" width="1" height="4" fill="#c4c4c4"/>
<rect x="318.13" y="881.5" width="1" height="4" fill="#c4c4c4"/>
<rect x="326.01" y="881.5" width="1" height="4" fill="#c4c4c4"/>
<rect x="333.89" y="881.5" width="1" height="4" fill="#c4c4c4"/>
<rect x="341.77" y="881.5" width="1" height="4" fill="#c4c4c4"/>
<rect x="349.64" y="881.5" width="1" height="4" fill="#c4c4c4"/>
<rect x="357.52" y="881.5" width="1" height="4" fill="#c4c4c4"/>
<rect x="365.40" y="881.5" width="1" height="4" fill="#c4c4c4"/>
<rect x="373.28" y="881.5" width="1" height="4" fill="#c4c4c4"/>
<rect x="381.16" y="881.5" width="1" height="4" fill="#c4c4c4"/>
<rect x="389.04" y="881.5" width="1" height="4" fill="#c4c4c4"/>
<rect x="396.92" y="881.5" width="1" height="4" fill="#c4c4c4"/>
<rect x="404.80" y="881.5" width="1" height="4" fill="#c4c4c4"/>
<rect x="412.68" y="881.5" width="1" height="4" fill="#c4c4c4"/>
<rect x="420.56" y="881.5" width="1" height="4" fill="#c4c4c4"/>
<rect x="428.43" y="881.5" width="1" height="4" fill="#c4c4c4"/>
<rect x="436.31" y="881.5" width="1" height="4" fill="#c4c4c4"/>
<rect x="444.19" y="881.5" width="1" height="4" fill="#c4c4c4"/>
<rect x="452.07" y="881.5" width="1" height="4" fill="#c4c4c4"/>
<rect x="459.95" y="881.5" width="1" height="4" fill="#c4c4c4"/>
<rect x="467.83" y="881.5" width="1" height="4" fill="#c4c4c4"/>
<rect x="475.71" y="881.5" width="1" height="4" fill="#c4c4c4"/>
<rect x="483.59" y="881.5" width="1" height="4" fill="#c4c4c4"/>
<rect x="491.47" y="881.5" width="1" height="4" fill="#c4c4c4"/>
<rect x="499.35" y="881.5" width="1" height="4" fill="#c4c4c4"/>
<rect x="507.23" y="881.5" width="1" height="4" fill="#c4c4c4"/>
<rect x="515.10" y="881.5" width="1" height="4" fill="#c4c4c4"/>
<rect x="522.98" y="881.5" width="1" height="4" fill="#c4c4c4"/>
<rect x="530.86" y="881.5" width="1" height="4" fill="#c4c4c4"/>
<rect x="538.74" y="881.5" width="1" height="4" fill="#c4c4c4"/>
<rect x="546.62" y="881.5" width="1" height="4" fill="#c4c4c4"/>
<rect x="554.50" y="881.5" width="1" height="4" fill="#c4c4c4"/>
<rect x="562.38" y="881.5" width="1" height="4" fill="#c4c4c4"/>
<rect x="570.26" y="881.5" width="1" height="4" fill="#c4c4c4"/>
<rect x="578.14" y="881.5" width="1" height="4" fill="#c4c4c4"/>
<rect x="586.02" y="881.5" width="1" height="4" fill="#c4c4c4"/>
<rect x="593.89" y="881.5" width="1" height="4" fill="#c4c4c4"/>
<rect x="601.77" y="881.5" width="1" height="4" fill="#c4c4c4"/>
<rect x="609.65" y="881.5" width="1" height="4" fill="#c4c4c4"/>
<rect x="617.53" y="881.5" width="1" height="4" fill="#c4c4c4"/>
<rect x="625.41" y="881.5" width="1" height="4" fill="#c4c4c4"/>
<rect x="633.29" y="881.5" width="1" height="4" fill="#c4c4c4"/>
<rect x="641.17" y="881.5" width="1" height="4" fill="#c4c4c4"/>
<rect x="649.05" y="881.5" width="1" height="4" fill="#c4c4c4"/>
<rect x="656.93" y="881.5" width="1" height="4" fill="#c4c4c4"/>
<rect x="664.81" y="881.5" width="1" height="4" fill="#c4c4c4"/>
<rect x="672.68" y="881.5" width="1" height="4" fill="#c4c4c4"/>
<rect x="680.56" y="881.5" width="1" height="4" fill="#c4c4c4"/>
<rect x="688.44" y="881.5" width="1" height="4" fill="#c4c4c4"/>
<rect x="696.32" y="881.5" width="1" height="4" fill="#c4c4c4"/>
<rect x="704.20" y="881.5" width="1" height="4" fill="#c4c4c4"/>
<rect x="712.08" y="881.5" width="1" height="4" fill="#c4c4c4"/>
<rect x="719.96" y="881.5" width="1" height="4" fill="#c4c4c4"/>
<rect x="727.84" y="881.5" width="1" height="4" fill="#c4c4c4"/>
<rect x="735.72" y="881.5" width="1" height="4" fill="#c4c4c4"/>
<rect x="743.60" y="881.5" width="1" height="4" fill="#c4c4c4"/>
<rect x="751.47" y="881.5" width="1" height="4" fill="#c4c4c4"/>
<rect x="759.35" y="881.5" width="1" height="4" fill="#c4c4c4"/>
<rect x="767.23" y="881.5" width="1" height="4" fill="#c4c4c4"/>
<rect x="775.11" y="881.5" width="1" height="4" fill="#c4c4c4"/>
<rect x="782.99" y="881.5" width="1" height="4" fill="#c4c4c4"/>
<rect x="790.87" y="881.5" width="1" height="4" fill="#c4c4c4"/>
<rect x="798.75" y="881.5" width="1" height="4" fill="#c4c4c4"/>
<rect x="806.63" y="881.5" width="1" height="4" fill="#c4c4c4"/>
<rect x="814.51" y="881.5" width="1" height="4" fill="#c4c4c4"/>
<rect x="822.39" y="881.5" width="1" height="4" fill="#c4c4c4"/>
<rect x="830.26" y="881.5" width="1" height="4" fill="#c4c4c4"/>
<rect x="838.14" y="881.5" width="1" height="4" fill="#c4c4c4"/>
<rect x="846.02" y="881.5" width="1" height="4" fill="#c4c4c4"/>
<rect x="853.90" y="881.5" width="1" height="4" fill="#c4c4c4"/>
<rect x="861.78" y="881.5" width="1" height="4" fill="#c4c4c4"/>
<rect x="869.66" y="881.5" width="1" height="4" fill="#c4c4c4"/>
<rect x="877.54" y="881.5" width="1" height="4" fill="#c4c4c4"/>
<rect x="885.42" y="881.5" width="1" height="4" fill="#c4c4c4"/>
<rect x="893.30" y="881.5" width="1" height="4" fill="#c4c4c4"/>
<rect x="901.18" y="881.5" width="1" height="4" fill="#c4c4c4"/>
<rect x="909.05" y="881.5" width="1" height="4" fill="#c4c4c4"/>
<rect x="916.93" y="881.5" width="1" height="4" fill="#c4c4c4"/>
<rect x="924.81" y="881.5" width="1" height="4" fill="#c4c4c4"/>
<rect x="932.69" y="881.5" width="1" height="4" fill="#c4c4c4"/>
<rect x="940.57" y="881.5" width="1" height="4" fill="#c4c4c4"/>
<rect x="948.45" y="881.5" width="1" height="4" fill="#c4c4c4"/>
<rect x="956.33" y="881.5" width="1" height="4" fill="#c4c4c4"/>
<rect x="964.21" y="881.5" width="1" height="4" fill="#c4c4c4"/>
<rect x="972.09" y="881.5" width="1" height="4" fill="#c4c4c4"/>
<rect x="979.97" y="881.5" width="1" height="4" fill="#c4c4c4"/>
<rect x="987.85" y="881.5" width="1" height="4" fill="#c4c4c4"/>
<rect x="995.72" y="881.5" width="1" height="4" fill="#c4c4c4"/>
<rect x="1003.60" y="881.5" width="1" height="4" fill="#c4c4c4"/>
<rect x="1011.48" y="881.5" width="1" height="4" fill="#c4c4c4"/>
<rect x="1019.36" y="881.5" width="1" height="4" fill="#c4c4c4"/>
<rect x="1027.24" y="881.5" width="1" height="4" fill="#c4c4c4"/>
<rect x="1035.12" y="881.5" width="1" height="4" fill="#c4c4c4"/>
<rect x="1043.00" y="881.5" width="1" height="4" fill="#c4c4c4"/>
<rect x="1050.88" y="881.5" width="1" height="4" fill="#c4c4c4"/>
<rect x="1058.76" y="881.5" width="1" height="4" fill="#c4c4c4"/>
<rect x="1066.64" y="881.5" width="1" height="4" fill="#c4c4c4"/>
<rect x="1074.51" y="881.5" width="1" height="4" fill="#c4c4c4"/>
<rect x="1082.39" y="881.5" width="1" height="4" fill="#c4c4c4"/>
<rect x="1090.27" y="881.5" width="1" height="4" fill="#c4c4c4"/>
<rect x="1098.15" y="881.5" width="1" height="4" fill="#c4c4c4"/>
<rect x="1106.03" y="881.5" width="1" height="4" fill="#c4c4c4"/>
<rect x="1113.91" y="881.5" width="1" height="4" fill="#c4c4c4"/>
<rect x="1121.79" y="881.5" width="1" height="4" fill="#c4c4c4"/>
<rect x="1129.67" y="881.5" width="1" height="4" fill="#c4c4c4"/>
<rect x="1137.55" y="881.5" width="1" height="4" fill="#c4c4c4"/>
<rect x="1145.43" y="881.5" width="1" height="4" fill="#c4c4c4"/>
<rect x="1153.30" y="881.5" width="1" height="4" fill="#c4c4c4"/>
<rect x="1161.18" y="881.5" width="1" height="4" fill="#c4c4c4"/>
<rect x="1169.06" y="881.5" width="1" height="4" fill="#c4c4c4"/>
<rect x="1176.94" y="881.5" width="1" height="4" fill="#c4c4c4"/>
<rect x="1184.82" y="881.5" width="1" height="4" fill="#c4c4c4"/>
<rect x="1192.70" y="881.5" width="1" height="4" fill="#c4c4c4"/>
<rect x="1200.58" y="881.5" width="1" height="4" fill="#c4c4c4"/>
<rect x="1208.46" y="881.5" width="1" height="4" fill="#c4c4c4"/>
<rect x="1216.34" y="881.5" width="1" height="4" fill="#c4c4c4"/>
<rect x="1224.22" y="881.5" width="1" height="4" fill="#c4c4c4"/>
<rect x="1232.09" y="881.5" width="1" height="4" fill="#c4c4c4"/>
<rect x="1239.97" y="881.5" width="1" height="4" fill="#c4c4c4"/>
<rect x="1247.85" y="881.5" width="1" height="4" fill="#c4c4c4"/>
<rect x="1255.73" y="881.5" width="1" height="4" fill="#c4c4c4"/>
<rect x="1263.61" y="881.5" width="1" height="4" fill="#c4c4c4"/>
<rect x="1271.49" y="881.5" width="1" height="4" fill="#c4c4c4"/>
<rect x="1279.37" y="881.5" width="1" height="4" fill="#c4c4c4"/>
<rect x="1287.25" y="881.5" width="1" height="4" fill="#c4c4c4"/>
<rect x="1295.13" y="881.5" width="1" height="4" fill="#c4c4c4"/>
<rect x="1303.01" y="881.5" width="1" height="4" fill="#c4c4c4"/>
<rect x="1310.88" y="881.5" width="1" height="4" fill="#c4c4c4"/>
<rect x="1318.76" y="881.5" width="1" height="4" fill="#c4c4c4"/>
<rect x="1326.64" y="881.5" width="1" height="4" fill="#c4c4c4"/>
<rect x="1334.52" y="881.5" width="1" height="4" fill="#c4c4c4"/>
<rect x="1342.40" y="881.5" width="1" height="4" fill="#c4c4c4"/>
<rect x="1350.28" y="881.5" width="1" height="4" fill="#c4c4c4"/>
<rect x="1358.16" y="881.5" width="1" height="4" fill="#c4c4c4"/>
<rect x="1366.04" y="881.5" width="1" height="4" fill="#c4c4c4"/>
<rect x="1373.92" y="881.5" width="1" height="4" fill="#c4c4c4"/>
<rect x="1381.80" y="881.5" width="1" height="4" fill="#c4c4c4"/>
<rect x="1389.67" y="881.5" width="1" height="4" fill="#c4c4c4"/>
<rect x="1397.55" y="881.5" width="1" height="4" fill="#c4c4c4"/>
<rect x="1405.43" y="881.5" width="1" height="4" fill="#c4c4c4"/>
<rect x="1413.31" y="881.5" width="1" height="4" fill="#c4c4c4"/>
<rect x="1421.19" y="881.5" width="1" height="4" fill="#c4c4c4"/>
<rect x="1429.07" y="881.5" width="1" height="4" fill="#c4c4c4"/>
<rect x="1436.95" y="881.5" width="1" height="4" fill="#c4c4c4"/>
<rect x="1444.83" y="881.5" width="1" height="4" fill="#c4c4c4"/>
<rect x="1452.71" y="881.5" width="1" height="4" fill="#c4c4c4"/>
<rect x="1460.59" y="881.5" width="1" height="4" fill="#c4c4c4"/>
<rect x="1468.47" y="881.5" width="1" height="4" fill="#c4c4c4"/>
<rect x="1476.34" y="881.5" width="1" height="4" fill="#c4c4c4"/>
<rect x="1484.22" y="881.5" width="1" height="4" fill="#c4c4c4"/>
<rect x="1492.10" y="881.5" width="1" height="4" fill="#c4c4c4"/>
<rect x="1499.98" y="881.5" width="1" height="4" fill="#c4c4c4"/>
<rect x="1507.86" y="881.5" width="1" height="4" fill="#c4c4c4"/>
<rect x="1515.74" y="881.5" width="1" height="4" fill="#c4c4c4"/>
<rect x="1523.62" y="881.5" width="1" height="4" fill="#c4c4c4"/>
<rect x="1531.50" y="881.5" width="1" height="4" fill="#c4c4c4"/>
<rect x="1539.38" y="881.5" width="1" height="4" fill="#c4c4c4"/>
<rect x="1547.26" y="881.5" width="1" height="4" fill="#c4c4c4"/>
<rect x="1555.13" y="881.5" width="1" height="4" fill="#c4c4c4"/>
<rect x="1563.01" y="881.5" width="1" height="4" fill="#c4c4c4"/>
<rect x="1570.89" y="881.5" width="1" height="4" fill="#c4c4c4"/>
<rect x="1578.77" y="881.5" width="1" height="4" fill="#c4c4c4"/>
<rect x="1586.65" y="881.5" width="1" height="4" fill="#c4c4c4"/>
<rect x="1594.53" y="881.5" width="1" height="4" fill="#c4c4c4"/>
<rect x="1602.41" y="881.5" width="1" height="4" fill="#c4c4c4"/>
<rect x="1610.29" y="881.5" width="1" height="4" fill="#c4c4c4"/>
<rect x="1618.17" y="881.5" width="1" height="4" fill="#c4c4c4"/>
<rect x="1626.05" y="881.5" width="1" height="4" fill="#c4c4c4"/>
<rect x="1633.92" y="881.5" width="1" height="4" fill="#c4c4c4"/>
<rect x="1641.80" y="881.5" width="1" height="4" fill="#c4c4c4"/>
<rect x="1649.68" y="881.5" width="1" height="4" fill="#c4c4c4"/>
<rect x="1657.56" y="881.5" width="1" height="4" fill="#c4c4c4"/>
<rect x="1665.44" y="881.5" width="1" height="4" fill="#c4c4c4"/>
<rect x="1673.32" y="881.5" width="1" height="4" fill="#c4c4c4"/>
<rect x="1681.20" y="881.5" width="1" height="4" fill="#c4c4c4"/>
<rect x="1689.08" y="881.5" width="1" height="4" fill="#c4c4c4"/>
<rect x="1696.96" y="881.5" width="1" height="4" fill="#c4c4c4"/>
<rect x="1704.84" y="881.5" width="1" height="4" fill="#c4c4c4"/>
<rect x="1712.71" y="881.5" width="1" height="4" fill="#c4c4c4"/>
<rect x="1720.59" y="881.5" width="1" height="4" fill="#c4c4c4"/>
<rect x="1728.47" y="881.5" width="1" height="4" fill="#c4c4c4"/>
<rect x="1736.35" y="881.5" width="1" height="4" fill="#c4c4c4"/>
<rect x="1744.23" y="881.5" width="1" height="4" fill="#c4c4c4"/>
<rect x="1752.11" y="881.5" width="1" height="4" fill="#c4c4c4"/>
<rect x="1759.99" y="881.5" width="1" height="4" fill="#c4c4c4"/>
<rect x="1767.87" y="881.5" width="1" height="4" fill="#c4c4c4"/>
<rect x="1775.75" y="881.5" width="1" height="4" fill="#c4c4c4"/>
<rect x="1783.63" y="881.5" width="1" height="4" fill="#c4c4c4"/>
<rect x="1791.50" y="881.5" width="1" height="4" fill="#c4c4c4"/>
<rect x="1799.38" y="881.5" width="1" height="4" fill="#c4c4c4"/>
<rect x="1807.26" y="881.5" width="1" height="4" fill="#c4c4c4"/>
<rect x="1815.14" y="881.5" width="1" height="4" fill="#c4c4c4"/>
<rect x="1823.02" y="881.5" width="1" height="4" fill="#c4c4c4"/>
<rect x="1830.90" y="880.5" width="1" height="5" fill="#c4c4c4"/>
<rect x="61.5" y="894.5" width="1775" height="3.5" fill="#e7e7e7" stroke="#d6d6d6" stroke-width="1"/>
<polygon points="1555.5,905 1555.5,891.5 1561.3,886 1567,891.5 1567,905" fill="#0078d7"/>
<text x="95.5" y="947.2" font-size="12" fill="#000" text-anchor="end" font-weight="bold" textLength="41" lengthAdjust="spacingAndGlyphs" xml:space="preserve" >Frame :</text>
<text x="105.2" y="948" font-size="12" fill="#000" text-anchor="start" font-weight="bold" textLength="27.4" lengthAdjust="spacingAndGlyphs" xml:space="preserve" >4757</text>
<text x="95.5" y="971" font-size="12" fill="#000" text-anchor="end" font-weight="bold" textLength="76" lengthAdjust="spacingAndGlyphs" xml:space="preserve" >Total Frames :</text>
<text x="105.2" y="972" font-size="12" fill="#000" text-anchor="start" font-weight="bold" textLength="27.4" lengthAdjust="spacingAndGlyphs" xml:space="preserve" >5466</text>
<rect x="20.5" y="990.5" width="107" height="20" fill="#e1e1e1" stroke="#adadad" stroke-width="1"/>
<text x="74.0" y="1003.8" font-size="12" fill="#000" text-anchor="middle" font-weight="normal" textLength="73.2" lengthAdjust="spacingAndGlyphs" xml:space="preserve" >Show AGL line</text>
<text x="165.3" y="947.2" font-size="12" fill="#000" text-anchor="start" font-weight="bold" textLength="201.2" lengthAdjust="spacingAndGlyphs" xml:space="preserve" >Cessna Skyhawk G1000 Asobo Green</text>
<defs>
<radialGradient id="pg" cx="0.48" cy="0.55" r="0.72"><stop offset="0" stop-color="#d8d8d8"/><stop offset="0.55" stop-color="#c6c6c6"/><stop offset="1" stop-color="#979797"/></radialGradient>
<linearGradient id="pf" x1="0" y1="0" x2="0" y2="1"><stop offset="0" stop-color="#b4b4b4" stop-opacity="0.9"/><stop offset="0.45" stop-color="#cfcfcf" stop-opacity="0.2"/><stop offset="0.55" stop-color="#dcdcdc" stop-opacity="0.8"/><stop offset="1" stop-color="#d4d4d4" stop-opacity="0.7"/></linearGradient>
<clipPath id="pc"><rect x="166" y="956" width="140" height="60"/></clipPath>
</defs>
<g clip-path="url(#pc)">
<rect x="166" y="956" width="140" height="60" fill="url(#pg)" />
<rect x="166" y="956" width="140" height="60" fill="url(#pf)" />
<ellipse cx="212" cy="1001" rx="22" ry="3" fill="#b0b0b0" opacity="0.6"/>
<ellipse cx="236" cy="1006" rx="26" ry="4" fill="#b8b8b8" opacity="0.5"/>
<polygon points="217,963 219.5,962.5 221.5,975.5 218.5,975.5" fill="#4cb020"/>
<polygon points="166,973.6 236,976.4 299,972.4 299.5,974.6 236,979 166,975.8" fill="#f6f6f6"/>
<path d="M205 978 L229 1001 M267 977 L241 1003" stroke="#e2e2e2" stroke-width="0.9" fill="none"/>
<polygon points="219,978 247,978 250,992 238,1003 228,999" fill="#7f8a94"/>
<polygon points="233,976.5 246,976.5 246,984 235,986" fill="#2a2a26"/>
<ellipse cx="244" cy="992" rx="8.5" ry="10" fill="#86d01c"/>
<ellipse cx="246.5" cy="997" rx="5" ry="6" fill="#b4e04a" opacity="0.8"/>
<ellipse cx="246" cy="991" rx="4" ry="2.6" fill="#222"/>
<path d="M255.5 979 L240 1006" stroke="#4a4a4a" stroke-width="1.1"/>
<path d="M229 999 L219 1006 M240 1003 L243 1010 M247 1001 L251 1006" stroke="#666" stroke-width="1"/>
<rect x="217" y="1003" width="3.4" height="7" rx="1.5" fill="#f2f2f2"/><rect x="241.3" y="1006" width="3.4" height="7.5" rx="1.5" fill="#eee"/><rect x="249.5" y="1002" width="3" height="6" rx="1.5" fill="#f2f2f2"/>
<rect x="217.6" y="1009" width="2.6" height="1.8" fill="#222"/><rect x="241.8" y="1012.3" width="2.6" height="1.8" fill="#222"/><rect x="249.8" y="1007" width="2.4" height="1.6" fill="#222"/>
</g>
<text x="389.3" y="973" font-size="12" fill="#000" text-anchor="end" font-weight="bold" textLength="49" lengthAdjust="spacingAndGlyphs" xml:space="preserve" >AutoPilot</text>
<circle cx="400" cy="968.2" r="5.7" fill="#5a9a12" stroke="#2f4f0c" stroke-width="1.4"/>
<text x="389.8" y="1000" font-size="12" fill="#000" text-anchor="end" font-weight="bold" textLength="60" lengthAdjust="spacingAndGlyphs" xml:space="preserve" >AutoThrust</text>
<circle cx="400" cy="995.2" r="5.7" fill="#5a9a12" stroke="#2f4f0c" stroke-width="1.4"/>
<text x="390.5" y="1024.8" font-size="12" fill="#000" text-anchor="end" font-weight="bold" textLength="26" lengthAdjust="spacingAndGlyphs" xml:space="preserve" >Gear</text>
<circle cx="400" cy="1020.2" r="5.7" fill="#4cf01c" stroke="#1f5a10" stroke-width="1.4"/>
<text x="496" y="973" font-size="12" fill="#000" text-anchor="end" font-weight="bold" textLength="23.6" lengthAdjust="spacingAndGlyphs" xml:space="preserve" >Stall</text>
<circle cx="507.1" cy="968.2" r="5.7" fill="#8f1414" stroke="#4a0a0a" stroke-width="1.4"/>
<text x="496" y="1000" font-size="12" fill="#000" text-anchor="end" font-weight="bold" textLength="53.7" lengthAdjust="spacingAndGlyphs" xml:space="preserve" >Ovespeed</text>
<circle cx="507.1" cy="995.2" r="5.7" fill="#8f1414" stroke="#4a0a0a" stroke-width="1.4"/>
<text x="496" y="1025.6" font-size="12" fill="#000" text-anchor="end" font-weight="bold" textLength="21" lengthAdjust="spacingAndGlyphs" xml:space="preserve" >hPa</text>
<circle cx="507.1" cy="1021.2" r="5.7" fill="#4cf01c" stroke="#1f5a10" stroke-width="1.4"/>
<text x="605.5" y="973" font-size="12" fill="#000" text-anchor="end" font-weight="bold" textLength="43" lengthAdjust="spacingAndGlyphs" xml:space="preserve" >Latitude</text>
<text x="605.5" y="1000" font-size="12" fill="#000" text-anchor="end" font-weight="bold" textLength="53.2" lengthAdjust="spacingAndGlyphs" xml:space="preserve" >Longitude</text>
<text x="605.5" y="1026" font-size="12" fill="#000" text-anchor="end" font-weight="bold" textLength="64.2" lengthAdjust="spacingAndGlyphs" xml:space="preserve" >Plane \ ATC</text>
<rect x="609.5" y="959.5" width="109" height="19" fill="#ffffff" stroke="#7a7a7a" stroke-width="1"/>
<rect x="611" y="961" width="106" height="16" fill="#b9c9dc"/>
<text x="611.6" y="973.2" font-size="12" fill="#3c4450" text-anchor="start" font-weight="normal" textLength="95.5" lengthAdjust="spacingAndGlyphs" xml:space="preserve" >-34.8139228820801</text>
<rect x="609.5" y="986.5" width="109" height="19" fill="#ffffff" stroke="#7a7a7a" stroke-width="1"/>
<rect x="611" y="988" width="106" height="16" fill="#b9c9dc"/>
<text x="611.6" y="1000.2" font-size="12" fill="#3c4450" text-anchor="start" font-weight="normal" textLength="96" lengthAdjust="spacingAndGlyphs" xml:space="preserve" >-58.5816650390625</text>
<rect x="609.5" y="1012.5" width="49" height="19" fill="#ffffff" stroke="#7a7a7a" stroke-width="1"/>
<rect x="611" y="1014" width="46" height="16" fill="#b9c9dc"/>
<text x="634.0" y="1026.2" font-size="12" fill="#3c4450" text-anchor="middle" font-weight="normal" textLength="23" lengthAdjust="spacingAndGlyphs" xml:space="preserve" >1014</text>
<rect x="669.5" y="1012.5" width="49" height="19" fill="#ffffff" stroke="#7a7a7a" stroke-width="1"/>
<rect x="671" y="1014" width="46" height="16" fill="#b9c9dc"/>
<text x="694.0" y="1026.2" font-size="12" fill="#3c4450" text-anchor="middle" font-weight="normal" textLength="23" lengthAdjust="spacingAndGlyphs" xml:space="preserve" >1013</text>
<rect x="610.5" y="1039.5" width="107" height="20" fill="#e1e1e1" stroke="#adadad" stroke-width="1"/>
<text x="664.0" y="1052.8" font-size="12" fill="#000" text-anchor="middle" font-weight="normal" textLength="52.8" lengthAdjust="spacingAndGlyphs" xml:space="preserve" >Show inHg</text>
<rect x="166.5" y="1039.5" width="299" height="90.5" fill="none" stroke="#dcdcdc" stroke-width="1"/>
<rect x="173" y="1034" width="70" height="12" fill="#f0f0f0" />
<text x="175" y="1044" font-size="13.5" fill="#000" text-anchor="start" font-weight="bold" textLength="66" lengthAdjust="spacingAndGlyphs" xml:space="preserve" text-decoration="underline">WayPoints</text>
<rect x="175" y="1045.6" width="66" height="1.2" fill="#000" />
<text x="316" y="1062.6" font-size="12" fill="#000" text-anchor="end" font-weight="normal" textLength="63" lengthAdjust="spacingAndGlyphs" xml:space="preserve" >VOR or NDB</text>
<text x="316.5" y="1082" font-size="12" fill="#000" text-anchor="end" font-weight="normal" textLength="57.5" lengthAdjust="spacingAndGlyphs" xml:space="preserve" >Intersection</text>
<text x="319.6" y="1101.8" font-size="12" fill="#000" text-anchor="end" font-weight="normal" textLength="136.6" lengthAdjust="spacingAndGlyphs" xml:space="preserve" >VOR or NDB or Intersection</text>
<text x="317.2" y="1121.6" font-size="12" fill="#000" text-anchor="end" font-weight="normal" textLength="33.3" lengthAdjust="spacingAndGlyphs" xml:space="preserve" >Airport</text>
<text x="430.8" y="1062.6" font-size="12" fill="#000" text-anchor="end" font-weight="normal" textLength="23.8" lengthAdjust="spacingAndGlyphs" xml:space="preserve" >VOR</text>
<text x="430.2" y="1082" font-size="12" fill="#000" text-anchor="end" font-weight="normal" textLength="23" lengthAdjust="spacingAndGlyphs" xml:space="preserve" >NDB</text>
<text x="433" y="1101.8" font-size="12" fill="#000" text-anchor="end" font-weight="normal" textLength="38" lengthAdjust="spacingAndGlyphs" xml:space="preserve" >Custom</text>
<text x="432" y="1121.6" font-size="12" fill="#000" text-anchor="end" font-weight="normal" textLength="28" lengthAdjust="spacingAndGlyphs" xml:space="preserve" >Other</text>
<rect x="325.9" y="1052.8" width="12.2" height="12.2" rx="3" fill="#40c0e8" stroke="#0a0a0a" stroke-width="1.6"/><circle cx="332" cy="1058.9" r="4.3" fill="#f03044"/>
<g fill="#0a0a0a"><rect x="330.4" y="1052.2" width="3.2" height="1.6"/><rect x="330.4" y="1064" width="3.2" height="1.6"/><rect x="325.2" y="1057.3" width="1.6" height="3.2"/><rect x="337.2" y="1057.3" width="1.6" height="3.2"/></g>
<polygon points="332,1073.4 337.4,1083.6 326.6,1083.6" fill="#72f2e2" stroke="#0a0a0a" stroke-width="1.8" stroke-linejoin="miter"/>
<rect x="326.1" y="1091.4" width="12.4" height="12.6" rx="1" fill="#76f0ea" stroke="#56c4da" stroke-width="1"/>
<polygon points="332,1093.8 336.2,1102.6 327.8,1102.6" fill="#76f0ea" stroke="#1f6464" stroke-width="1.3" stroke-linejoin="miter"/><ellipse cx="332" cy="1099.6" rx="2.2" ry="2.8" fill="#f284c2"/>
<rect x="325.7" y="1111.8" width="12.8" height="12.6" rx="3.2" fill="#1212d2" stroke="#06067a" stroke-width="1.2"/><path d="M328.4 1114.6 L335.8 1121.6 M335.8 1114.6 L328.4 1121.6" stroke="#fff" stroke-width="2.6"/>
<rect x="442" y="1052.9" width="12" height="12" rx="5" fill="#40c8f0" stroke="#0a0a0a" stroke-width="1.8"/><circle cx="448" cy="1058.9" r="3.3" fill="none" stroke="#0a4a7a" stroke-width="1"/><circle cx="448" cy="1058.9" r="1.8" fill="#050510"/>
<circle cx="448" cy="1077.7" r="6.2" fill="#e2525c" stroke="#1a0508" stroke-width="1.3"/><circle cx="448" cy="1077.7" r="3.9" fill="none" stroke="#5a1018" stroke-width="1"/><rect x="446.4" y="1076.1" width="3.2" height="3.2" fill="#120404"/>
<rect x="443" y="1092.9" width="10" height="9.9" rx="2.2" fill="#ffb010" stroke="#0a0a0a" stroke-width="1.9"/>
<circle cx="448" cy="1117.7" r="4.4" fill="#f232e2" stroke="#8a1a8a" stroke-width="0.9"/>
<text x="571.9" y="1063.8" font-size="12" fill="#000" text-anchor="end" font-weight="normal" textLength="98" lengthAdjust="spacingAndGlyphs" xml:space="preserve" >Cleared for TakeOff</text>
<text x="569.7" y="1082.6" font-size="12" fill="#000" text-anchor="end" font-weight="normal" textLength="77.6" lengthAdjust="spacingAndGlyphs" xml:space="preserve" >Cleared to Land</text>
<text x="567.9" y="1103.4" font-size="12" fill="#000" text-anchor="end" font-weight="normal" textLength="61.5" lengthAdjust="spacingAndGlyphs" xml:space="preserve" >Entering RW</text>
<text x="570" y="1123.2" font-size="12" fill="#000" text-anchor="end" font-weight="normal" textLength="63" lengthAdjust="spacingAndGlyphs" xml:space="preserve" >Clearing RW</text>
<rect x="578" y="1052" width="11.2" height="4.7" rx="0.8" fill="#1228e0"/>
<rect x="579.9" y="1053.3" width="1.2" height="2" fill="#e6ecff"/>
<rect x="582.3" y="1053.3" width="1.2" height="2" fill="#e6ecff"/>
<rect x="584.7" y="1053.3" width="1.2" height="2" fill="#e6ecff"/>
<rect x="587.1" y="1053.3" width="1.2" height="2" fill="#e6ecff"/>
<rect x="580.9" y="1056.5" width="3.4" height="9.3" fill="#1228e0"/>
<path d="M584.6 1065.2 L590.6 1059.2" stroke="#1a8a12" stroke-width="2.2"/><path d="M585 1058.9 H591 V1065" fill="none" stroke="#1a8a12" stroke-width="2.2"/>
<rect x="578" y="1072" width="11.2" height="4.7" rx="0.8" fill="#1228e0"/>
<rect x="579.9" y="1073.3" width="1.2" height="2" fill="#e6ecff"/>
<rect x="582.3" y="1073.3" width="1.2" height="2" fill="#e6ecff"/>
<rect x="584.7" y="1073.3" width="1.2" height="2" fill="#e6ecff"/>
<rect x="587.1" y="1073.3" width="1.2" height="2" fill="#e6ecff"/>
<rect x="580.9" y="1076.5" width="3.4" height="9.3" fill="#1228e0"/>
<path d="M584.6 1078.6 L590.6 1084.6" stroke="#1a8a12" stroke-width="2.2"/><path d="M591 1078.8 V1085 H585" fill="none" stroke="#1a8a12" stroke-width="2.2"/>
<path d="M578.4 1103.4 C582.6 1102.8 585.8 1099 585.6 1094" fill="none" stroke="#1222e6" stroke-width="3"/><path d="M580 1097.4 L585.6 1092.2 L591.2 1097.4" fill="none" stroke="#1222e6" stroke-width="3" stroke-linejoin="miter"/>
<g transform="translate(0,0)"><path d="M578.4 1112.4 C583 1113 585.8 1117 585.6 1121.6" fill="none" stroke="#1222e6" stroke-width="3"/><path d="M580 1118.2 L585.6 1123.4 L591.2 1118.2" fill="none" stroke="#1222e6" stroke-width="3" stroke-linejoin="miter"/></g>
<g transform="translate(765.8,-338.8)"><path d="M578.4 1112.4 C583 1113 585.8 1117 585.6 1121.6" fill="none" stroke="#1222e6" stroke-width="3"/><path d="M580 1118.2 L585.6 1123.4 L591.2 1118.2" fill="none" stroke="#1222e6" stroke-width="3" stroke-linejoin="miter"/></g>
<text x="616" y="1121.6" font-size="12" fill="#000" text-anchor="start" font-weight="normal" textLength="51" lengthAdjust="spacingAndGlyphs" xml:space="preserve" >User Input</text>
<text x="671.6" y="1121.6" font-size="12" fill="#3030c0" text-anchor="start" font-weight="normal" textLength="9.6" lengthAdjust="spacingAndGlyphs" xml:space="preserve" >|&gt;</text>
<circle cx="774.9" cy="994" r="43.6" fill="none" stroke="#d3d3d3" stroke-width="2"/>
<circle cx="875.5" cy="993.4" r="43.7" fill="none" stroke="#d3d3d3" stroke-width="2"/>
<text x="874.4" y="942.8" font-size="12" fill="#1414d2" text-anchor="middle" font-weight="bold" textLength="9" lengthAdjust="spacingAndGlyphs" xml:space="preserve" >N</text>
<text x="809" y="959.4" font-size="12.5" fill="#e020e0" text-anchor="start" font-weight="bold" textLength="27" lengthAdjust="spacingAndGlyphs" xml:space="preserve" >-2.1°</text>
<text x="913.9" y="959.8" font-size="12.5" fill="#e020e0" text-anchor="start" font-weight="bold" textLength="25" lengthAdjust="spacingAndGlyphs" xml:space="preserve" >113°</text>
<text x="812.2" y="1037.2" font-size="12.5" fill="#1414d2" text-anchor="start" font-weight="bold" textLength="32.2" lengthAdjust="spacingAndGlyphs" xml:space="preserve" >2 Knt.</text>
<text x="913.9" y="1037.2" font-size="12.5" fill="#1414d2" text-anchor="start" font-weight="bold" textLength="25" lengthAdjust="spacingAndGlyphs" xml:space="preserve" >270°</text>
<rect x="732" y="992.6" width="23.5" height="1.6" fill="#2e9a3e" />
<rect x="732" y="994.2" width="23.5" height="1.6" fill="#7a2020" />
<rect x="797" y="993.6" width="21.5" height="1.8" fill="#2e9a3e" />
<g transform="translate(759.3,982.6)"><path d="M1 3 L4.5 3 L7.5 8.5 L28 8.5 C33 8.8 35 11 34.5 13 C34 15.5 31 16.2 27 16.2 L8 16.2 C4 16 2 13 1.5 9 Z" fill="#8fd6f2"/><path d="M12 8.5 L9 2.5 L12.5 2.5 L21 8.5 Z" fill="#6aa8e6"/><path d="M14 13.5 L23.5 13.5 L13 23 L8.5 23 Z" fill="#5f9fe2"/></g>
<line x1="833.8" y1="994.6" x2="845" y2="994.6" stroke="#1f5a32" stroke-width="1.8"/><polygon points="851.4,994.6 844,989.8 844,999.4" fill="#2f9e4f" stroke="#1f5a32" stroke-width="0.8"/>
<line x1="836.5" y1="978" x2="857" y2="986.4" stroke="#5a1414" stroke-width="1.9"/><line x1="896.8" y1="1003" x2="917.4" y2="1011.2" stroke="#5a1414" stroke-width="1.9"/>
<line x1="836.5" y1="978" x2="857" y2="986.4" stroke="#2e9a3e" stroke-width="0.7" stroke-dasharray="1 2"/><line x1="896.8" y1="1003" x2="917.4" y2="1011.2" stroke="#2e9a3e" stroke-width="0.7" stroke-dasharray="1 2"/>
<g transform="translate(876.6,997.6) rotate(12)"><path d="M-14 -3.6 L9 -3.6 C14.5 -3.6 17 -1.6 17 0 C17 1.6 14.5 3.6 9 3.6 L-14 3.6 C-16.5 3 -16.5 -3 -14 -3.6 Z" fill="#2cb2f2"/><path d="M-3 -3 L-1.5 -19 L3 -19 L6.5 -3 Z" fill="#1e92e4"/><path d="M-3 3 L-11 15.5 L-6.5 15.5 L6.5 3 Z" fill="#2498ea"/><path d="M-14 -3 L-14.5 -10.5 L-11.5 -10.5 L-9 -3 Z M-14 3 L-17 6 L-14.5 6.5 L-10 3 Z" fill="#2498ea"/></g>
<rect x="976.5" y="950.5" width="122" height="20" fill="#e1e1e1" stroke="#adadad" stroke-width="1"/>
<text x="1037.5" y="963.8" font-size="12" fill="#000" text-anchor="middle" font-weight="normal" textLength="53.2" lengthAdjust="spacingAndGlyphs" xml:space="preserve" >Stop Scroll</text>
<rect x="983.5" y="987.5" width="108" height="3.2" fill="#e7e7e7" stroke="#d6d6d6" stroke-width="1"/>
<polygon points="985,981.2 996.3,981.2 996.3,994.6 990.6,1000.2 985,994.6" fill="#0078d7"/>
<rect x="987.50" y="1001" width="1" height="4" fill="#c4c4c4"/>
<rect x="989.98" y="1001" width="1" height="3.4" fill="#c4c4c4"/>
<rect x="992.45" y="1001" width="1" height="3.4" fill="#c4c4c4"/>
<rect x="994.92" y="1001" width="1" height="3.4" fill="#c4c4c4"/>
<rect x="997.40" y="1001" width="1" height="3.4" fill="#c4c4c4"/>
<rect x="999.88" y="1001" width="1" height="3.4" fill="#c4c4c4"/>
<rect x="1002.35" y="1001" width="1" height="3.4" fill="#c4c4c4"/>
<rect x="1004.83" y="1001" width="1" height="3.4" fill="#c4c4c4"/>
<rect x="1007.30" y="1001" width="1" height="3.4" fill="#c4c4c4"/>
<rect x="1009.77" y="1001" width="1" height="3.4" fill="#c4c4c4"/>
<rect x="1012.25" y="1001" width="1" height="3.4" fill="#c4c4c4"/>
<rect x="1014.73" y="1001" width="1" height="3.4" fill="#c4c4c4"/>
<rect x="1017.20" y="1001" width="1" height="3.4" fill="#c4c4c4"/>
<rect x="1019.67" y="1001" width="1" height="3.4" fill="#c4c4c4"/>
<rect x="1022.15" y="1001" width="1" height="3.4" fill="#c4c4c4"/>
<rect x="1024.62" y="1001" width="1" height="3.4" fill="#c4c4c4"/>
<rect x="1027.10" y="1001" width="1" height="3.4" fill="#c4c4c4"/>
<rect x="1029.58" y="1001" width="1" height="3.4" fill="#c4c4c4"/>
<rect x="1032.05" y="1001" width="1" height="3.4" fill="#c4c4c4"/>
<rect x="1034.53" y="1001" width="1" height="3.4" fill="#c4c4c4"/>
<rect x="1037.00" y="1001" width="1" height="3.4" fill="#c4c4c4"/>
<rect x="1039.47" y="1001" width="1" height="3.4" fill="#c4c4c4"/>
<rect x="1041.95" y="1001" width="1" height="3.4" fill="#c4c4c4"/>
<rect x="1044.42" y="1001" width="1" height="3.4" fill="#c4c4c4"/>
<rect x="1046.90" y="1001" width="1" height="3.4" fill="#c4c4c4"/>
<rect x="1049.38" y="1001" width="1" height="3.4" fill="#c4c4c4"/>
<rect x="1051.85" y="1001" width="1" height="3.4" fill="#c4c4c4"/>
<rect x="1054.33" y="1001" width="1" height="3.4" fill="#c4c4c4"/>
<rect x="1056.80" y="1001" width="1" height="3.4" fill="#c4c4c4"/>
<rect x="1059.28" y="1001" width="1" height="3.4" fill="#c4c4c4"/>
<rect x="1061.75" y="1001" width="1" height="3.4" fill="#c4c4c4"/>
<rect x="1064.22" y="1001" width="1" height="3.4" fill="#c4c4c4"/>
<rect x="1066.70" y="1001" width="1" height="3.4" fill="#c4c4c4"/>
<rect x="1069.17" y="1001" width="1" height="3.4" fill="#c4c4c4"/>
<rect x="1071.65" y="1001" width="1" height="3.4" fill="#c4c4c4"/>
<rect x="1074.12" y="1001" width="1" height="3.4" fill="#c4c4c4"/>
<rect x="1076.60" y="1001" width="1" height="3.4" fill="#c4c4c4"/>
<rect x="1079.08" y="1001" width="1" height="3.4" fill="#c4c4c4"/>
<rect x="1081.55" y="1001" width="1" height="3.4" fill="#c4c4c4"/>
<rect x="1084.03" y="1001" width="1" height="3.4" fill="#c4c4c4"/>
<rect x="1086.50" y="1001" width="1" height="4" fill="#c4c4c4"/>
<text x="974.6" y="1021.8" font-size="12" fill="#000" text-anchor="start" font-weight="bold" textLength="26.2" lengthAdjust="spacingAndGlyphs" xml:space="preserve" >Slow</text>
<text x="1073.7" y="1021.8" font-size="12" fill="#000" text-anchor="start" font-weight="bold" textLength="24.4" lengthAdjust="spacingAndGlyphs" xml:space="preserve" >Fast</text>
<rect x="976.5" y="1039.5" width="122" height="20" fill="#e1e1e1" stroke="#adadad" stroke-width="1"/>
<text x="1037.5" y="1052.8" font-size="12" fill="#000" text-anchor="middle" font-weight="normal" textLength="84" lengthAdjust="spacingAndGlyphs" xml:space="preserve" >Landing Analysis</text>
<rect x="1131.5" y="950.5" width="122" height="20" fill="#e1e1e1" stroke="#adadad" stroke-width="1"/>
<text x="1192.5" y="963.8" font-size="12" fill="#000" text-anchor="middle" font-weight="normal" textLength="90" lengthAdjust="spacingAndGlyphs" xml:space="preserve" >Goto Top of Climb</text>
<rect x="1131.5" y="980.5" width="122" height="20" fill="#e1e1e1" stroke="#adadad" stroke-width="1"/>
<text x="1192.5" y="993.8" font-size="12" fill="#000" text-anchor="middle" font-weight="normal" textLength="102" lengthAdjust="spacingAndGlyphs" xml:space="preserve" >Goto Top of Descent</text>
<rect x="1131.5" y="1010.5" width="47" height="20" fill="#e1e1e1" stroke="#adadad" stroke-width="1"/>
<text x="1155.0" y="1023.8" font-size="12" fill="#000" text-anchor="middle" font-weight="normal" textLength="11.8" lengthAdjust="spacingAndGlyphs" xml:space="preserve" >&lt;&lt;</text>
<rect x="1206.5" y="1011.5" width="47" height="20" fill="#e1e1e1" stroke="#adadad" stroke-width="1"/>
<text x="1230.0" y="1024.8" font-size="12" fill="#000" text-anchor="middle" font-weight="normal" textLength="11.8" lengthAdjust="spacingAndGlyphs" xml:space="preserve" >&gt;&gt;</text>
<rect x="1131.5" y="1039.5" width="122" height="20" fill="#e1e1e1" stroke="#adadad" stroke-width="1"/>
<text x="1192.5" y="1052.8" font-size="12" fill="#000" text-anchor="middle" font-weight="normal" textLength="17.4" lengthAdjust="spacingAndGlyphs" xml:space="preserve" >Info</text>
</svg>
</body></html>
